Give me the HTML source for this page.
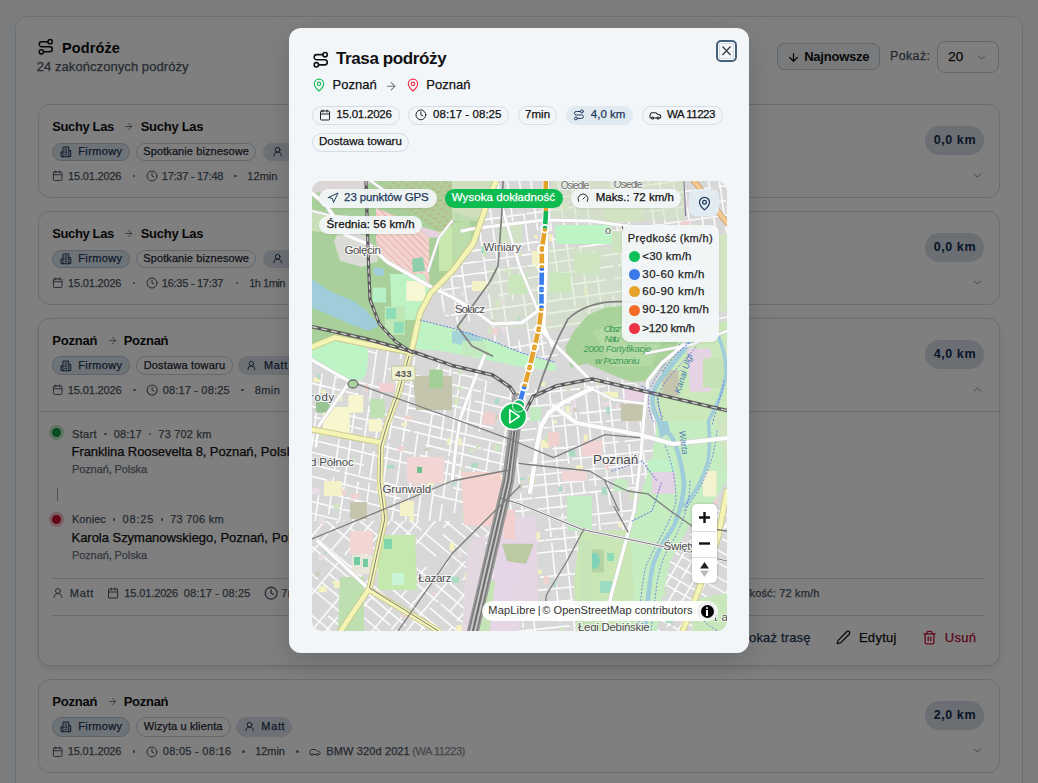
<!DOCTYPE html>
<html><head><meta charset="utf-8"><style>
*{box-sizing:border-box;margin:0;padding:0}
html,body{width:1038px;height:783px;overflow:hidden}
body{background:#f6f8fb;font-family:"Liberation Sans",sans-serif;color:#111827;position:relative}
.abs{position:absolute}
.panel{position:absolute;left:14.5px;top:16px;width:1008px;height:800px;background:#fff;border:1px solid #d9e0e8;border-radius:12px}
.card{position:absolute;left:37.5px;width:962px;background:#fff;border:1px solid #d3dae3;border-radius:12px}
.t{position:absolute;white-space:nowrap;line-height:1;-webkit-text-stroke:0.25px currentColor}
.overlay{position:absolute;left:0;top:0;width:1038px;height:783px;background:rgba(0,0,0,.5)}
svg{overflow:visible}
</style></head><body>
<div class="panel"></div><svg style="position:absolute;left:37.2px;top:38.4px" width="17.5" height="17.5" viewBox="0 0 24 24" fill="none" stroke="#111" stroke-width="2.1" stroke-linecap="round" stroke-linejoin="round" ><circle cx="6" cy="19" r="3"/><path d="M9 19h8.5a3.5 3.5 0 0 0 0-7h-11a3.5 3.5 0 0 1 0-7H15"/><circle cx="18" cy="5" r="3"/></svg><div class="t" style="left:61.93px;top:40.76px;font-size:14.5px;color:#0b0b0b;font-weight:bold;-webkit-text-stroke:0;letter-spacing:0.125px;">Podróże</div><div class="t" style="left:36.72px;top:59.54px;font-size:13px;color:#4b5563;letter-spacing:0.067px;">24 zakończonych podróży</div><div class="abs" style="left:776.5px;top:42.7px;width:103px;height:27.8px;border:1px solid #c3ccd6;border-radius:7px;background:#f1f4f7"></div><svg style="position:absolute;left:786.7px;top:50.5px" width="13" height="13" viewBox="0 0 24 24" fill="none" stroke="#111" stroke-width="2.3" stroke-linecap="round" stroke-linejoin="round" ><path d="M12 5v14"/><path d="m19 12-7 7-7-7"/></svg><div class="t" style="left:804.22px;top:49.84px;font-size:13px;color:#111;font-weight:bold;-webkit-text-stroke:0;letter-spacing:-0.236px;">Najnowsze</div><div class="t" style="left:889.95px;top:50.30px;font-size:12.5px;color:#4b5563;letter-spacing:0.367px;">Pokaż:</div><div class="abs" style="left:937.4px;top:41px;width:62px;height:31.8px;border:1px solid #c3ccd6;border-radius:8px;background:#fff"></div><div class="t" style="left:948.30px;top:49.78px;font-size:13.5px;color:#111;">20</div><svg style="position:absolute;left:974.5px;top:50.5px" width="13" height="13" viewBox="0 0 24 24" fill="none" stroke="#6b7280" stroke-width="1.4" stroke-linecap="round" stroke-linejoin="round" ><path d="m6 9 6 6 6-6"/></svg><div class="card" style="top:104px;height:94px;"></div><div class="t" style="left:52.22px;top:120.04px;font-size:13px;color:#111;font-weight:bold;-webkit-text-stroke:0;letter-spacing:-0.379px;">Suchy Las</div><svg style="position:absolute;left:123px;top:121.3px" width="11" height="11" viewBox="0 0 24 24" fill="none" stroke="#6b7280" stroke-width="2" stroke-linecap="round" stroke-linejoin="round" ><path d="M5 12h14"/><path d="m12 5 7 7-7 7"/></svg><div class="t" style="left:140.72px;top:120.04px;font-size:13px;color:#111;font-weight:bold;-webkit-text-stroke:0;letter-spacing:-0.279px;">Suchy Las</div><div class="abs" style="left:52.3px;top:142.5px;width:77.50000000000001px;height:18.5px;border-radius:9.25px;background:#dde7f0;border:1px solid #b8c4d0;"></div><svg style="position:absolute;left:60.22392px;top:145.87px" width="11.759999999999996" height="11.759999999999996" viewBox="0 0 24 24" fill="none" stroke="#1d3557" stroke-width="2.1" stroke-linecap="round" stroke-linejoin="round" ><path d="M6 22V4a2 2 0 0 1 2-2h8a2 2 0 0 1 2 2v18Z"/><path d="M6 12H4a2 2 0 0 0-2 2v6a2 2 0 0 0 2 2h2"/><path d="M18 9h2a2 2 0 0 1 2 2v9a2 2 0 0 1-2 2h-2"/><path d="M10 6h4"/><path d="M10 10h4"/><path d="M10 14h4"/><path d="M10 18h4"/></svg><div class="t" style="left:78.24px;top:146.33px;font-size:11px;color:#1d3557;letter-spacing:0.375px;">Firmowy</div><div class="abs" style="left:136px;top:142.5px;width:120px;height:18.5px;border-radius:9.25px;background:#fff;border:1px solid #c6ced8;"></div><div class="t" style="left:143.34px;top:146.33px;font-size:11px;color:#1f2937;letter-spacing:0.091px;">Spotkanie biznesowe</div><div class="abs" style="left:262.5px;top:142.5px;width:67.5px;height:18.5px;border-radius:9.25px;background:#dbe3eb;border:1px solid #dbe3eb;"></div><svg style="position:absolute;left:271.66376px;top:146.11px" width="11.279999999999973" height="11.279999999999973" viewBox="0 0 24 24" fill="none" stroke="#1d3557" stroke-width="2.1" stroke-linecap="round" stroke-linejoin="round" ><circle cx="12" cy="8" r="5"/><path d="M20 21a8 8 0 0 0-16 0"/></svg><div class="t" style="left:289.34px;top:146.33px;font-size:11px;color:#1d3557;letter-spacing:0.568px;">Matt</div><svg style="position:absolute;left:52.0538px;top:170.3px" width="11.4" height="11.4" viewBox="0 0 24 24" fill="none" stroke="#4b5563" stroke-width="2" stroke-linecap="round" stroke-linejoin="round" ><rect width="18" height="18" x="3" y="4" rx="2"/><path d="M16 2v4"/><path d="M8 2v4"/><path d="M3 10h18"/></svg><div class="t" style="left:68.04px;top:170.58px;font-size:11px;color:#4b5563;letter-spacing:-0.184px;">15.01.2026</div><div class="abs" style="left:132.8px;top:174.8px;width:2.4px;height:2.4px;border-radius:2px;background:#6b7280"></div><svg style="position:absolute;left:146.004px;top:170.0px" width="12.0" height="12.0" viewBox="0 0 24 24" fill="none" stroke="#4b5563" stroke-width="2" stroke-linecap="round" stroke-linejoin="round" ><circle cx="12" cy="12" r="10"/><path d="M12 6v6l4 2"/></svg><div class="t" style="left:161.84px;top:170.58px;font-size:11px;color:#4b5563;letter-spacing:-0.270px;">17:37 - 17:48</div><div class="abs" style="left:234.3px;top:174.8px;width:2.4px;height:2.4px;border-radius:2px;background:#6b7280"></div><div class="t" style="left:247.34px;top:170.58px;font-size:11px;color:#4b5563;letter-spacing:0.035px;">12min</div><div class="abs" style="left:925.3px;top:126.3px;width:59.2px;height:28.3px;border-radius:14.2px;background:#d6dee7"></div><div class="t" style="left:933.75px;top:134.30px;font-size:12.5px;color:#112b4d;font-weight:bold;-webkit-text-stroke:0;letter-spacing:0.567px;">0,0 km</div><svg style="position:absolute;left:970.5px;top:168.5px" width="13" height="13" viewBox="0 0 24 24" fill="none" stroke="#6b7280" stroke-width="1.6" stroke-linecap="round" stroke-linejoin="round" ><path d="m6 9 6 6 6-6"/></svg><div class="card" style="top:211px;height:94px;"></div><div class="t" style="left:52.22px;top:227.04px;font-size:13px;color:#111;font-weight:bold;-webkit-text-stroke:0;letter-spacing:-0.379px;">Suchy Las</div><svg style="position:absolute;left:123px;top:228.3px" width="11" height="11" viewBox="0 0 24 24" fill="none" stroke="#6b7280" stroke-width="2" stroke-linecap="round" stroke-linejoin="round" ><path d="M5 12h14"/><path d="m12 5 7 7-7 7"/></svg><div class="t" style="left:140.72px;top:227.04px;font-size:13px;color:#111;font-weight:bold;-webkit-text-stroke:0;letter-spacing:-0.279px;">Suchy Las</div><div class="abs" style="left:52.3px;top:249.5px;width:77.50000000000001px;height:18.5px;border-radius:9.25px;background:#dde7f0;border:1px solid #b8c4d0;"></div><svg style="position:absolute;left:60.22392px;top:252.87px" width="11.759999999999996" height="11.759999999999996" viewBox="0 0 24 24" fill="none" stroke="#1d3557" stroke-width="2.1" stroke-linecap="round" stroke-linejoin="round" ><path d="M6 22V4a2 2 0 0 1 2-2h8a2 2 0 0 1 2 2v18Z"/><path d="M6 12H4a2 2 0 0 0-2 2v6a2 2 0 0 0 2 2h2"/><path d="M18 9h2a2 2 0 0 1 2 2v9a2 2 0 0 1-2 2h-2"/><path d="M10 6h4"/><path d="M10 10h4"/><path d="M10 14h4"/><path d="M10 18h4"/></svg><div class="t" style="left:78.24px;top:253.33px;font-size:11px;color:#1d3557;letter-spacing:0.375px;">Firmowy</div><div class="abs" style="left:136px;top:249.5px;width:120px;height:18.5px;border-radius:9.25px;background:#fff;border:1px solid #c6ced8;"></div><div class="t" style="left:143.34px;top:253.33px;font-size:11px;color:#1f2937;letter-spacing:0.091px;">Spotkanie biznesowe</div><div class="abs" style="left:262.5px;top:249.5px;width:67.5px;height:18.5px;border-radius:9.25px;background:#dbe3eb;border:1px solid #dbe3eb;"></div><svg style="position:absolute;left:271.66376px;top:253.11px" width="11.279999999999973" height="11.279999999999973" viewBox="0 0 24 24" fill="none" stroke="#1d3557" stroke-width="2.1" stroke-linecap="round" stroke-linejoin="round" ><circle cx="12" cy="8" r="5"/><path d="M20 21a8 8 0 0 0-16 0"/></svg><div class="t" style="left:289.34px;top:253.33px;font-size:11px;color:#1d3557;letter-spacing:0.568px;">Matt</div><svg style="position:absolute;left:52.0538px;top:277.3px" width="11.4" height="11.4" viewBox="0 0 24 24" fill="none" stroke="#4b5563" stroke-width="2" stroke-linecap="round" stroke-linejoin="round" ><rect width="18" height="18" x="3" y="4" rx="2"/><path d="M16 2v4"/><path d="M8 2v4"/><path d="M3 10h18"/></svg><div class="t" style="left:68.04px;top:277.58px;font-size:11px;color:#4b5563;letter-spacing:-0.184px;">15.01.2026</div><div class="abs" style="left:132.8px;top:281.8px;width:2.4px;height:2.4px;border-radius:2px;background:#6b7280"></div><svg style="position:absolute;left:146.004px;top:277.0px" width="12.0" height="12.0" viewBox="0 0 24 24" fill="none" stroke="#4b5563" stroke-width="2" stroke-linecap="round" stroke-linejoin="round" ><circle cx="12" cy="12" r="10"/><path d="M12 6v6l4 2"/></svg><div class="t" style="left:161.84px;top:277.58px;font-size:11px;color:#4b5563;letter-spacing:-0.270px;">16:35 - 17:37</div><div class="abs" style="left:235.8px;top:281.8px;width:2.4px;height:2.4px;border-radius:2px;background:#6b7280"></div><div class="t" style="left:249.14px;top:277.58px;font-size:11px;color:#4b5563;letter-spacing:-0.473px;">1h 1min</div><div class="abs" style="left:925.3px;top:233.3px;width:59.2px;height:28.3px;border-radius:14.2px;background:#d6dee7"></div><div class="t" style="left:933.75px;top:241.30px;font-size:12.5px;color:#112b4d;font-weight:bold;-webkit-text-stroke:0;letter-spacing:0.567px;">0,0 km</div><svg style="position:absolute;left:970.5px;top:275.5px" width="13" height="13" viewBox="0 0 24 24" fill="none" stroke="#6b7280" stroke-width="1.6" stroke-linecap="round" stroke-linejoin="round" ><path d="m6 9 6 6 6-6"/></svg><div class="card" style="top:318px;height:348px;box-shadow:0 3px 8px rgba(0,0,0,.10);"></div><div class="t" style="left:52.22px;top:334.04px;font-size:13px;color:#111;font-weight:bold;-webkit-text-stroke:0;letter-spacing:-0.185px;">Poznań</div><svg style="position:absolute;left:107px;top:335.3px" width="11" height="11" viewBox="0 0 24 24" fill="none" stroke="#6b7280" stroke-width="2" stroke-linecap="round" stroke-linejoin="round" ><path d="M5 12h14"/><path d="m12 5 7 7-7 7"/></svg><div class="t" style="left:123.72px;top:334.04px;font-size:13px;color:#111;font-weight:bold;-webkit-text-stroke:0;letter-spacing:-0.285px;">Poznań</div><div class="abs" style="left:52.3px;top:356.3px;width:77.50000000000001px;height:18.69999999999999px;border-radius:9.349999999999994px;background:#dde7f0;border:1px solid #b8c4d0;"></div><svg style="position:absolute;left:60.22392px;top:359.77px" width="11.759999999999996" height="11.759999999999996" viewBox="0 0 24 24" fill="none" stroke="#1d3557" stroke-width="2.1" stroke-linecap="round" stroke-linejoin="round" ><path d="M6 22V4a2 2 0 0 1 2-2h8a2 2 0 0 1 2 2v18Z"/><path d="M6 12H4a2 2 0 0 0-2 2v6a2 2 0 0 0 2 2h2"/><path d="M18 9h2a2 2 0 0 1 2 2v9a2 2 0 0 1-2 2h-2"/><path d="M10 6h4"/><path d="M10 10h4"/><path d="M10 14h4"/><path d="M10 18h4"/></svg><div class="t" style="left:78.24px;top:360.23px;font-size:11px;color:#1d3557;letter-spacing:0.375px;">Firmowy</div><div class="abs" style="left:136.2px;top:356.3px;width:96.5px;height:18.69999999999999px;border-radius:9.349999999999994px;background:#fff;border:1px solid #c6ced8;"></div><div class="t" style="left:143.64px;top:360.23px;font-size:11px;color:#1f2937;letter-spacing:0.194px;">Dostawa towaru</div><div class="abs" style="left:238.4px;top:356.3px;width:71.6px;height:18.69999999999999px;border-radius:9.349999999999994px;background:#dbe3eb;border:1px solid #dbe3eb;"></div><svg style="position:absolute;left:246.1036px;top:360.25px" width="10.799999999999999" height="10.799999999999999" viewBox="0 0 24 24" fill="none" stroke="#1d3557" stroke-width="2.1" stroke-linecap="round" stroke-linejoin="round" ><circle cx="12" cy="8" r="5"/><path d="M20 21a8 8 0 0 0-16 0"/></svg><div class="t" style="left:263.94px;top:360.23px;font-size:11px;color:#1d3557;letter-spacing:0.635px;">Matt</div><svg style="position:absolute;left:52.0538px;top:384.3px" width="11.4" height="11.4" viewBox="0 0 24 24" fill="none" stroke="#4b5563" stroke-width="2" stroke-linecap="round" stroke-linejoin="round" ><rect width="18" height="18" x="3" y="4" rx="2"/><path d="M16 2v4"/><path d="M8 2v4"/><path d="M3 10h18"/></svg><div class="t" style="left:67.84px;top:384.58px;font-size:11px;color:#4b5563;letter-spacing:-0.140px;">15.01.2026</div><div class="abs" style="left:133.20000000000002px;top:388.8px;width:2.4px;height:2.4px;border-radius:2px;background:#6b7280"></div><svg style="position:absolute;left:146.08408px;top:383.88px" width="12.24000000000002" height="12.24000000000002" viewBox="0 0 24 24" fill="none" stroke="#4b5563" stroke-width="2" stroke-linecap="round" stroke-linejoin="round" ><circle cx="12" cy="12" r="10"/><path d="M12 6v6l4 2"/></svg><div class="t" style="left:162.64px;top:384.58px;font-size:11px;color:#4b5563;letter-spacing:0.180px;">08:17 - 08:25</div><div class="abs" style="left:241.20000000000002px;top:388.8px;width:2.4px;height:2.4px;border-radius:2px;background:#6b7280"></div><div class="t" style="left:254.64px;top:384.58px;font-size:11px;color:#4b5563;letter-spacing:0.452px;">8min</div><div class="abs" style="left:925.3px;top:340.3px;width:59.2px;height:28.3px;border-radius:14.2px;background:#d6dee7"></div><div class="t" style="left:933.75px;top:348.30px;font-size:12.5px;color:#112b4d;font-weight:bold;-webkit-text-stroke:0;letter-spacing:0.567px;">4,0 km</div><svg style="position:absolute;left:970.5px;top:382.5px" width="13" height="13" viewBox="0 0 24 24" fill="none" stroke="#6b7280" stroke-width="1.6" stroke-linecap="round" stroke-linejoin="round" ><path d="m18 15-6-6-6 6"/></svg><div class="abs" style="left:38.5px;top:410.5px;width:960px;height:1px;background:#d3dae3"></div><div class="abs" style="left:49px;top:424.7px;width:15px;height:15px;border-radius:8px;background:#bfe6c9"></div><div class="abs" style="left:52px;top:427.8px;width:9px;height:9px;border-radius:5px;background:#0c9a41"></div><div class="t" style="left:71.94px;top:428.58px;font-size:11px;color:#4b5563;letter-spacing:0.367px;">Start</div><div class="abs" style="left:104.2px;top:432.8px;width:2.4px;height:2.4px;border-radius:2px;background:#6b7280"></div><div class="t" style="left:113.84px;top:428.58px;font-size:11px;color:#4b5563;letter-spacing:0.068px;">08:17</div><div class="abs" style="left:148.70000000000002px;top:432.8px;width:2.4px;height:2.4px;border-radius:2px;background:#6b7280"></div><div class="t" style="left:158.34px;top:428.58px;font-size:11px;color:#4b5563;letter-spacing:0.204px;">73 702 km</div><div class="t" style="left:71.52px;top:445.04px;font-size:13px;color:#111;letter-spacing:-0.077px;">Franklina Roosevelta 8, Poznań,</div><div class="t" style="left:260.82px;top:445.04px;font-size:13px;color:#111;letter-spacing:0.136px;">Polska</div><div class="t" style="left:71.94px;top:464.28px;font-size:11px;color:#6b7280;letter-spacing:-0.095px;">Poznań, Polska</div><div class="abs" style="left:56.5px;top:488px;width:1.3px;height:13px;background:#9aa3ad"></div><div class="abs" style="left:49px;top:511.9px;width:15px;height:15px;border-radius:8px;background:#f0c0c7"></div><div class="abs" style="left:52px;top:515px;width:9px;height:9px;border-radius:5px;background:#c8102e"></div><div class="t" style="left:71.94px;top:514.18px;font-size:11px;color:#4b5563;letter-spacing:0.053px;">Koniec</div><div class="abs" style="left:112.8px;top:518.4px;width:2.4px;height:2.4px;border-radius:2px;background:#6b7280"></div><div class="t" style="left:122.54px;top:514.18px;font-size:11px;color:#4b5563;letter-spacing:0.843px;">08:25</div><div class="abs" style="left:161.0px;top:518.4px;width:2.4px;height:2.4px;border-radius:2px;background:#6b7280"></div><div class="t" style="left:170.14px;top:514.18px;font-size:11px;color:#4b5563;letter-spacing:0.267px;">73 706 km</div><div class="t" style="left:71.52px;top:531.04px;font-size:13px;color:#111;letter-spacing:-0.030px;">Karola Szymanowskiego, Poznań,</div><div class="t" style="left:272.12px;top:531.04px;font-size:13px;color:#111;letter-spacing:0.076px;">Polska</div><div class="t" style="left:71.94px;top:550.48px;font-size:11px;color:#6b7280;letter-spacing:-0.095px;">Poznań, Polska</div><div class="abs" style="left:52px;top:578px;width:933px;height:1px;background:#d3dae3"></div><svg style="position:absolute;left:52.004px;top:587.3px" width="12.0" height="12.0" viewBox="0 0 24 24" fill="none" stroke="#4b5563" stroke-width="2" stroke-linecap="round" stroke-linejoin="round" ><circle cx="12" cy="8" r="5"/><path d="M20 21a8 8 0 0 0-16 0"/></svg><div class="t" style="left:69.84px;top:587.88px;font-size:11px;color:#4b5563;letter-spacing:0.702px;">Matt</div><svg style="position:absolute;left:107.39404px;top:587.24px" width="12.119999999999992" height="12.119999999999992" viewBox="0 0 24 24" fill="none" stroke="#4b5563" stroke-width="2" stroke-linecap="round" stroke-linejoin="round" ><rect width="18" height="18" x="3" y="4" rx="2"/><path d="M16 2v4"/><path d="M8 2v4"/><path d="M3 10h18"/></svg><div class="t" style="left:124.34px;top:587.88px;font-size:11px;color:#4b5563;letter-spacing:-0.129px;">15.01.2026</div><div class="t" style="left:183.64px;top:587.88px;font-size:11px;color:#4b5563;letter-spacing:0.164px;">08:17 - 08:25</div><svg style="position:absolute;left:264.41476px;top:586.16px" width="14.279999999999973" height="14.279999999999973" viewBox="0 0 24 24" fill="none" stroke="#4b5563" stroke-width="2" stroke-linecap="round" stroke-linejoin="round" ><circle cx="12" cy="12" r="10"/><path d="M12 6v6l4 2"/></svg><div class="t" style="left:281.34px;top:587.88px;font-size:11px;color:#4b5563;letter-spacing:0.419px;">7min</div><div class="t" style="left:693.34px;top:587.88px;font-size:11px;color:#4b5563;letter-spacing:0.174px;">Maks. prędkość: 72 km/h</div><div class="abs" style="left:52px;top:615px;width:933px;height:1px;background:#d3dae3"></div><div class="t" style="left:740.22px;top:630.54px;font-size:13px;color:#1d3557;letter-spacing:0.165px;">Pokaż trasę</div><svg style="position:absolute;left:835.5px;top:629.5px" width="15" height="15" viewBox="0 0 24 24" fill="none" stroke="#111" stroke-width="2" stroke-linecap="round" stroke-linejoin="round" ><path d="M21.174 6.812a1 1 0 0 0-3.986-3.987L3.842 16.174a2 2 0 0 0-.5.83l-1.321 4.352a.5.5 0 0 0 .623.622l4.353-1.32a2 2 0 0 0 .83-.497z"/></svg><div class="t" style="left:858.92px;top:630.54px;font-size:13px;color:#111;letter-spacing:0.293px;">Edytuj</div><svg style="position:absolute;left:922px;top:629.5px" width="15" height="15" viewBox="0 0 24 24" fill="none" stroke="#c8103a" stroke-width="2" stroke-linecap="round" stroke-linejoin="round" ><path d="M3 6h18"/><path d="M19 6v14c0 1-1 2-2 2H7c-1 0-2-1-2-2V6"/><path d="M8 6V4c0-1 1-2 2-2h4c1 0 2 1 2 2v2"/><line x1="10" x2="10" y1="11" y2="17"/><line x1="14" x2="14" y1="11" y2="17"/></svg><div class="t" style="left:944.72px;top:630.54px;font-size:13px;color:#b80f2f;letter-spacing:0.283px;">Usuń</div><div class="card" style="top:679px;height:93.5px;"></div><div class="t" style="left:52.22px;top:695.04px;font-size:13px;color:#111;font-weight:bold;-webkit-text-stroke:0;letter-spacing:-0.185px;">Poznań</div><svg style="position:absolute;left:107px;top:696.3px" width="11" height="11" viewBox="0 0 24 24" fill="none" stroke="#6b7280" stroke-width="2" stroke-linecap="round" stroke-linejoin="round" ><path d="M5 12h14"/><path d="m12 5 7 7-7 7"/></svg><div class="t" style="left:123.72px;top:695.04px;font-size:13px;color:#111;font-weight:bold;-webkit-text-stroke:0;letter-spacing:-0.285px;">Poznań</div><div class="abs" style="left:52.3px;top:717px;width:77.50000000000001px;height:19.5px;border-radius:9.75px;background:#dde7f0;border:1px solid #b8c4d0;"></div><svg style="position:absolute;left:60.22392px;top:720.87px" width="11.759999999999996" height="11.759999999999996" viewBox="0 0 24 24" fill="none" stroke="#1d3557" stroke-width="2.1" stroke-linecap="round" stroke-linejoin="round" ><path d="M6 22V4a2 2 0 0 1 2-2h8a2 2 0 0 1 2 2v18Z"/><path d="M6 12H4a2 2 0 0 0-2 2v6a2 2 0 0 0 2 2h2"/><path d="M18 9h2a2 2 0 0 1 2 2v9a2 2 0 0 1-2 2h-2"/><path d="M10 6h4"/><path d="M10 10h4"/><path d="M10 14h4"/><path d="M10 18h4"/></svg><div class="t" style="left:78.24px;top:721.33px;font-size:11px;color:#1d3557;letter-spacing:0.375px;">Firmowy</div><div class="abs" style="left:136.2px;top:717px;width:94.4px;height:19.5px;border-radius:9.75px;background:#fff;border:1px solid #c6ced8;"></div><div class="t" style="left:143.64px;top:721.33px;font-size:11px;color:#1f2937;letter-spacing:0.118px;">Wizyta u klienta</div><div class="abs" style="left:236px;top:717px;width:56.19999999999999px;height:19.5px;border-radius:9.75px;background:#dbe3eb;border:1px solid #dbe3eb;"></div><svg style="position:absolute;left:244.07372px;top:721.17px" width="11.160000000000013" height="11.160000000000013" viewBox="0 0 24 24" fill="none" stroke="#1d3557" stroke-width="2.1" stroke-linecap="round" stroke-linejoin="round" ><circle cx="12" cy="8" r="5"/><path d="M20 21a8 8 0 0 0-16 0"/></svg><div class="t" style="left:261.34px;top:721.33px;font-size:11px;color:#1d3557;letter-spacing:0.635px;">Matt</div><svg style="position:absolute;left:52.0538px;top:745.8px" width="11.4" height="11.4" viewBox="0 0 24 24" fill="none" stroke="#4b5563" stroke-width="2" stroke-linecap="round" stroke-linejoin="round" ><rect width="18" height="18" x="3" y="4" rx="2"/><path d="M16 2v4"/><path d="M8 2v4"/><path d="M3 10h18"/></svg><div class="t" style="left:67.74px;top:746.08px;font-size:11px;color:#4b5563;letter-spacing:-0.151px;">15.01.2026</div><div class="abs" style="left:132.8px;top:750.3px;width:2.4px;height:2.4px;border-radius:2px;background:#6b7280"></div><svg style="position:absolute;left:146.31396px;top:745.5600000000001px" width="11.879999999999972" height="11.879999999999972" viewBox="0 0 24 24" fill="none" stroke="#4b5563" stroke-width="2" stroke-linecap="round" stroke-linejoin="round" ><circle cx="12" cy="12" r="10"/><path d="M12 6v6l4 2"/></svg><div class="t" style="left:162.74px;top:746.08px;font-size:11px;color:#4b5563;letter-spacing:0.289px;">08:05 - 08:16</div><div class="abs" style="left:242.3px;top:750.3px;width:2.4px;height:2.4px;border-radius:2px;background:#6b7280"></div><div class="t" style="left:255.24px;top:746.08px;font-size:11px;color:#4b5563;letter-spacing:-0.065px;">12min</div><div class="abs" style="left:296.3px;top:750.3px;width:2.4px;height:2.4px;border-radius:2px;background:#6b7280"></div><svg style="position:absolute;left:308.80400000000003px;top:745.5px" width="12.0" height="12.0" viewBox="0 0 24 24" fill="none" stroke="#4b5563" stroke-width="2" stroke-linecap="round" stroke-linejoin="round" ><path d="M19 17h2c.6 0 1-.4 1-1v-3c0-.9-.7-1.7-1.5-1.9C18.7 10.6 16 10 16 10s-1.3-1.4-2.2-2.3c-.5-.4-1.1-.7-1.8-.7H5c-.6 0-1.1.4-1.4.9l-1.4 2.9A3.7 3.7 0 0 0 2 12v4c0 .6.4 1 1 1h2"/><circle cx="7" cy="17" r="2"/><path d="M9 17h6"/><circle cx="17" cy="17" r="2"/></svg><div class="t" style="left:326.34px;top:746.08px;font-size:11px;color:#4b5563;letter-spacing:0.122px;">BMW 320d 2021</div><div class="t" style="left:412.34px;top:746.08px;font-size:11px;color:#8a929c;letter-spacing:-0.440px;">(WA 11223)</div><div class="abs" style="left:925.3px;top:701.3px;width:59.2px;height:28.3px;border-radius:14.2px;background:#d6dee7"></div><div class="t" style="left:933.75px;top:709.30px;font-size:12.5px;color:#112b4d;font-weight:bold;-webkit-text-stroke:0;letter-spacing:0.567px;">2,0 km</div><svg style="position:absolute;left:970.5px;top:743.5px" width="13" height="13" viewBox="0 0 24 24" fill="none" stroke="#6b7280" stroke-width="1.6" stroke-linecap="round" stroke-linejoin="round" ><path d="m6 9 6 6 6-6"/></svg>
<div class="overlay"></div>
<div class="abs" style="left:289px;top:28px;width:460.4px;height:625px;background:#f3f6f9;border-radius:12px;box-shadow:0 10px 30px rgba(0,0,0,.15)"></div><svg style="position:absolute;left:311.8px;top:51.1px" width="17.5" height="17.5" viewBox="0 0 24 24" fill="none" stroke="#111" stroke-width="2.2" stroke-linecap="round" stroke-linejoin="round" ><circle cx="6" cy="19" r="3"/><path d="M9 19h8.5a3.5 3.5 0 0 0 0-7h-11a3.5 3.5 0 0 1 0-7H15"/><circle cx="18" cy="5" r="3"/></svg><div class="t" style="left:335.98px;top:50.16px;font-size:17px;color:#111;font-weight:bold;-webkit-text-stroke:0;letter-spacing:-0.380px;">Trasa podróży</div><svg style="position:absolute;left:311.6px;top:78.2px" width="14" height="14" viewBox="0 0 24 24" fill="none" stroke="#16c05a" stroke-width="2" stroke-linecap="round" stroke-linejoin="round" ><path d="M20 10c0 4.993-5.539 10.193-7.399 11.799a1 1 0 0 1-1.202 0C9.539 20.193 4 14.993 4 10a8 8 0 0 1 16 0"/><circle cx="12" cy="10" r="3"/></svg><div class="t" style="left:332.62px;top:78.44px;font-size:13px;color:#111;letter-spacing:0.001px;">Poznań</div><svg style="position:absolute;left:384.5px;top:79.5px" width="12.5" height="12.5" viewBox="0 0 24 24" fill="none" stroke="#6b7280" stroke-width="2" stroke-linecap="round" stroke-linejoin="round" ><path d="M5 12h14"/><path d="m12 5 7 7-7 7"/></svg><svg style="position:absolute;left:405.6px;top:78.2px" width="14" height="14" viewBox="0 0 24 24" fill="none" stroke="#ef3047" stroke-width="2" stroke-linecap="round" stroke-linejoin="round" ><path d="M20 10c0 4.993-5.539 10.193-7.399 11.799a1 1 0 0 1-1.202 0C9.539 20.193 4 14.993 4 10a8 8 0 0 1 16 0"/><circle cx="12" cy="10" r="3"/></svg><div class="t" style="left:426.22px;top:78.44px;font-size:13px;color:#111;letter-spacing:0.041px;">Poznań</div><div class="abs" style="left:312px;top:105.8px;width:88.30px;height:19.10px;border-radius:9.55px;background:#f3f6f9;border:1px solid #d5dce4;"></div><svg style="position:absolute;left:319.004px;top:109.35px" width="12.0" height="12.0" viewBox="0 0 24 24" fill="none" stroke="#222" stroke-width="2" stroke-linecap="round" stroke-linejoin="round" ><rect width="18" height="18" x="3" y="4" rx="2"/><path d="M16 2v4"/><path d="M8 2v4"/><path d="M3 10h18"/></svg><div class="t" style="left:336.31px;top:109.17px;font-size:11.5px;color:#111;letter-spacing:-0.212px;">15.01.2026</div><div class="abs" style="left:408px;top:105.8px;width:101.00px;height:19.10px;border-radius:9.55px;background:#f3f6f9;border:1px solid #d5dce4;"></div><svg style="position:absolute;left:415.02392px;top:109.46999999999998px" width="11.760000000000014" height="11.760000000000014" viewBox="0 0 24 24" fill="none" stroke="#222" stroke-width="2" stroke-linecap="round" stroke-linejoin="round" ><circle cx="12" cy="12" r="10"/><path d="M12 6v6l4 2"/></svg><div class="t" style="left:433.11px;top:109.17px;font-size:11.5px;color:#111;letter-spacing:0.048px;">08:17 - 08:25</div><div class="abs" style="left:517.9px;top:105.8px;width:39.50px;height:19.10px;border-radius:9.55px;background:#f3f6f9;border:1px solid #d5dce4;"></div><div class="t" style="left:524.91px;top:109.17px;font-size:11.5px;color:#111;letter-spacing:0.075px;">7min</div><div class="abs" style="left:565.6px;top:105.8px;width:67.70px;height:19.10px;border-radius:9.55px;background:#e1e9f1;"></div><svg style="position:absolute;left:572.81396px;top:109.40999999999994px" width="11.88000000000011" height="11.88000000000011" viewBox="0 0 24 24" fill="none" stroke="#1d3a5c" stroke-width="2" stroke-linecap="round" stroke-linejoin="round" ><circle cx="6" cy="19" r="3"/><path d="M9 19h8.5a3.5 3.5 0 0 0 0-7h-11a3.5 3.5 0 0 1 0-7H15"/><circle cx="18" cy="5" r="3"/></svg><div class="t" style="left:590.81px;top:109.17px;font-size:11.5px;color:#1d3a5c;letter-spacing:0.028px;">4,0 km</div><div class="abs" style="left:642px;top:105.8px;width:81.00px;height:19.10px;border-radius:9.55px;background:#f3f6f9;border:1px solid #d5dce4;"></div><svg style="position:absolute;left:648.6442400000001px;top:108.99000000000005px" width="12.71999999999989" height="12.71999999999989" viewBox="0 0 24 24" fill="none" stroke="#222" stroke-width="2" stroke-linecap="round" stroke-linejoin="round" ><path d="M19 17h2c.6 0 1-.4 1-1v-3c0-.9-.7-1.7-1.5-1.9C18.7 10.6 16 10 16 10s-1.3-1.4-2.2-2.3c-.5-.4-1.1-.7-1.8-.7H5c-.6 0-1.1.4-1.4.9l-1.4 2.9A3.7 3.7 0 0 0 2 12v4c0 .6.4 1 1 1h2"/><circle cx="7" cy="17" r="2"/><path d="M9 17h6"/><circle cx="17" cy="17" r="2"/></svg><div class="t" style="left:667.11px;top:109.17px;font-size:11.5px;color:#111;letter-spacing:-0.505px;">WA 11223</div><div class="abs" style="left:312px;top:132.5px;width:97.40px;height:19.50px;border-radius:9.75px;background:#f3f6f9;border:1px solid #d5dce4;"></div><div class="t" style="left:319.01px;top:136.07px;font-size:11.5px;color:#111;letter-spacing:0.031px;">Dostawa towaru</div><div class="abs" style="left:716px;top:40px;width:21.2px;height:21.8px;border-radius:5px;border:2px solid #45607c;box-shadow:inset 0 0 0 1px #fff"></div><div class="abs" style="left:719.4px;top:43.3px;width:14.6px;height:15.4px;border:1px solid #d3dae2;border-radius:1px"></div><svg style="position:absolute;left:722.3px;top:46.3px" width="9" height="9" viewBox="0 0 9 9" fill="none" stroke="#3a3a3a" stroke-width="1.25"><path d="M0.5 0.5l8 8.5M8.5 0.5l-8 8.5"/></svg><svg style="position:absolute;left:312px;top:181px" width="415" height="450" viewBox="0 0 415 450"><defs><clipPath id="mc"><rect x="0" y="0" width="415" height="450" rx="10"/></clipPath></defs><g clip-path="url(#mc)"><rect x="0" y="0" width="415" height="450" fill="#d9d8d8"/><defs><clipPath id="dA"><polygon points="165,0 415,0 415,140 370,150 356,161 310,135 293,129 273,143 253,166 240,180 208,180 178,166 140,150 123,109 161,63 178,14"/></clipPath><clipPath id="dB"><polygon points="0,166 60,168 95,172 208,212 207,225 196,300 186,340 0,340"/></clipPath><clipPath id="dB2"><polygon points="0,340 186,340 161,450 0,450"/></clipPath><clipPath id="dC"><polygon points="208,212 260,200 300,196 415,228 415,270 340,280 330,330 318,380 300,450 161,450 196,300 207,225"/></clipPath><clipPath id="dD"><polygon points="0,40 70,55 65,80 0,80"/></clipPath><clipPath id="dE"><polygon points="358,379 395,330 415,320 415,450 345,450"/></clipPath></defs><path clip-path="url(#dA)" d="M487.9,-147.7L496.1,-89.4M497.1,-82.0L505.4,-22.7M506.1,-18.0L511.5,20.4M512.2,25.4L523.9,109.1M534.5,184.0L544.8,257.3M545.0,258.5L548.6,284.4M548.7,284.9L554.1,323.8M554.2,324.0L562.5,383.2M563.4,389.9L572.3,453.2M572.9,457.2L583.3,531.1M488.9,-41.5L495.6,6.7M496.0,9.0L500.2,39.0M500.6,42.1L512.9,129.8M514.0,137.3L526.3,225.0M526.6,226.7L539.5,319.1M540.6,326.8L548.3,381.1M549.0,386.1L560.6,468.7M463.7,-144.3L469.7,-101.3M469.8,-100.8L481.6,-16.8M482.2,-12.4L490.4,45.6M491.2,51.4L496.0,85.9M496.2,86.8L504.0,142.8M518.3,244.2L531.0,334.7M531.4,337.8L543.8,426.0M543.9,426.8L557.8,525.0M450.8,-142.5L457.7,-93.3M457.8,-92.7L462.2,-61.3M462.5,-59.4L472.3,10.0M472.8,13.6L486.3,109.6M486.9,114.2L499.4,203.3M512.8,298.7L518.3,337.6M525.9,391.4L535.6,460.9M539.9,491.3L550.7,568.4M438.6,-140.8L445.1,-94.2M445.9,-88.5L450.1,-58.7M450.8,-54.2L463.1,33.8M463.5,36.0L476.5,128.9M476.5,129.1L482.8,173.8M482.9,174.3L488.2,212.1M488.8,216.7L493.7,251.2M494.7,258.3L508.4,355.8M509.2,361.3L518.7,429.5M523.2,461.4L536.8,557.7M426.8,-139.1L437.9,-60.1M439.0,-52.2L443.3,-21.9M444.1,-16.0L457.0,75.6M481.5,250.2L489.3,305.9M490.3,312.8L499.7,380.1M500.2,383.1L509.7,451.1M414.1,-137.3L421.6,-83.7M430.4,-21.0L441.7,59.5M442.4,64.2L450.9,124.7M451.7,130.2L460.4,191.9M461.4,199.2L467.5,243.0M467.9,245.4L478.4,320.5M478.6,321.8L491.6,413.9M492.0,417.4L504.8,508.3M505.6,513.6L511.1,553.1M400.7,-135.5L413.4,-45.3M414.0,-40.7L420.8,7.5M434.4,104.0L447.8,199.4M448.0,200.7L456.2,258.9M456.4,260.6L464.2,316.1M472.6,376.0L480.8,434.4M480.8,434.6L493.4,524.2M388.6,-133.8L395.3,-86.1M395.3,-85.9L400.2,-51.1M400.2,-50.9L412.4,35.5M412.5,36.6L416.5,64.9M417.0,68.4L427.1,140.0M428.0,146.4L441.4,242.3M441.7,243.9L450.1,303.9M450.1,304.0L458.5,363.8M458.7,365.3L465.0,410.2M465.8,415.8L474.7,479.2M475.6,485.2L483.2,539.1M378.2,-132.3L391.4,-38.3M391.5,-37.3L399.7,21.2M400.8,28.4L408.2,81.1M421.5,175.7L431.7,248.8M432.5,254.6L444.6,340.1M452.2,394.2L465.8,491.5M366.8,-130.7L371.2,-99.8M371.8,-95.4L383.3,-13.6M383.3,-13.4L395.2,71.4M396.1,77.8L401.4,115.4M402.3,121.6L407.2,156.8M419.6,244.9L433.0,339.9M434.0,347.4L438.4,378.5M439.0,382.7L445.5,429.0M455.8,502.1L462.5,550.0M360.3,-80.9L369.2,-17.2M369.4,-15.7L378.5,48.9M391.8,143.6L400.4,204.8M400.5,205.3L409.6,270.1M410.7,277.7L423.8,371.0M424.3,374.8L429.1,408.9M430.0,415.4L442.9,507.0M443.2,509.6L448.7,548.5M343.0,-127.4L354.6,-44.7M354.8,-43.2L360.6,-1.5M361.0,1.0L368.2,52.2M368.3,53.0L379.4,132.0M380.0,136.1L386.1,179.4M386.7,183.6L394.7,240.8M395.2,244.1L404.2,308.2M404.4,309.8L414.5,381.4M415.1,385.6L427.4,473.6M428.4,480.4L434.3,522.4M329.6,-125.5L336.4,-77.3M344.2,-22.0L349.1,12.7M349.9,18.5L356.1,62.5M357.0,69.1L364.9,125.2M365.0,126.2L372.7,180.9M372.7,181.0L378.3,220.7M379.3,227.9L392.9,324.6M393.5,328.6L404.8,409.6M405.6,415.1L411.1,453.9M411.2,454.7L415.1,482.3M415.6,486.3L425.0,553.3M332.1,-29.5L336.6,2.4M337.6,9.9L345.9,69.0M346.3,71.6L354.6,131.0M355.1,134.4L364.9,203.8M365.7,209.4L378.0,296.8M378.5,300.4L389.7,380.1M389.9,381.6L395.1,418.7M408.7,515.4L421.1,604.1M348.9,178.8L360.4,260.5M360.8,263.7L371.8,342.2M372.2,344.9L380.6,404.5M381.0,407.3L391.1,479.5M391.4,481.3L404.7,576.2M294.1,-120.5L303.5,-53.4M304.0,-50.3L317.9,48.7M330.1,135.7L340.0,206.2M340.3,208.2L348.0,262.8M348.2,264.4L355.6,317.0M355.9,319.0L368.8,411.0M369.4,415.1L383.0,511.6M281.9,-118.8L293.3,-37.6M294.3,-30.3L299.5,6.4M299.7,7.7L308.3,69.3M308.4,69.7L321.7,164.7M322.3,168.9L332.0,238.0M332.4,240.3L342.7,313.7M343.0,316.0L353.9,393.9M354.0,394.0L360.0,437.0M360.2,438.2L371.5,519.0M372.5,526.2L383.8,606.5M300.9,114.3L310.7,183.9M311.4,188.8L319.6,247.4M319.7,247.8L328.7,311.8M329.2,315.3L339.6,389.7M339.9,391.7L349.5,459.7M255.7,-115.1L261.7,-72.6M262.7,-65.6L274.3,17.5M274.7,20.3L281.0,65.2M281.7,69.7L291.3,138.4M292.2,144.4L297.6,183.2M311.8,284.1L315.9,313.3M316.4,316.7L326.4,387.8M327.0,392.0L331.2,422.2M332.0,427.5L341.2,493.2M341.6,496.2L350.1,556.5M243.0,-113.3L255.2,-26.3M255.3,-25.3L267.2,59.5M268.1,65.6L273.8,106.2M274.1,108.3L286.0,193.2M286.7,198.4L300.6,296.6M312.9,384.5L320.2,436.7M321.2,443.6L325.5,474.2M326.1,478.7L334.7,539.4M230.1,-111.5L234.4,-81.1M235.1,-75.8L239.4,-45.0M240.2,-39.3L251.0,37.0M251.1,38.2L258.3,89.5M258.7,92.4L263.4,125.9M286.6,290.3L293.3,338.6M294.4,346.0L307.2,437.3M307.6,440.1L314.9,492.0M315.3,495.2L322.9,548.7M226.9,-40.3L232.2,-2.4M233.2,4.5L239.6,50.2M240.2,54.3L249.3,119.5M260.8,200.7L270.0,266.1M270.0,266.8L274.4,297.6M275.4,304.7L279.7,335.8M279.9,336.9L291.2,417.1M291.4,419.0L297.2,460.1M297.8,464.3L309.3,545.8M203.6,-107.8L214.1,-33.1M214.7,-28.8L225.7,49.5M262.0,307.9L270.9,371.5M271.8,377.9L279.7,433.9M291.5,517.9L296.7,555.1M192.4,-106.2L206.0,-9.4M206.4,-7.0L211.1,26.3M211.9,32.5L217.3,70.5M227.4,142.6L232.0,175.4M232.3,177.1L238.2,219.4M238.9,224.1L244.7,265.5M245.0,267.7L250.3,305.3M267.6,428.4L274.6,478.5M275.7,486.1L284.2,546.7M180.5,-104.5L189.3,-41.4M190.4,-33.6L200.8,40.0M200.8,40.1L209.2,99.9M210.1,106.2L221.0,184.0M221.2,185.2L226.3,221.6M226.6,223.7L239.1,313.0M239.9,318.1L253.7,416.6M254.3,420.8L259.3,456.8M272.3,549.0L276.7,579.9M170.0,-103.0L178.5,-42.6M189.5,35.7L201.2,119.0M206.9,159.5L216.1,224.6M216.2,225.8L228.4,312.4M228.8,314.8L233.0,345.2M233.5,349.0L244.5,426.8M245.3,432.3L249.8,464.9M159.9,-101.6L167.3,-48.9M167.6,-47.0L176.9,19.7M176.9,19.8L190.8,118.2M191.0,119.8L200.9,190.3M201.3,193.3L210.4,258.1M210.8,260.8L218.4,314.7M218.7,316.7L224.2,356.3M224.6,358.9L237.9,453.9M245.8,509.7L250.7,545.0M251.5,550.3L262.4,627.7M146.8,-99.8L156.5,-31.0M156.7,-29.2L161.8,7.2M167.0,44.0L175.8,106.7M176.7,112.8L188.7,198.5M189.1,201.2L196.9,256.5M209.0,342.7L219.3,416.5M219.4,416.6L226.3,466.0M227.0,471.1L231.6,503.8M148.2,-12.3L155.4,38.7M178.2,201.1L191.5,296.0M191.8,297.6L196.1,328.5M196.8,333.1L207.5,409.6M208.5,417.0L215.8,468.6M215.9,469.6L229.6,566.6M124.1,-96.6L133.4,-30.2M147.6,70.7L157.4,140.1M174.7,263.6L183.9,329.0M190.3,374.8L200.7,448.5M201.4,453.8L212.6,533.4M213.3,538.0L225.1,622.5M112.3,-94.9L117.3,-59.6M117.9,-55.0L123.2,-17.4M123.5,-15.3L132.9,51.6M133.6,56.7L137.5,84.3M137.7,85.4L151.2,181.4M151.7,185.2L159.5,240.5M160.2,245.9L171.6,327.0M187.0,436.2L194.7,491.4M195.3,495.9L208.3,587.9M100.7,-93.3L113.6,-1.4M125.5,83.5L135.2,152.6M135.6,155.0L145.3,223.9M145.4,224.9L153.5,282.8M154.0,286.0L158.0,314.6M158.6,318.7L164.6,361.3M165.0,364.4L170.9,406.7M172.0,413.9L185.5,510.4M97.4,-23.9L109.2,59.7M109.8,64.0L123.2,159.4M123.4,161.3L130.0,208.3M143.4,303.2L150.6,354.4M164.6,453.8L173.0,513.7M74.8,-89.7L82.0,-38.6M95.1,54.4L105.2,126.2M106.1,133.1L110.1,161.6M118.7,222.3L129.6,300.0M130.4,305.5L143.6,399.9M143.7,400.5L149.5,441.9M150.3,447.5L155.8,486.8M156.1,488.7L166.5,562.8M62.4,-87.9L75.1,2.5M82.7,56.7L89.1,102.1M89.2,102.8L102.9,200.5M103.5,204.7L112.5,268.9M113.2,273.6L119.6,319.5M120.5,325.9L124.9,357.1M125.8,363.1L131.8,406.1M138.9,456.9L142.8,484.2M151.7,547.4L157.0,585.5M51.0,-86.3L61.3,-12.7M80.5,123.9L92.2,206.6M92.8,211.4L98.8,253.7M99.6,259.8L111.3,343.0M111.6,344.8L120.2,405.9M120.8,410.5L129.5,472.3M130.2,477.1L141.1,554.9M142.1,561.8L147.4,599.9M39.1,-84.6L47.1,-27.6M47.4,-25.5L59.2,58.5M60.2,65.7L69.7,132.7M70.5,139.0L76.5,181.4M76.9,183.9L80.8,211.8M81.5,216.7L90.4,280.5M95.7,317.9L101.8,361.5M102.6,367.0L114.7,453.5M114.8,454.0L122.6,509.2M122.8,510.9L136.4,607.8M26.3,-82.8L40.1,15.2M40.6,18.8L51.8,98.8M52.1,100.8L64.9,191.6M65.3,194.7L71.9,241.6M76.7,275.6L87.8,354.9M88.1,356.9L97.3,422.6M97.8,426.3L111.1,520.3M111.4,522.9L125.2,620.6M14.8,-81.2L25.0,-8.2M36.8,75.5L49.5,166.1M50.0,169.2L62.2,256.6M63.1,262.8L68.8,303.6M69.0,305.0L78.3,370.6M78.5,372.2L84.2,412.9M93.4,478.7L105.9,567.5M106.4,570.5L110.6,600.7M3.7,-79.7L7.4,-53.5M16.0,8.2L22.3,52.9M22.5,54.1L35.7,148.4M47.6,233.1L54.5,281.8M54.6,282.4L67.3,372.7M68.1,378.8L77.0,442.2M77.5,445.3L83.4,487.7M83.6,488.9L93.3,557.9M93.6,560.4L101.5,616.6M-8.9,-77.9L-2.7,-33.8M-2.0,-28.5L3.0,7.2M3.3,9.4L14.2,87.1M14.7,90.1L27.2,179.2M27.5,181.5L34.6,231.9M34.6,232.2L38.4,258.8M62.0,426.7L72.7,502.7M73.7,510.3L86.3,599.5M-19.4,-76.4L-11.4,-19.9M-11.3,-19.4L-3.9,33.8M-3.3,37.7L3.1,83.3M3.5,86.5L12.0,146.5M12.7,151.8L18.7,194.4M19.1,197.1L27.0,253.2M27.6,257.8L38.4,334.6M39.2,340.2L42.9,366.7M43.3,369.5L47.5,399.0M47.5,399.4L56.2,461.0M56.7,464.7L63.6,513.6M71.3,568.8L77.5,613.0M-10.5,72.2L-0.4,143.6M0.0,146.8L7.8,202.4M8.8,209.0L21.4,299.1M22.4,306.3L26.3,333.9M26.9,337.9L33.6,385.6M34.7,393.3L39.7,429.2M40.0,431.0L50.5,506.3M50.5,506.3L59.7,571.5M60.0,573.4L68.6,634.8M-33.0,1.0L-26.1,50.6M-25.1,57.6L-18.4,105.6M-6.0,193.4L-0.9,230.0M-0.3,233.9L9.0,300.5M9.4,302.8L20.7,383.2M20.9,385.0L27.0,428.3M27.2,429.7L36.0,492.6M36.1,493.1L40.3,523.0M41.1,528.6L45.7,561.7M46.6,567.8L55.1,628.3M-56.7,-71.2L-52.6,-42.5M-52.1,-38.4L-40.3,45.5M-39.5,51.1L-33.4,94.6M-33.0,97.2L-26.0,146.7M-25.1,153.4L-13.0,239.7M-12.5,243.0L-1.6,320.3M-0.7,326.9L11.1,411.1M11.5,414.1L22.0,488.6M22.2,490.1L25.8,515.8M26.9,523.3L40.5,620.1M-68.3,-69.6L-58.2,2.1M-57.1,9.5L-43.3,107.7M-42.6,113.3L-37.8,146.9M-26.3,229.2L-19.3,278.4M-18.7,282.7L-10.2,343.4M2.3,432.3L9.8,486.1M10.7,492.2L24.4,589.8M-80.3,-67.9L-68.5,16.3M-63.4,52.4L-54.8,113.4M-54.5,116.0L-50.8,142.2M-50.6,143.3L-40.6,214.5M-40.4,216.3L-31.9,276.9M-31.6,278.9L-27.5,307.5M-26.6,314.6L-19.8,362.3M-10.9,426.0L1.6,515.2M2.1,518.5L14.0,603.2M-92.4,-66.2L-82.0,7.4M-58.4,175.4L-53.1,213.2M-52.9,214.5L-48.2,248.1M-47.8,250.9L-36.5,331.7M-35.9,335.7L-32.3,361.3M-31.2,368.9L-27.6,394.4M-26.7,400.9L-15.0,484.5M-1.8,578.1L11.9,676.1M-103.9,-64.5L-93.1,12.6M-92.0,19.8L-88.3,46.3M-88.1,48.1L-80.5,101.7M-79.8,106.9L-67.9,191.9M-67.2,196.9L-60.0,248.0M-59.0,255.2L-52.1,303.8M-51.8,306.4L-40.5,386.3M-39.7,392.2L-30.5,457.5M-30.3,458.9L-25.8,491.5M-25.4,494.3L-17.4,551.0M-16.8,555.0L-9.1,609.7M-111.4,-20.2L-100.1,60.6M-90.8,126.9L-83.0,182.0M-82.8,183.4L-76.5,228.4M-75.4,235.9L-68.6,284.6M-68.2,287.4L-54.4,385.7M-53.7,390.7L-46.3,443.6M-35.2,522.6L-25.1,594.0M-127.9,-61.2L-115.7,25.8M-115.2,29.4L-104.8,103.6M-104.3,106.6L-98.4,148.4M-97.8,153.0L-89.0,216.0M-88.3,221.0L-80.1,278.9M-79.4,283.6L-66.2,377.6M-65.7,381.3L-51.9,479.8M-39.9,564.9L-27.4,654.1M-110.1,151.8L-97.5,241.1M-97.2,243.1L-85.3,327.8M-84.7,332.1L-72.2,421.1M-71.9,423.3L-61.7,495.9M-61.1,500.3L-49.4,583.5M-151.8,-57.8L-138.9,34.2M-138.7,35.4L-131.4,87.3M-123.4,144.7L-118.7,178.2M-118.2,181.2L-105.9,269.1M-89.6,385.2L-84.0,424.6M-83.5,428.0L-79.9,453.9M-79.5,456.4L-69.5,527.9M-68.8,532.7L-58.1,609.1M-164.4,-56.0L-156.0,3.4M-155.9,4.3L-142.6,98.9M-135.9,146.6L-124.8,226.0M-124.4,228.5L-116.7,283.5M-107.6,348.1L-99.3,406.8M-98.3,414.2L-91.2,464.7M-90.9,466.6L-81.4,534.3M-165.7,-55.9L-96.3,-65.6M-95.8,-65.7L-39.9,-73.5M-36.4,-74.0L59.2,-87.5M64.7,-88.2L139.4,-98.7M179.2,-104.3L235.2,-112.2M241.7,-113.1L329.6,-125.5M366.8,-130.7L418.6,-138.0M424.3,-138.8L498.7,-149.2M-163.7,-41.3L-137.2,-45.0M-133.5,-45.5L-81.8,-52.8M-79.3,-53.1L-4.8,-63.6M103.3,-78.8L189.6,-90.9M195.2,-91.7L294.0,-105.6M297.7,-106.1L352.3,-113.8M354.0,-114.0L452.3,-127.8M455.2,-128.2L490.6,-133.2M-162.1,-30.0L-124.9,-35.2M-120.0,-35.9L-40.1,-47.1M-33.7,-48.0L45.3,-59.1M46.3,-59.3L105.9,-67.6M207.8,-82.0L258.6,-89.1M262.8,-89.7L295.8,-94.3M298.2,-94.7L360.7,-103.5M365.2,-104.1L399.6,-108.9M403.6,-109.5L450.2,-116.0M452.2,-116.3L507.7,-124.1M-160.3,-17.3L-94.1,-26.6M-53.6,-32.3L43.2,-45.9M124.3,-57.3L179.7,-65.1M181.0,-65.3L266.5,-77.3M272.2,-78.1L308.5,-83.2M308.8,-83.2L341.7,-87.9M422.2,-99.2L477.9,-107.0M-77.7,-15.8L-10.7,-25.2M-3.6,-26.2L50.5,-33.8M56.3,-34.7L100.3,-40.8M103.7,-41.3L163.9,-49.8M167.3,-50.3L225.5,-58.4M232.1,-59.4L261.5,-63.5M265.8,-64.1L320.3,-71.8M321.0,-71.9L373.4,-79.2M377.3,-79.8L419.1,-85.6M423.0,-86.2L448.4,-89.8M456.1,-90.8L481.3,-94.4M488.9,-95.5L540.9,-102.8M-156.8,7.6L-86.8,-2.2M-84.3,-2.6L-22.6,-11.2M-16.6,-12.1L12.1,-16.1M14.1,-16.4L58.9,-22.7M62.3,-23.2L150.9,-35.6M153.2,-35.9L228.4,-46.5M236.2,-47.6L322.7,-59.8M325.3,-60.1L410.9,-72.1M415.9,-72.9L444.9,-76.9M445.3,-77.0L516.5,-87.0M-122.5,16.5L-54.7,7.0M-48.9,6.1L7.0,-1.7M14.8,-2.8L107.6,-15.8M113.8,-16.7L171.3,-24.8M174.3,-25.2L232.3,-33.4M233.2,-33.5L281.7,-40.3M320.9,-45.8L386.4,-55.0M439.5,-62.5L532.8,-75.6M-153.1,34.1L-66.0,21.8M-59.1,20.8L0.8,12.4M4.2,12.0L57.0,4.5M64.3,3.5L125.8,-5.1M128.8,-5.6L211.4,-17.2M217.3,-18.0L254.4,-23.2M256.0,-23.4L306.5,-30.5M309.3,-30.9L377.9,-40.6M451.3,-50.9L519.4,-60.4M-151.4,46.3L-74.8,35.5M-72.7,35.2L6.3,24.1M40.8,19.3L118.8,8.3M197.2,-2.7L255.8,-11.0M257.6,-11.2L338.3,-22.6M340.8,-22.9L428.5,-35.2M434.0,-36.0L500.9,-45.4M-149.7,57.8L-54.4,44.4M-48.0,43.5L-16.0,39.0M-14.2,38.8L25.3,33.2M30.1,32.5L63.9,27.8M275.1,-1.9L319.5,-8.2M319.7,-8.2L384.3,-17.3M386.7,-17.6L430.2,-23.7M434.0,-24.2L479.0,-30.6M-147.7,72.1L-59.5,59.7M-55.2,59.1L24.1,47.9M29.3,47.2L122.3,34.1M156.1,29.4L239.3,17.7M242.9,17.2L295.1,9.8M302.6,8.8L364.9,0.0M410.6,-6.4L505.2,-19.7M505.7,-19.8L597.5,-32.7M-146.1,83.5L-47.9,69.7M-41.0,68.7L-11.7,64.6M-11.2,64.5L15.8,60.7M105.4,48.1L168.9,39.2M173.1,38.6L211.5,33.2M214.3,32.8L276.2,24.1M281.7,23.3L337.5,15.5M338.1,15.4L399.0,6.8M406.7,5.8L473.2,-3.6M475.6,-3.9L525.3,-10.9M-42.0,83.8L52.2,70.6M56.1,70.0L124.7,60.4M304.8,35.1L331.3,31.4M337.9,30.4L413.8,19.8M499.4,7.7L529.2,3.6M-142.1,112.3L-87.0,104.6M-84.3,104.2L-58.4,100.6M-56.4,100.3L11.9,90.7M14.6,90.3L89.4,79.8M91.3,79.5L181.5,66.9M182.7,66.7L226.3,60.6M232.5,59.7L282.0,52.7M287.2,52.0L331.3,45.8M333.3,45.5L423.2,32.9M425.0,32.6L472.2,26.0M477.9,25.2L552.7,14.7M-140.5,123.6L-59.0,112.1M60.2,95.4L113.7,87.9M120.0,87.0L202.9,75.3M209.1,74.4L262.1,67.0M266.8,66.3L346.6,55.1M353.1,54.2L378.9,50.6M460.2,39.2L554.2,26.0M-59.5,123.9L-24.7,119.0M64.6,106.5L117.0,99.1M119.2,98.8L213.7,85.5M215.1,85.3L265.7,78.2M268.1,77.9L306.5,72.5M310.6,71.9L375.5,62.8M446.1,52.9L487.4,47.1M-137.3,146.6L-88.0,139.7M121.6,110.3L148.1,106.5M151.3,106.1L179.9,102.1M181.3,101.9L260.7,90.7M260.9,90.7L302.0,84.9M305.9,84.4L379.2,74.1M380.6,73.9L406.5,70.2M406.8,70.2L450.9,64.0M453.9,63.6L513.7,55.1M-135.5,159.2L-70.6,150.1M-68.0,149.7L24.6,136.7M186.3,114.0L223.7,108.7M225.6,108.4L293.7,98.9M301.2,97.8L347.1,91.4M352.5,90.6L403.0,83.5M407.0,82.9L500.3,69.8M503.3,69.4L528.1,65.9M-133.6,172.3L-62.0,162.3M-61.2,162.2L0.5,153.5M5.5,152.8L102.4,139.2M105.9,138.7L136.9,134.3M138.8,134.1L225.1,121.9M227.1,121.6L318.9,108.7M392.2,98.5L452.7,89.9M459.4,89.0L521.5,80.3M-37.5,170.8L55.3,157.8M228.9,133.4L291.7,124.6M375.5,112.8L448.1,102.6M493.1,96.3L541.0,89.5M-130.0,198.0L-32.1,184.2M-31.1,184.1L47.6,173.0M54.5,172.1L136.3,160.6M215.3,149.5L276.6,140.8M279.4,140.4L305.9,136.7M312.2,135.8L353.9,130.0M360.1,129.1L436.4,118.4M438.9,118.0L483.9,111.7M-128.0,212.5L-35.5,199.5M48.9,187.7L98.4,180.7M102.5,180.1L163.5,171.5M170.4,170.6L234.9,161.5M240.8,160.7L284.1,154.6M288.7,154.0L331.4,148.0M331.9,147.9L360.6,143.9M364.7,143.3L460.0,129.9M463.2,129.4L518.2,121.7M522.0,121.2L618.0,107.7M-126.1,226.1L-44.7,214.7M125.9,190.7L164.8,185.2M165.2,185.2L201.1,180.1M203.3,179.8L281.5,168.8M284.0,168.5L365.7,157.0M371.3,156.2L430.0,148.0M497.9,138.4L526.8,134.3M-124.2,239.7L-66.9,231.7M-63.5,231.2L3.8,221.7M7.0,221.3L80.0,211.0M84.9,210.4L113.1,206.4M114.1,206.2L142.9,202.2M143.0,202.2L173.2,197.9M216.3,191.9L277.2,183.3M279.7,183.0L377.5,169.2M425.1,162.5L480.3,154.8M487.4,153.8L531.2,147.6M-122.4,252.4L-70.5,245.1M-66.9,244.6L-18.7,237.8M-15.4,237.4L31.9,230.7M159.4,212.8L242.5,201.1M247.9,200.4L327.6,189.2M333.4,188.3L428.7,175.0M434.0,174.2L491.1,166.2M492.8,165.9L574.8,154.4M-120.7,264.7L-43.1,253.8M-39.8,253.3L41.9,241.8M46.8,241.1L87.9,235.3M210.3,218.1L264.2,210.6M269.8,209.8L351.1,198.4M355.7,197.7L399.1,191.6M469.9,181.7L552.6,170.0M-118.6,279.3L-73.5,272.9M-69.3,272.3L-7.8,263.7M-2.8,263.0L88.3,250.2M90.6,249.9L175.2,238.0M176.4,237.8L246.1,228.0M250.3,227.4L348.7,213.6M356.3,212.5L407.2,205.4M407.8,205.3L454.9,198.7M460.3,197.9L546.6,185.8M-116.9,291.6L-52.2,282.5M-49.3,282.1L24.3,271.8M118.3,258.5L156.3,253.2M157.0,253.1L240.7,241.3M242.8,241.1L303.9,232.5M391.4,220.2L468.4,209.4M471.0,209.0L561.0,196.3M18.7,284.9L60.0,279.1M61.2,279.0L157.6,265.4M225.1,255.9L300.1,245.4M302.9,245.0L380.1,234.1M387.1,233.2L476.7,220.6M479.6,220.2L521.3,214.3M521.7,214.3L598.1,203.5M-113.3,316.8L-45.3,307.2M10.8,299.4L99.6,286.9M100.4,286.8L126.7,283.1M128.1,282.9L173.1,276.5M178.6,275.8L227.3,268.9M229.6,268.6L296.1,259.3M298.9,258.9L342.2,252.8M344.2,252.5L370.2,248.8M374.9,248.2L419.6,241.9M426.3,241.0L485.9,232.6M488.4,232.2L579.0,219.5M-111.4,330.3L-35.3,319.6M-32.0,319.1L21.7,311.6M25.4,311.1L89.5,302.1M95.7,301.2L186.8,288.4M187.0,288.4L234.1,281.7M240.4,280.8L311.2,270.9M407.4,257.4L483.5,246.7M487.1,246.2L541.4,238.5M31.5,325.3L94.5,316.4M165.0,306.5L263.6,292.6M264.7,292.5L318.4,284.9M389.3,275.0L470.7,263.5M475.3,262.9L512.9,257.6M520.0,256.6L594.9,246.1M-107.5,358.1L-57.8,351.1M-52.8,350.4L-26.7,346.7M-21.5,346.0L19.2,340.3M79.2,331.9L111.5,327.3M113.6,327.0L198.8,315.0M204.8,314.2L233.8,310.1M240.1,309.2L275.3,304.3M275.6,304.3L312.5,299.1M320.1,298.0L368.7,291.2M375.2,290.3L413.7,284.8M418.6,284.2L512.8,270.9M-105.6,371.8L-67.1,366.4M-59.4,365.3L-16.8,359.3M-9.6,358.3L65.3,347.8M66.7,347.6L109.1,341.6M197.9,329.1L269.3,319.1M275.0,318.3L336.4,309.7M340.3,309.1L393.6,301.7M423.7,297.4L473.0,290.5M477.7,289.8L570.4,276.8M-103.8,384.7L-22.2,373.2M-20.3,372.9L18.6,367.5M19.2,367.4L108.2,354.9M174.1,345.6L254.2,334.4M289.7,329.4L326.5,324.2M326.7,324.2L416.6,311.5M450.3,306.8L543.1,293.8M544.0,293.6L590.1,287.2M-102.2,396.4L-29.8,386.2M-28.5,386.0L36.0,377.0M37.2,376.8L104.2,367.4M107.2,367.0L167.2,358.5M172.1,357.9L211.2,352.4M211.3,352.3L302.0,339.6M371.1,329.9L424.4,322.4M504.9,311.1L550.8,304.6M77.0,385.5L166.1,372.9M443.5,334.0L498.3,326.3M499.3,326.1L582.0,314.5M-98.5,422.4L-49.8,415.5M17.6,406.1L61.8,399.9M107.7,393.4L173.8,384.1M173.8,384.1L198.7,380.6M251.5,373.2L281.1,369.0M283.0,368.8L343.5,360.3M350.3,359.3L444.5,346.1M447.0,345.7L501.3,338.1M507.2,337.3L566.3,329.0M-96.5,436.4L0.0,422.8M4.9,422.1L41.7,416.9M45.0,416.5L83.3,411.1M163.2,399.9L195.3,395.3M198.9,394.8L284.9,382.7M289.2,382.1L377.6,369.7M378.5,369.6L450.9,359.4M452.7,359.2L479.7,355.4M480.2,355.3L544.4,346.3M549.2,345.6L635.2,333.5M62.0,427.9L159.1,414.2M165.3,413.4L237.0,403.3M237.1,403.3L297.2,394.8M302.0,394.1L364.6,385.3M365.1,385.3L399.6,380.4M405.0,379.7L503.3,365.9M505.6,365.5L564.2,357.3M-92.9,462.4L0.2,449.3M3.4,448.8L63.8,440.3M71.7,439.2L99.9,435.3M100.5,435.2L175.6,424.6M176.8,424.5L233.0,416.6M239.1,415.7L296.8,407.6M299.8,407.2L390.5,394.4M390.6,394.4L481.1,381.7M523.0,375.8L552.5,371.7M554.2,371.4L612.1,363.3M-90.8,476.9L-41.2,469.9M-35.0,469.1L-2.1,464.4M69.0,454.5L109.0,448.8M113.8,448.1L173.5,439.8M180.8,438.7L221.0,433.1M319.9,419.2L368.4,412.4M375.6,411.4L459.4,399.6M463.3,399.0L498.5,394.1M506.0,393.0L595.0,380.5M-89.1,489.1L-51.9,483.8M-45.8,483.0L3.9,476.0M9.4,475.2L88.2,464.2M89.2,464.0L121.0,459.5M127.6,458.6L189.2,450.0M192.1,449.6L244.2,442.2M252.0,441.1L321.7,431.3M327.3,430.6L396.4,420.8M480.1,409.1L535.1,401.3M538.1,400.9L593.3,393.2M47.9,482.4L120.4,472.2M122.9,471.8L155.1,467.3M162.4,466.3L209.6,459.6M210.6,459.5L245.9,454.5M252.9,453.6L283.9,449.2M334.3,442.1L394.2,433.7M396.5,433.4L452.8,425.5M458.6,424.7L485.6,420.9M491.9,420.0L540.9,413.1M541.8,412.9L572.3,408.7M-85.9,512.4L-27.4,504.2M-24.9,503.8L2.4,500.0M5.2,499.6L102.2,486.0M109.5,484.9L198.7,472.4M199.7,472.2L284.5,460.3M288.9,459.7L320.9,455.2M462.5,435.3L535.2,425.1M541.4,424.2L615.8,413.8M-84.1,524.9L-21.1,516.1M-15.6,515.3L51.5,505.9M58.0,505.0L89.6,500.5M129.1,495.0L186.5,486.9M191.0,486.3L236.5,479.9M326.7,467.2L392.1,458.0M399.1,457.0L429.0,452.8M435.1,452.0L503.8,442.3M507.0,441.8L570.4,432.9M-82.4,536.9L-7.5,526.3M-6.4,526.2L33.0,520.6M69.2,515.5L122.2,508.1M128.7,507.2L226.1,493.5M319.2,480.4L352.9,475.7M450.1,462.0L484.3,457.2M486.2,456.9L559.2,446.7M565.3,445.8L622.5,437.8M-80.7,549.2L-22.1,541.0M-16.5,540.2L32.5,533.3M33.7,533.2L61.8,529.2M64.6,528.8L91.8,525.0M190.1,511.2L238.4,504.4M240.9,504.0L275.8,499.1M282.5,498.2L335.6,490.7M336.4,490.6L362.3,487.0M364.1,486.7L442.7,475.7M443.3,475.6L482.1,470.1M488.2,469.3L567.7,458.1M571.3,457.6L622.4,450.4M108.1,534.9L206.5,521.1M212.8,520.2L246.6,515.4M250.1,514.9L337.2,502.7M434.3,489.0L462.8,485.0M525.7,476.2L611.3,464.2M-77.1,575.0L-27.0,567.9M-26.5,567.8L2.0,563.8M6.3,563.2L60.8,555.6M63.1,555.3L89.1,551.6M91.8,551.2L153.0,542.6M155.2,542.3L183.8,538.3M186.1,538.0L219.4,533.3M252.3,528.7L310.0,520.6M310.2,520.5L342.5,516.0M346.9,515.4L408.3,506.7M414.2,505.9L476.4,497.2M483.0,496.2L574.1,483.4M-75.3,587.7L-10.9,578.6M79.3,566.0L159.9,554.6M164.6,554.0L256.8,541.0M314.5,532.9L381.1,523.5M387.1,522.7L448.2,514.1M450.6,513.8L541.0,501.1" stroke="#fbfbfb" stroke-width="1.6" fill="none"/><path clip-path="url(#dB)" d="M-33.4,-175.0L-3.2,-167.5M35.2,-157.9L61.9,-151.3M103.7,-140.9L136.9,-132.6M139.1,-132.0L212.2,-113.8M214.8,-113.1L268.9,-99.7M439.3,-57.2L481.3,-46.7M486.3,-45.5L554.7,-28.4M562.4,-26.5L609.4,-14.8M42.0,-145.9L83.5,-135.6M89.6,-134.0L179.2,-111.7M280.1,-86.5L338.8,-71.9M344.7,-70.4L406.1,-55.1M410.1,-54.1L482.6,-36.0M-38.7,-153.6L26.8,-137.3M117.9,-114.5L146.6,-107.4M243.1,-83.3L316.6,-65.0M321.9,-63.7L373.0,-50.9M373.5,-50.8L463.2,-28.4M469.5,-26.9L527.4,-12.4M530.9,-11.6L604.7,6.8M-41.0,-144.5L12.2,-131.2M14.0,-130.8L54.4,-120.7M59.8,-119.4L150.5,-96.8M150.6,-96.7L238.0,-74.9M243.7,-73.5L312.6,-56.3M315.2,-55.7L344.7,-48.3M586.9,12.0L612.2,18.4M-43.9,-132.7L24.9,-115.5M24.9,-115.5L109.6,-94.4M190.7,-74.2L287.1,-50.1M294.0,-48.4L347.2,-35.2M402.6,-21.3L446.8,-10.3M447.6,-10.1L494.1,1.5M495.0,1.7L562.8,18.6M-46.6,-121.9L-5.9,-111.7M-3.5,-111.2L85.9,-88.9M89.7,-87.9L152.1,-72.4M156.2,-71.3L185.2,-64.1M187.4,-63.5L271.0,-42.7M349.8,-23.1L378.1,-16.0M475.3,8.2L511.0,17.1M515.8,18.3L584.1,35.4M591.6,37.2L653.0,52.5M-49.2,-111.6L-19.8,-104.3M-17.8,-103.8L22.3,-93.8M27.0,-92.6L74.6,-80.7M228.5,-42.4L295.1,-25.8M295.8,-25.6L389.1,-2.3M394.7,-0.9L457.3,14.7M498.5,25.0L558.9,40.0M559.1,40.1L634.3,58.8M-52.2,-99.6L21.4,-81.2M27.0,-79.8L102.3,-61.0M108.3,-59.5L174.7,-43.0M178.8,-42.0L223.1,-30.9M230.0,-29.2L279.7,-16.8M282.5,-16.1L320.6,-6.6M411.6,16.1L440.4,23.3M440.8,23.4L509.6,40.5M517.1,42.4L562.9,53.8M564.6,54.2L599.5,62.9M-1.3,-75.8L83.1,-54.8M83.9,-54.6L110.4,-48.0M117.1,-46.3L145.1,-39.3M226.8,-18.9L268.8,-8.5M371.4,17.1L399.4,24.1M406.5,25.9L435.6,33.1M435.9,33.2L524.3,55.2M524.9,55.4L575.1,67.9M578.5,68.7L647.5,86.0M-57.5,-78.4L-29.1,-71.3M22.4,-58.4L75.3,-45.3M75.3,-45.3L139.9,-29.2M145.4,-27.8L238.7,-4.5M240.4,-4.1L279.1,5.6M281.3,6.1L345.8,22.2M351.2,23.5L405.8,37.2M-59.7,-69.3L-26.3,-60.9M-20.0,-59.4L48.3,-42.3M49.2,-42.1L120.2,-24.4M121.3,-24.1L188.7,-7.3M195.0,-5.8L279.4,15.3M281.7,15.9L316.5,24.5M316.7,24.6L404.1,46.4M562.9,86.0L612.3,98.3M-62.4,-58.7L33.7,-34.7M220.8,11.9L289.9,29.2M295.2,30.5L388.8,53.8M389.9,54.1L455.6,70.5M459.1,71.3L489.2,78.8M577.2,100.8L633.6,114.8M-65.1,-47.8L-11.1,-34.3M-7.6,-33.4L21.2,-26.3M21.9,-26.1L77.0,-12.3M156.4,7.4L192.3,16.4M198.8,18.0L265.6,34.7M270.5,35.9L298.3,42.8M391.9,66.2L435.1,76.9M495.0,91.9L534.2,101.6M-67.4,-38.7L-1.2,-22.2M3.6,-21.0L94.2,1.6M96.4,2.2L164.8,19.2M219.0,32.7L308.2,55.0M315.6,56.8L382.2,73.4M387.2,74.7L434.1,86.4M434.4,86.4L503.1,103.6M503.8,103.8L584.6,123.9M77.0,7.9L169.3,30.9M173.8,32.0L221.6,44.0M226.1,45.1L268.3,55.6M275.0,57.3L351.7,76.4M351.9,76.4L402.9,89.1M409.4,90.8L473.5,106.8M478.2,107.9L542.7,124.0M547.0,125.1L611.5,141.2M18.6,4.5L84.7,20.9M88.2,21.8L125.4,31.1M126.1,31.3L166.9,41.5M168.5,41.8L206.8,51.4M210.9,52.4L247.7,61.6M252.3,62.7L322.1,80.1M326.8,81.3L372.6,92.7M377.9,94.1L417.9,104.0M422.4,105.1L517.6,128.9M521.8,129.9L602.0,149.9M-75.1,-7.8L2.6,11.6M101.6,36.3L198.3,60.4M201.3,61.1L231.9,68.8M236.5,69.9L313.0,89.0M319.1,90.5L375.1,104.5M379.8,105.6L450.2,123.2M455.4,124.5L520.4,140.7M525.6,142.0L601.1,160.8M-77.7,2.8L-41.3,11.9M-0.9,22.0L75.2,41.0M79.2,42.0L176.0,66.1M214.4,75.7L271.3,89.9M274.9,90.7L311.0,99.8M314.5,100.6L402.0,122.4M406.2,123.5L464.8,138.1M470.9,139.6L538.8,156.5M546.2,158.4L614.1,175.3M-80.7,14.7L-53.0,21.6M-49.2,22.5L-4.0,33.8M-2.2,34.2L53.9,48.2M58.5,49.4L102.5,60.3M190.1,82.2L285.5,106.0M288.1,106.6L330.9,117.3M334.3,118.1L408.3,136.6M461.9,149.9L515.3,163.3M519.4,164.3L583.5,180.3M-22.2,41.4L4.2,48.0M8.1,49.0L93.7,70.3M95.0,70.6L120.2,76.9M187.6,93.7L274.1,115.3M281.2,117.1L354.4,135.3M357.3,136.0L416.5,150.8M423.6,152.6L483.0,167.4M486.9,168.3L569.7,189.0M-85.9,35.5L-44.0,45.9M-40.1,46.9L34.2,65.4M39.5,66.8L106.4,83.4M166.2,98.3L227.6,113.6M228.2,113.8L299.5,131.6M299.7,131.6L330.1,139.2M331.6,139.6L375.0,150.4M378.5,151.3L413.5,160.0M421.2,161.9L490.7,179.3M-88.3,45.4L-7.3,65.6M-6.3,65.8L54.9,81.1M194.7,115.9L274.9,135.9M278.0,136.7L311.3,145.0M318.4,146.8L392.7,165.3M396.8,166.3L447.0,178.8M453.0,180.3L477.7,186.5M481.7,187.5L516.7,196.2M518.6,196.7L572.2,210.1M-90.9,55.8L-16.9,74.3M-10.8,75.8L53.5,91.8M57.4,92.8L100.0,103.4M107.4,105.3L166.6,120.0M167.8,120.3L237.9,137.8M239.6,138.2L273.1,146.6M280.2,148.3L374.6,171.9M374.7,171.9L452.4,191.3M452.7,191.4L532.8,211.3M534.6,211.8L615.5,231.9M-93.6,66.5L-11.1,87.1M-7.0,88.1L30.7,97.5M32.2,97.9L94.6,113.4M98.2,114.3L168.7,131.9M326.8,171.3L407.2,191.4M411.5,192.4L453.8,203.0M458.9,204.3L501.2,214.8M505.5,215.9L573.9,232.9M-18.7,95.9L28.4,107.6M31.8,108.4L102.0,126.0M108.0,127.4L191.1,148.2M198.7,150.1L255.6,164.2M311.0,178.1L375.8,194.2M378.6,194.9L403.6,201.2M407.3,202.1L500.8,225.4M507.8,227.1L602.8,250.8M-98.4,85.7L-10.0,107.7M-7.7,108.3L84.9,131.4M91.3,133.0L176.2,154.1M180.1,155.1L211.2,162.9M215.1,163.8L298.8,184.7M304.0,186.0L338.5,194.6M338.9,194.7L405.5,211.3M538.4,244.5L584.0,255.8M-101.4,97.8L-27.7,116.2M-20.4,118.0L37.9,132.6M118.1,152.5L160.9,163.2M164.5,164.1L214.4,176.6M215.6,176.9L258.2,187.5M258.4,187.5L320.9,203.1M324.0,203.9L414.0,226.3M466.9,239.5L552.6,260.9M-104.2,109.1L-67.0,118.4M-65.8,118.7L-13.4,131.7M-10.9,132.4L39.7,145.0M42.8,145.7L73.9,153.5M76.6,154.2L152.7,173.1M160.3,175.0L248.6,197.0M349.0,222.1L416.4,238.9M419.3,239.6L467.4,251.6M467.5,251.6L546.6,271.3M-106.9,119.7L-21.3,141.0M-20.2,141.3L52.6,159.5M115.2,175.1L159.2,186.1M166.7,187.9L216.3,200.3M294.1,219.7L342.3,231.7M346.1,232.7L420.7,251.2M421.4,251.4L449.3,258.4M451.7,259.0L489.2,268.3M490.1,268.5L516.2,275.1M522.1,276.5L558.0,285.5M-109.2,129.0L-74.7,137.6M-72.4,138.2L9.0,158.5M13.0,159.5L64.5,172.3M124.3,187.3L180.0,201.1M218.2,210.7L315.2,234.8M320.9,236.3L388.9,253.2M390.2,253.6L461.2,271.2M466.5,272.6L493.8,279.4M494.7,279.6L574.4,299.5M-112.1,140.6L-49.9,156.1M-46.9,156.9L-22.5,162.9M76.3,187.6L169.0,210.7M174.3,212.0L206.2,220.0M210.9,221.1L265.0,234.6M267.6,235.3L339.5,253.2M343.3,254.2L398.7,268.0M399.2,268.1L441.1,278.5M506.0,294.7L583.7,314.1M-114.6,150.9L-61.6,164.2M-61.4,164.2L-3.0,178.8M82.8,200.2L157.4,218.8M162.5,220.0L254.4,242.9M258.2,243.9L319.7,259.2M321.1,259.6L359.7,269.2M363.7,270.2L390.8,276.9M397.2,278.5L468.8,296.4M476.2,298.2L513.7,307.6M517.3,308.5L553.6,317.5M-117.0,160.5L-89.8,167.3M23.8,195.6L81.9,210.1M87.7,211.6L134.3,223.2M140.0,224.6L218.7,244.2M219.6,244.5L298.0,264.0M304.2,265.6L373.7,282.9M374.3,283.0L425.1,295.7M426.0,295.9L453.1,302.7M459.7,304.3L529.8,321.8M-120.0,172.3L-34.4,193.6M-32.8,194.0L46.1,213.7M95.3,226.0L131.2,234.9M137.2,236.4L180.9,247.3M286.8,273.7L317.3,281.3M322.3,282.6L407.1,303.7M411.0,304.7L506.3,328.4M509.8,329.3L580.4,346.9M-72.1,197.0L-22.7,209.4M55.7,228.9L132.6,248.1M133.9,248.4L206.7,266.6M208.4,267.0L252.6,278.0M258.3,279.4L322.8,295.5M323.2,295.6L404.8,316.0M411.3,317.6L492.7,337.9M494.9,338.4L552.8,352.9M-125.4,194.1L-100.1,200.4M-99.7,200.5L-73.4,207.1M-68.7,208.2L-4.9,224.1M-0.6,225.2L61.7,240.8M63.4,241.2L99.0,250.1M101.9,250.8L168.8,267.4M170.9,268.0L239.3,285.0M245.1,286.5L284.2,296.2M290.0,297.7L372.4,318.2M379.5,320.0L475.5,343.9M478.3,344.6L521.9,355.5M-127.8,203.7L-96.7,211.5M1.8,236.0L50.8,248.3M113.7,263.9L194.3,284.0M201.8,285.9L231.9,293.4M265.6,301.8L339.2,320.2M339.8,320.3L370.4,327.9M377.7,329.8L468.6,352.4M469.3,352.6L550.1,372.8M-130.6,214.8L-65.1,231.2M-64.0,231.4L-33.8,239.0M-31.6,239.5L62.1,262.9M68.0,264.4L101.0,272.6M108.2,274.4L148.4,284.4M153.0,285.5L206.3,298.8M207.4,299.1L282.2,317.8M286.9,318.9L370.8,339.8M428.8,354.3L467.4,363.9M467.5,364.0L529.2,379.3M-133.2,225.5L-69.8,241.3M-65.3,242.5L-18.4,254.2M-18.0,254.3L67.5,275.6M68.9,275.9L114.3,287.3M115.0,287.4L205.7,310.0M208.9,310.8L238.4,318.2M245.9,320.1L283.7,329.5M288.0,330.6L358.8,348.2M360.5,348.6L428.7,365.7M-136.2,237.4L-96.5,247.3M-91.8,248.4L-22.7,265.6M-18.4,266.7L22.8,277.0M23.5,277.2L51.9,284.3M141.8,306.7L236.3,330.2M236.4,330.2L288.5,343.2M290.9,343.8L320.1,351.1M320.2,351.1L377.1,365.3M474.3,389.6L556.9,410.2M-139.1,248.9L-89.2,261.3M-86.5,262.0L-49.6,271.2M-48.7,271.4L27.8,290.5M31.7,291.5L114.8,312.2M121.8,314.0L198.9,333.2M283.8,354.3L356.1,372.4M360.3,373.4L453.0,396.5M454.5,396.9L515.2,412.0M-141.8,260.0L-117.4,266.1M-112.6,267.3L-59.5,280.5M-55.9,281.5L-23.5,289.5M-16.0,291.4L15.0,299.1M19.7,300.3L88.6,317.5M192.1,343.3L275.6,364.1M281.8,365.7L378.7,389.8M428.7,402.3L469.4,412.4M476.3,414.1L553.1,433.3M-111.7,280.3L-42.7,297.5M12.3,311.2L107.6,335.0M196.1,357.1L240.8,368.2M242.1,368.5L285.2,379.3M287.7,379.9L322.8,388.7M328.1,390.0L411.7,410.8M415.7,411.8L511.3,435.6M-115.8,291.7L-37.9,311.1M-34.1,312.1L58.6,335.2M131.2,353.3L169.2,362.7M175.3,364.3L240.6,380.6M241.0,380.7L279.8,390.3M285.4,391.7L316.3,399.4M318.8,400.0L373.2,413.6M374.5,413.9L404.2,421.3M482.9,441.0L552.0,458.2M-74.1,313.7L-39.9,322.3M-39.2,322.4L25.8,338.7M31.2,340.0L81.4,352.5M88.3,354.2L121.7,362.6M125.7,363.6L154.2,370.7M159.7,372.1L192.5,380.2M193.5,380.5L256.4,396.2M258.6,396.7L315.6,410.9M320.7,412.2L412.4,435.0M415.1,435.7L454.6,445.6M457.4,446.3L497.1,456.2M-93.6,321.4L-27.0,338.0M-23.9,338.8L53.1,358.0M56.6,358.8L99.3,369.5M101.9,370.1L140.6,379.8M140.9,379.8L182.5,390.2M183.9,390.6L268.9,411.7M275.8,413.5L309.7,421.9M379.9,439.4L466.7,461.1M466.9,461.1L515.7,473.3M-120.8,325.4L-73.3,337.3M-66.7,338.9L-34.3,347.0M15.1,359.3L93.0,378.7M100.6,380.6L195.1,404.2M196.8,404.6L224.6,411.5M368.4,447.4L395.5,454.1M402.9,456.0L485.1,476.5M-158.2,325.8L-65.8,348.8M-59.8,350.3L3.7,366.2M101.9,390.7L188.2,412.2M191.0,412.9L238.6,424.7M272.4,433.2L331.6,447.9M333.6,448.4L414.1,468.5M414.8,468.7L470.2,482.5M471.2,482.7L522.8,495.6M-160.8,336.2L-64.4,360.2M60.5,391.4L110.7,403.9M116.3,405.3L181.8,421.6M184.2,422.2L267.8,443.1M275.2,444.9L304.4,452.2M309.9,453.5L350.0,463.5M356.9,465.3L438.0,485.5M-163.7,347.6L-87.9,366.4M-8.8,386.2L45.1,399.6M227.2,445.0L305.1,464.4M308.3,465.2L368.2,480.2M375.1,481.9L426.5,494.7M427.2,494.9L490.5,510.7M-166.4,358.7L-110.9,372.5M-110.5,372.6L-36.2,391.1M-32.3,392.1L28.8,407.3M35.8,409.1L64.1,416.1M70.3,417.7L117.5,429.4M120.8,430.3L166.6,441.7M167.4,441.9L232.0,458.0M234.7,458.7L312.1,478.0M316.9,479.2L348.6,487.1M352.9,488.2L421.7,505.3M-168.9,368.4L-99.4,385.7M-98.6,385.9L-69.0,393.3M-62.1,395.0L18.3,415.1M25.1,416.8L111.1,438.2M214.1,463.9L284.2,481.4M284.9,481.5L333.2,493.6M338.1,494.8L410.0,512.7M417.1,514.5L441.4,520.6M-171.8,380.0L-134.2,389.4M-128.0,391.0L-82.4,402.3M-77.7,403.5L-5.8,421.4M-3.0,422.1L92.9,446.0M95.1,446.6L192.1,470.7M197.5,472.1L256.9,486.9M260.0,487.7L304.2,498.7M306.0,499.2L380.8,517.8M448.9,534.8L521.8,553.0M-174.4,390.7L-148.9,397.1M-148.6,397.2L-116.0,405.3M-113.3,406.0L-54.5,420.7M-13.1,431.0L77.6,453.6M79.2,454.0L167.4,476.0M247.3,495.9L333.0,517.3M438.6,543.6L518.3,563.5M-106.6,418.7L-80.5,425.2M-73.8,426.9L2.1,445.8M9.3,447.6L88.6,467.4M94.1,468.8L181.6,490.6M244.7,506.3L292.2,518.2M293.9,518.6L366.0,536.6M371.1,537.8L461.6,560.4M-179.6,411.5L-97.7,432.0M-90.0,433.9L-2.2,455.8M3.5,457.2L87.3,478.1M180.2,501.2L206.6,507.8M256.9,520.4L293.1,529.4M298.2,530.7L367.8,548.0M422.1,561.6L455.2,569.8M459.5,570.9L550.3,593.5M-182.1,421.3L-96.2,442.8M17.2,471.0L84.5,487.8M85.0,487.9L170.3,509.2M176.5,510.7L203.4,517.4M205.2,517.9L288.8,538.7M289.0,538.8L340.7,551.7M347.3,553.3L434.1,575.0M439.8,576.4L490.1,588.9M-184.4,430.6L-125.9,445.2M-122.4,446.1L-57.7,462.2M12.8,479.8L51.1,489.4M53.2,489.9L146.7,513.2M153.5,514.9L248.0,538.4M250.8,539.2L329.3,558.7M336.7,560.6L397.5,575.7M402.8,577.0L472.9,594.5M-187.0,441.1L-113.2,459.5M-111.6,459.9L-60.4,472.6M-53.0,474.5L7.0,489.4M99.6,512.5L133.0,520.9M133.7,521.0L187.1,534.3M190.8,535.3L286.2,559.1M287.5,559.4L324.8,568.7M328.8,569.7L382.9,583.2M386.0,584.0L459.6,602.3M-189.6,451.7L-147.2,462.3M-58.2,484.5L11.0,501.8M11.9,502.0L89.3,521.3M92.3,522.0L159.0,538.7M229.9,556.3L287.9,570.8M292.4,571.9L363.8,589.7M371.1,591.6L427.5,605.6M433.3,607.1L497.9,623.2M-192.1,461.5L-162.4,468.9M-64.1,493.4L-2.7,508.8M59.4,524.2L155.1,548.1M159.3,549.2L226.6,565.9M233.6,567.7L318.5,588.8M325.5,590.6L399.0,608.9M404.8,610.4L459.7,624.1M566.1,41.1L558.6,94.6M557.8,99.9L553.4,131.7M553.0,133.9L542.8,206.8M542.5,209.2L536.4,252.7M535.7,257.1L523.2,346.0M522.5,351.1L511.1,432.4M510.6,435.8L500.3,509.0M566.4,-57.7L560.5,-16.4M559.8,-11.5L552.7,39.0M552.1,43.9L543.0,108.5M542.4,112.5L532.5,183.1M520.3,269.7L510.2,342.0M510.1,342.6L501.9,401.0M501.6,402.8L488.1,498.9M479.0,563.5L472.9,607.0M549.7,-21.3L540.2,46.4M539.1,53.8L534.5,86.5M534.5,87.0L525.4,151.2M509.9,261.5L506.1,289.1M505.6,292.0L496.7,356.0M496.3,358.4L487.9,418.4M487.7,419.8L478.8,483.0M478.2,487.6L467.0,567.3M466.7,569.0L453.4,663.8M543.4,-61.0L535.7,-5.6M534.7,1.3L528.1,48.5M527.4,53.3L522.5,87.8M522.4,88.8L513.2,153.9M512.3,160.6L499.0,255.2M498.5,258.8L488.1,333.0M478.3,402.5L470.8,456.2M460.3,530.3L452.5,585.8M530.2,-62.8L524.2,-20.6M524.2,-20.3L515.5,41.6M514.9,45.6L507.4,98.8M507.0,102.2L495.6,183.3M495.3,185.5L489.7,225.0M489.3,227.6L481.4,283.9M480.6,290.0L466.8,387.7M466.5,390.0L457.6,453.3M456.9,458.3L453.0,485.9M444.6,546.2L440.9,572.2M440.6,574.1L429.5,653.7M516.9,-64.7L511.7,-27.8M511.1,-23.3L502.1,41.0M501.7,43.5L488.8,135.2M488.0,140.7L478.6,208.1M477.9,212.5L464.6,307.3M464.3,309.9L457.6,357.6M456.7,363.7L446.5,436.6M445.7,442.2L433.0,532.2M505.0,-66.4L497.3,-11.4M496.3,-4.2L486.5,65.0M486.0,68.7L473.3,159.0M472.8,163.1L466.1,210.2M465.0,218.0L454.9,290.3M454.3,294.4L446.4,350.9M446.1,353.1L433.1,445.1M425.4,500.0L416.2,565.3M415.2,572.7L405.8,639.3M493.3,-68.0L487.0,-23.2M486.7,-21.1L482.4,9.4M482.4,9.6L472.0,83.7M470.9,90.8L464.2,139.1M463.5,143.5L457.0,189.9M456.7,192.3L443.6,285.5M443.5,285.9L430.8,376.2M430.5,378.3L420.4,450.8M419.8,454.8L413.4,500.0M412.7,505.2L400.4,592.8M481.2,-69.7L468.5,20.0M467.6,26.8L454.5,120.2M454.0,123.5L440.4,220.2M439.8,224.4L428.2,306.9M427.6,311.0L417.3,384.6M416.9,387.6L413.3,413.0M400.4,505.0L395.8,537.7M470.5,-71.2L464.9,-30.9M464.1,-25.7L460.3,1.3M460.1,2.8L447.7,91.3M447.7,91.4L440.1,145.5M439.1,152.7L426.3,243.3M426.3,243.4L413.0,337.8M412.3,342.9L400.9,424.4M400.7,425.3L394.7,468.3M386.7,525.2L381.6,561.3M381.2,564.1L369.5,647.5M457.5,-73.0L452.1,-35.1M446.5,5.1L436.6,75.3M435.6,82.8L421.9,180.4M421.7,181.4L411.3,255.4M410.8,259.1L405.0,300.1M404.1,306.8L394.3,376.4M393.5,382.3L385.8,436.8M385.5,439.2L375.2,512.6M374.3,518.9L367.8,565.3M367.7,565.9L363.8,593.6M438.4,-21.4L424.6,76.5M423.7,83.1L416.5,134.5M415.8,139.3L408.6,190.5M408.5,191.5L397.9,266.7M396.8,274.6L390.7,318.1M390.3,320.8L381.4,383.9M381.0,387.2L367.9,479.8M367.5,483.2L354.5,575.4M433.9,-76.4L426.7,-25.6M418.5,33.3L406.1,121.2M405.3,126.8L396.9,186.7M385.9,264.8L374.7,344.6M374.1,348.6L362.6,430.5M362.5,431.5L353.6,495.1M345.1,555.5L332.6,644.4M421.3,-78.1L411.8,-10.8M402.7,54.3L391.7,132.4M390.9,137.9L377.9,230.5M377.7,231.6L365.4,319.1M356.5,382.8L350.7,424.3M350.1,428.0L340.9,493.8M340.2,498.4L336.1,527.7M335.2,534.3L328.7,580.5M407.8,-80.0L395.3,9.3M367.5,206.8L356.3,286.5M356.3,286.8L345.9,360.4M344.9,367.5L339.6,405.6M339.1,409.1L335.1,437.4M334.8,439.8L323.2,522.1M322.2,529.5L316.9,566.6M316.5,569.6L309.7,618.1M397.7,-81.4L388.6,-16.8M388.3,-14.3L381.7,32.1M380.7,39.6L369.5,119.0M368.4,126.9L362.3,170.4M361.6,175.5L350.1,257.4M349.5,261.4L338.5,339.9M325.6,431.4L312.6,524.4M385.8,-83.1L376.4,-16.7M375.5,-10.1L363.2,77.7M362.4,83.2L353.4,147.1M339.5,246.0L330.1,313.2M329.7,315.7L322.8,364.9M322.4,367.9L315.1,419.9M309.5,459.4L303.6,501.4M303.2,504.3L294.7,565.1M361.4,-7.1L352.3,57.5M351.5,63.0L344.2,115.0M343.7,118.6L331.7,204.0M331.7,204.4L319.6,290.5M319.0,294.6L313.7,332.5M313.4,334.4L303.5,404.8M302.5,411.8L293.8,474.1M293.7,474.4L289.3,505.5M289.1,506.9L282.6,553.7M281.6,560.4L274.4,611.9M361.6,-86.5L352.9,-24.5M352.3,-20.7L339.2,73.0M338.8,75.4L328.7,147.2M328.2,151.1L318.1,223.2M302.5,333.9L291.9,409.4M285.7,453.8L282.0,480.1M275.3,527.7L263.2,613.8M350.1,-88.1L340.8,-21.6M340.0,-15.9L334.3,24.2M334.2,25.5L328.1,68.5M328.0,69.7L320.2,125.2M319.5,129.8L314.2,167.6M313.1,175.3L305.0,233.2M304.9,233.4L298.7,277.7M298.0,282.6L292.9,318.8M292.8,320.0L281.6,399.7M281.2,402.0L274.5,450.1M273.9,454.5L264.4,521.5M264.3,522.8L254.3,594.1M339.4,-89.6L334.9,-57.6M333.9,-50.8L324.9,13.8M324.5,16.6L314.4,88.3M313.5,94.9L309.9,120.0M303.2,167.6L298.4,202.1M287.1,282.8L283.3,309.3M282.4,315.9L270.1,403.5M269.1,410.9L257.1,496.0M256.1,503.0L252.5,528.8M252.3,530.5L246.6,570.8M325.9,-91.5L320.2,-51.2M319.8,-48.4L306.7,44.5M306.2,48.4L294.8,129.7M294.3,133.3L289.0,170.9M279.4,238.7L268.2,318.6M267.8,321.4L257.8,393.0M256.7,400.9L242.8,499.2M242.0,504.9L235.7,549.8M234.8,556.6L226.5,615.5M314.9,-93.1L310.9,-64.9M299.9,13.4L294.7,50.6M294.5,51.9L288.3,95.9M287.5,101.3L283.0,133.9M282.4,137.7L273.5,201.1M262.4,280.6L252.3,352.0M251.7,356.1L245.4,401.0M245.3,401.6L234.7,477.7M227.8,526.1L217.1,602.7M302.2,-94.9L293.4,-32.3M292.9,-28.8L289.2,-2.2M288.3,3.9L283.7,37.0M283.3,39.7L269.7,136.3M269.3,139.6L260.2,203.9M259.6,208.4L255.4,238.3M255.0,240.9L241.1,339.7M240.8,342.0L233.9,391.3M233.7,392.5L226.9,440.8M226.5,443.6L220.7,485.4M219.8,491.6L213.2,538.5M212.3,545.2L198.7,642.0M289.1,-96.7L277.7,-15.3M277.4,-13.0L265.2,73.8M265.0,75.2L251.2,173.1M239.5,256.4L235.8,282.7M225.0,359.4L214.6,433.8M214.5,434.0L201.6,525.9M201.2,528.8L189.5,612.4M278.8,-98.1L268.8,-27.2M267.9,-20.6L256.4,61.6M241.2,169.7L233.9,221.2M232.8,229.1L228.7,258.6M228.0,263.3L214.2,361.8M214.0,363.4L210.3,389.6M209.9,392.5L202.7,443.1M187.6,550.6L176.9,627.2M266.9,-99.8L260.2,-51.6M259.9,-49.9L248.1,34.5M247.4,39.4L243.1,69.9M242.2,76.2L228.7,172.2M216.4,259.6L210.8,299.6M210.0,305.1L202.8,356.4M202.6,357.7L192.5,429.9M182.2,503.5L170.5,586.4M249.0,-63.6L243.2,-22.6M242.5,-17.4L228.8,79.9M228.4,82.9L215.8,172.8M214.8,180.1L207.5,231.8M206.6,238.4L195.2,319.3M194.5,324.5L180.7,422.7M180.0,427.1L169.7,500.6M169.3,503.7L161.8,556.7M243.1,-103.2L231.4,-20.0M224.5,29.2L217.3,80.4M210.5,128.7L206.8,155.2M206.1,159.6L197.9,218.1M197.0,224.8L184.8,311.8M183.7,319.4L175.4,378.3M175.2,379.5L169.3,422.0M169.0,424.2L159.8,489.4M159.5,491.5L154.9,524.5M153.9,531.7L145.8,589.0M229.5,-105.1L225.9,-79.4M225.8,-79.0L219.3,-32.9M218.8,-29.3L208.0,47.8M207.2,53.4L203.0,83.1M202.7,85.3L194.2,145.8M194.1,146.6L189.3,180.9M178.3,258.9L172.8,298.3M165.5,350.1L158.8,397.6M158.6,399.5L145.4,492.8M144.6,498.6L136.0,559.7M217.6,-106.8L210.9,-59.1M210.8,-58.9L203.3,-5.4M192.8,69.5L180.0,160.6M179.6,162.9L167.3,250.6M161.9,288.9L148.8,382.4M147.9,389.1L137.1,465.6M136.6,469.1L124.7,553.7M204.2,-108.6L196.8,-56.6M183.0,41.7L175.7,93.7M175.0,99.0L164.5,173.2M164.0,177.3L153.5,251.9M152.9,255.7L142.2,332.0M124.2,460.0L118.8,498.7M118.2,503.0L105.4,594.1M191.1,-110.5L187.1,-82.4M186.0,-74.5L177.3,-12.6M176.4,-5.8L169.7,41.5M168.8,48.4L155.6,142.3M150.5,178.0L136.9,275.4M136.5,278.2L131.1,316.3M130.1,323.2L121.1,387.6M120.8,389.3L115.8,425.0M106.8,489.4L100.9,531.1M99.9,538.5L93.9,580.8M180.8,-111.9L176.3,-80.3M169.6,-32.4L160.2,34.2M146.2,134.2L135.0,213.9M134.8,214.9L128.7,258.6M121.7,308.2L113.0,370.2M112.2,376.1L102.5,444.7M102.0,448.4L96.4,488.2M95.3,495.9L89.8,535.3M89.2,539.9L78.8,613.6M168.9,-113.6L155.7,-19.8M145.0,56.5L134.7,129.5M134.5,131.3L124.2,204.3M123.6,208.4L109.9,306.1M109.2,311.4L99.8,378.1M98.7,385.9L91.2,438.9M90.8,442.3L83.0,497.8M77.7,535.5L71.2,581.5M157.4,-115.2L145.5,-30.3M144.5,-23.0L133.0,58.6M121.1,143.4L117.1,171.4M105.9,251.0L95.5,325.1M94.7,330.9L85.5,396.2M85.4,397.5L77.0,457.2M67.4,524.9L56.3,604.2M143.9,-117.1L133.7,-45.0M133.2,-41.3L125.1,16.2M124.8,18.9L112.9,102.9M112.5,106.4L103.6,169.4M102.7,176.0L90.7,261.3M90.4,263.2L86.9,288.0M86.8,288.7L78.1,351.1M77.5,354.9L66.2,435.8M65.2,442.7L58.0,494.1M57.7,496.2L52.8,530.7M52.7,531.7L47.7,567.4M130.3,-119.0L124.5,-78.1M123.4,-70.5L113.9,-2.6M112.8,5.3L102.4,79.1M101.3,86.9L88.5,177.9M87.5,185.6L77.2,258.5M76.7,262.2L70.1,309.4M64.9,346.3L59.6,384.0M59.4,385.0L49.6,454.7M49.5,455.7L36.1,551.4M105.9,-42.1L100.6,-4.7M76.9,164.5L68.8,222.0M67.7,229.8L62.9,263.7M62.0,270.4L58.2,297.2M57.6,301.3L51.7,343.7M51.6,343.9L41.2,418.3M40.9,420.6L36.3,452.9M36.1,454.6L26.8,520.6M105.8,-122.5L93.3,-33.2M92.7,-29.3L84.2,31.5M84.0,32.8L75.3,94.6M75.3,94.7L68.8,140.7M68.5,142.7L57.6,220.3M57.0,225.1L47.3,293.7M46.3,301.0L36.9,367.5M31.5,406.5L27.6,434.2M27.0,438.2L13.6,533.3M92.5,-124.3L79.3,-30.6M78.8,-27.1L70.9,29.7M69.9,36.8L61.6,95.5M61.0,100.0L51.7,165.7M45.3,211.9L39.5,252.9M38.6,259.4L28.1,334.0M28.0,334.8L17.5,409.6M16.8,414.6L5.8,492.5M66.4,-21.7L54.1,65.7M53.1,72.6L41.1,158.5M27.1,258.0L22.6,289.7M21.7,296.0L16.5,333.7M15.6,339.9L3.4,426.3M-8.5,511.0L-15.6,561.5M68.8,-127.7L57.8,-49.4M56.9,-43.5L47.2,26.1M46.6,30.3L38.8,85.6M26.7,171.5L16.5,244.3M6.7,314.1L2.3,345.6M2.2,346.0L-8.3,420.9M-9.0,425.8L-15.9,474.7M-16.0,475.5L-21.6,515.6M-21.9,517.4L-26.6,550.6M55.3,-129.6L42.6,-39.3M42.6,-39.3L37.5,-2.9M36.9,1.3L24.7,88.2M24.0,93.2L19.8,123.3M19.7,124.0L11.1,184.9M10.0,192.7L-1.8,276.6M-2.1,279.0L-12.2,351.2M-12.8,355.1L-22.5,424.1M-22.9,427.1L-34.3,508.5M43.4,-131.2L34.8,-69.6M33.8,-62.4L28.2,-23.0M27.3,-16.1L13.6,81.2M12.9,85.9L5.4,139.3M-6.4,223.4L-15.0,284.8M-26.1,363.5L-29.9,390.4M-30.0,391.3L-38.7,453.0M-38.8,453.6L-48.3,521.3M31.4,-132.9L23.8,-78.7M23.5,-76.7L10.2,18.0M-3.1,112.8L-10.8,167.3M-23.1,254.9L-36.1,347.4M-36.3,348.5L-44.4,406.5M-58.3,505.6L-72.2,604.0M20.1,-134.5L16.3,-108.0M15.2,-100.1L1.6,-3.3M0.5,4.6L-10.7,84.2M-11.3,89.0L-17.0,129.0M-17.8,134.6L-23.4,174.8M-23.4,174.9L-30.2,223.5M-30.4,224.4L-34.9,256.3M-35.0,257.0L-48.2,351.3M-53.0,385.2L-57.2,415.6M-58.3,422.8L-71.3,515.8M9.7,-136.0L-3.2,-44.1M-3.5,-42.2L-15.7,44.9M-16.3,48.8L-22.7,94.8M-23.0,96.8L-32.2,161.9M-32.2,162.0L-36.8,195.2M-37.3,198.8L-46.2,261.6M-46.4,263.6L-51.9,302.3M-52.7,308.3L-63.9,387.4M-71.4,441.0L-83.2,525.4M-2.9,-137.7L-12.0,-73.5M-12.3,-71.3L-23.9,11.7M-24.5,15.8L-29.5,51.2M-30.5,58.3L-34.3,85.3M-34.9,89.6L-45.2,163.2M-46.0,168.6L-57.0,246.8M-57.1,248.0L-66.3,313.2M-75.6,379.4L-87.0,460.6M-14.1,-139.3L-27.0,-47.3M-28.1,-40.0L-40.4,47.8M-40.9,51.5L-49.9,115.7M-56.1,159.3L-64.1,216.8M-64.5,219.2L-74.3,289.1M-80.8,335.4L-92.5,418.6M-92.7,420.1L-102.1,487.0M-102.9,492.9L-114.6,576.2M-24.5,-140.8L-35.0,-66.5M-45.1,5.7L-58.1,97.9M-58.1,98.0L-62.4,129.0M-62.6,130.5L-75.1,219.1M-75.2,219.8L-87.2,305.2M-87.3,306.2L-90.9,331.2M-91.4,334.9L-100.0,396.5M-115.8,508.6L-127.0,588.4M-50.5,-42.6L-60.6,29.2M-67.8,80.8L-76.1,140.0M-81.7,179.7L-87.7,222.0M-88.1,224.8L-101.5,320.5M-101.9,323.1L-113.1,403.1M-127.6,506.0L-139.2,588.8M-48.6,-144.2L-53.2,-111.5M-53.8,-106.9L-62.4,-46.0M-62.6,-44.6L-70.0,8.1M-85.1,115.6L-93.0,171.7M-93.5,175.3L-97.8,205.9M-117.2,343.7L-120.8,369.2M-121.8,376.8L-128.5,424.6M-128.7,425.8L-141.4,516.0M-60.8,-145.9L-73.7,-54.5M-74.3,-50.1L-82.4,7.8M-83.5,15.5L-93.7,88.3M-93.8,89.0L-104.0,161.2M-104.5,165.0L-110.2,205.4M-110.5,207.2L-116.3,248.6M-116.4,249.5L-122.5,293.0M-122.6,293.8L-134.9,381.4M-135.2,383.1L-146.7,465.2M-147.1,468.1L-150.6,493.0M-151.7,500.4L-160.3,561.9M-84.2,-55.6L-92.3,2.3M-99.9,56.3L-106.1,100.9M-106.8,105.3L-115.9,170.2M-116.7,176.4L-122.9,219.8M-123.6,225.1L-136.4,316.1M-136.8,318.9L-145.2,378.5M-145.7,382.6L-159.0,477.2M-159.9,483.7L-172.7,574.5" stroke="#fbfbfb" stroke-width="1.6" fill="none"/><path clip-path="url(#dB2)" d="M254.1,-166.2L305.7,-123.0M308.8,-120.4L344.8,-90.2M346.8,-88.5L404.4,-40.1M409.3,-36.0L472.9,17.4M474.6,18.7L532.1,67.0M537.6,71.6L582.0,108.9M582.5,109.3L604.4,127.7M628.1,147.6L667.3,180.4M158.9,-231.1L202.3,-194.7M208.2,-189.8L230.7,-170.8M234.3,-167.8L309.1,-105.1M310.7,-103.8L337.8,-81.0M379.2,-46.2L410.1,-20.3M413.2,-17.7L484.6,42.2M537.8,86.8L568.1,112.2M571.0,114.7L617.2,153.4M621.4,157.0L649.1,180.2M654.2,184.5L696.9,220.4M152.0,-222.8L178.0,-200.9M179.9,-199.4L238.6,-150.1M241.9,-147.3L269.6,-124.1M270.0,-123.8L346.4,-59.7M351.5,-55.3L384.8,-27.4M385.7,-26.7L427.1,8.1M430.5,10.9L468.2,42.6M469.9,44.0L533.2,97.1M539.3,102.2L606.6,158.7M606.6,158.7L673.1,214.5M145.2,-214.7L188.0,-178.8M320.7,-67.5L396.6,-3.8M397.4,-3.1L417.2,13.5M419.2,15.2L493.5,77.5M494.6,78.5L536.6,113.6M537.5,114.5L560.0,133.3M589.1,157.7L635.4,196.6M638.8,199.4L705.9,255.7M137.5,-205.6L172.6,-176.2M218.2,-137.9L275.9,-89.5M278.3,-87.5L335.1,-39.8M341.1,-34.8L383.0,0.4M387.8,4.4L424.9,35.6M429.4,39.3L493.1,92.8M495.2,94.5L547.9,138.7M550.8,141.1L602.5,184.5M603.3,185.3L634.7,211.6M130.9,-197.7L194.1,-144.6M194.6,-144.2L227.1,-117.0M229.2,-115.2L302.7,-53.5M304.5,-52.0L352.1,-12.1M353.9,-10.5L379.0,10.5M427.8,51.4L467.7,85.0M469.4,86.4L494.1,107.1M497.3,109.8L562.2,164.2M562.4,164.4L633.7,224.2M123.4,-188.7L158.6,-159.1M163.4,-155.1L199.9,-124.5M199.9,-124.5L252.6,-80.3M289.6,-49.2L326.6,-18.2M328.7,-16.5L367.7,16.3M373.5,21.2L393.6,38.1M397.0,40.9L451.3,86.4M455.7,90.1L499.4,126.8M505.0,131.5L536.1,157.6M541.8,162.4L570.7,186.6M115.9,-179.8L158.1,-144.3M161.1,-141.8L221.0,-91.6M225.4,-87.9L288.2,-35.2M292.2,-31.8L357.0,22.6M358.1,23.5L408.8,66.0M414.8,71.0L471.2,118.4M474.8,121.5L512.0,152.6M589.3,217.5L639.3,259.5M185.4,-109.7L215.4,-84.5M216.6,-83.5L254.2,-51.9M259.9,-47.1L279.8,-30.4M284.2,-26.8L343.4,23.0M345.6,24.8L407.5,76.7M408.6,77.6L455.2,116.8M456.8,118.1L485.0,141.7M485.6,142.3L528.4,178.2M529.3,178.9L558.7,203.6M559.1,203.9L595.3,234.3M599.8,238.1L626.0,260.1M102.9,-164.4L178.0,-101.4M178.5,-100.9L208.9,-75.4M214.3,-70.9L238.3,-50.8M243.0,-46.8L310.1,9.4M312.6,11.6L352.0,44.6M355.0,47.1L414.7,97.2M419.8,101.5L473.4,146.5M508.7,176.1L551.0,211.6M554.7,214.7L579.8,235.7M580.6,236.4L615.7,265.9M122.0,-132.6L194.6,-71.7M198.0,-68.9L242.7,-31.3M244.7,-29.6L274.0,-5.0M357.9,65.3L388.8,91.3M389.8,92.1L458.3,149.6M501.0,185.4L524.6,205.2M554.4,230.2L584.5,255.5M586.1,256.8L624.4,288.9M137.9,-105.2L209.7,-44.9M214.7,-40.8L278.4,12.7M282.8,16.4L339.8,64.2M345.5,69.0L410.3,123.4M413.6,126.1L443.5,151.3M447.4,154.5L474.6,177.3M533.0,226.4L570.0,257.4M575.6,262.1L641.1,317.0M81.1,-138.4L135.9,-92.4M139.2,-89.6L170.4,-63.4M171.4,-62.6L219.7,-22.0M225.2,-17.5L261.1,12.7M265.1,16.0L322.4,64.1M325.1,66.4L396.9,126.6M402.6,131.4L467.4,185.8M470.0,188.0L501.1,214.0M503.4,216.0L549.1,254.3M550.2,255.2L603.2,299.7M75.1,-131.2L129.6,-85.5M261.4,25.1L310.3,66.1M312.2,67.8L352.3,101.4M354.0,102.8L383.7,127.7M566.4,281.0L593.5,303.8M67.5,-122.1L137.1,-63.6M164.4,-40.7L216.3,2.8M275.0,52.0L318.2,88.3M323.1,92.4L378.2,138.7M378.4,138.8L410.7,165.9M416.2,170.5L469.2,215.0M536.7,271.6L592.8,318.7M59.9,-113.1L83.3,-93.4M89.0,-88.6L141.0,-45.0M142.3,-43.9L182.9,-9.9M244.1,41.5L279.6,71.3M350.1,130.4L370.5,147.6M372.0,148.8L430.3,197.7M435.2,201.9L465.4,227.2M466.3,228.0L533.1,284.0M536.5,286.8L587.1,329.4M53.8,-105.8L127.7,-43.7M130.8,-41.2L182.2,2.0M183.7,3.2L205.9,21.9M210.9,26.0L245.1,54.8M247.8,57.0L283.2,86.7M284.7,88.0L318.8,116.6M324.1,121.0L384.1,171.4M385.0,172.1L407.1,190.7M411.1,194.0L439.8,218.1M445.1,222.5L467.0,241.0M472.1,245.2L528.8,292.8M533.4,296.6L605.5,357.1M123.5,-33.2L170.6,6.4M173.6,8.9L217.1,45.4M220.1,47.9L253.1,75.6M257.7,79.4L309.7,123.0M310.9,124.0L355.6,161.6M356.7,162.5L395.9,195.4M401.7,200.3L426.9,221.4M427.5,221.9L497.5,280.7M502.8,285.1L540.1,316.4M540.7,316.9L595.8,363.2M40.0,-89.4L75.0,-60.1M174.7,23.6L201.3,45.9M206.9,50.6L265.1,99.5M269.7,103.3L335.3,158.3M339.2,161.7L408.4,219.8M413.3,223.8L465.2,267.4M470.4,271.7L498.0,294.9M501.6,297.9L540.7,330.8M33.8,-82.0L74.4,-48.0M74.6,-47.9L103.5,-23.6M105.7,-21.7L164.8,27.8M165.2,28.2L236.7,88.2M240.7,91.5L294.5,136.7M295.4,137.4L340.1,175.0M342.9,177.3L390.8,217.5M396.7,222.4L429.6,250.0M434.5,254.2L508.0,315.9M510.8,318.2L578.2,374.7M27.7,-74.7L66.2,-42.3M142.2,21.4L178.8,52.1M184.6,57.0L206.7,75.6M208.9,77.4L270.8,129.3M276.9,134.5L351.6,197.1M357.2,201.8L410.7,246.7M453.3,282.5L478.3,303.5M482.3,306.8L545.7,360.0M21.7,-67.6L65.4,-30.9M67.5,-29.1L110.2,6.7M110.8,7.2L160.3,48.7M164.6,52.3L185.8,70.1M254.5,127.7L299.8,165.8M304.4,169.7L328.0,189.4M330.9,191.9L360.0,216.3M362.2,218.1L389.3,240.9M392.0,243.1L418.4,265.3M419.7,266.4L471.6,309.9M476.0,313.6L529.5,358.5M14.4,-58.9L53.0,-26.6M58.2,-22.2L130.6,38.5M133.2,40.7L179.9,79.9M181.7,81.5L215.9,110.2M220.7,114.2L276.1,160.7M278.7,162.9L334.6,209.8M387.0,253.7L458.0,313.3M459.5,314.6L487.8,338.3M489.7,339.9L515.2,361.3M7.1,-50.2L50.4,-13.8M53.5,-11.3L91.8,20.8M93.5,22.3L148.4,68.3M150.1,69.8L182.0,96.5M258.1,160.4L305.6,200.3M309.1,203.2L335.2,225.1M335.9,225.7L393.6,274.1M397.5,277.4L419.8,296.1M419.9,296.2L478.3,345.2M479.5,346.2L539.8,396.8M-0.5,-41.1L31.1,-14.6M36.8,-9.8L100.0,43.2M102.6,45.4L144.9,80.9M149.7,84.9L198.7,126.1M201.7,128.5L234.4,156.0M235.1,156.6L295.6,207.3M297.9,209.3L373.2,272.4M375.3,274.2L407.3,301.0M408.8,302.3L457.3,343.0M460.2,345.5L527.3,401.8M-7.3,-33.0L66.3,28.7M72.0,33.5L111.9,67.0M113.2,68.0L179.4,123.6M181.2,125.1L249.0,182.0M253.4,185.6L295.1,220.7M300.9,225.5L369.4,283.0M370.2,283.7L421.3,326.5M427.1,331.4L465.0,363.3M465.4,363.5L512.6,403.2M39.9,21.0L109.1,79.1M111.2,80.9L166.9,127.7M169.7,130.0L203.1,158.0M265.3,210.2L299.8,239.1M327.6,262.5L367.9,296.3M402.5,325.3L474.9,386.1M477.6,388.3L525.6,428.6M33.3,29.3L100.6,85.8M102.4,87.3L133.8,113.6M135.4,115.0L206.1,174.3M208.5,176.3L250.9,211.9M255.3,215.6L302.7,255.4M85.9,88.7L105.8,105.3M148.0,140.7L197.5,182.3M202.0,186.1L251.9,228.0M257.7,232.8L292.8,262.2M343.1,304.5L394.1,347.3M399.4,351.8L428.0,375.7M430.9,378.2L458.9,401.7M461.0,403.4L500.6,436.7M-35.2,0.2L-0.8,29.1M1.0,30.5L61.7,81.5M64.8,84.1L121.2,131.5M126.2,135.7L188.9,188.3M212.9,208.3L266.9,253.7M271.0,257.1L315.9,294.8M318.8,297.2L381.4,349.8M383.0,351.1L430.6,391.0M-22.0,26.7L13.7,56.7M19.3,61.3L46.0,83.8M50.9,87.9L98.1,127.5M104.2,132.6L169.4,187.4M171.4,189.0L222.1,231.6M228.1,236.6L296.0,293.5M364.7,351.2L393.7,375.5M396.2,377.6L470.7,440.2M16.8,72.1L68.8,115.7M69.8,116.6L137.8,173.7M138.6,174.3L207.2,231.9M244.4,263.1L313.2,320.8M316.2,323.3L364.7,364.0M364.8,364.1L418.1,408.9M423.3,413.2L486.3,466.1M-55.3,24.2L-2.7,68.4M-1.2,69.7L44.7,108.2M48.8,111.7L92.8,148.6M97.2,152.2L162.2,206.8M215.5,251.5L280.7,306.3M285.1,309.9L305.0,326.6M383.2,392.2L436.5,436.9M437.3,437.6L513.0,501.1M-36.1,52.1L12.0,92.4M16.4,96.2L60.9,133.5M66.1,137.8L96.9,163.7M100.4,166.6L159.4,216.1M159.6,216.3L192.7,244.1M198.0,248.5L252.6,294.3M296.5,331.2L366.2,389.6M367.0,390.3L431.4,444.4M-68.1,39.5L-47.3,57.0M-46.6,57.6L-23.8,76.7M-23.4,77.0L24.1,116.9M94.3,175.8L148.8,221.5M151.4,223.7L221.7,282.7M224.0,284.6L257.1,312.4M258.0,313.2L319.3,364.6M325.3,369.7L363.0,401.3M365.2,403.1L428.6,456.3M434.7,461.4L468.1,489.4M-73.9,46.4L-23.8,88.4M-19.0,92.4L12.5,118.9M15.8,121.6L68.6,165.9M99.9,192.2L162.0,244.3M196.4,273.2L238.3,308.4M242.8,312.1L268.9,334.0M273.5,337.9L313.4,371.4M316.6,374.0L346.7,399.3M351.6,403.5L384.3,430.9M412.2,454.3L465.4,498.9M-80.4,54.1L-30.2,96.2M-25.0,100.6L11.2,130.9M13.9,133.2L35.8,151.6M39.0,154.2L107.3,211.5M183.0,275.1L221.0,307.0M225.3,310.6L286.9,362.3M417.0,471.4L484.4,528.0M-87.8,62.9L-20.9,119.0M-19.8,120.0L30.9,162.5M108.5,227.6L137.3,251.8M190.7,296.6L215.6,317.5M302.9,390.8L375.9,452.0M-27.0,129.1L42.3,187.2M44.4,189.0L92.0,228.9M165.9,290.9L214.8,331.9M218.1,334.7L290.8,395.7M294.8,399.1L360.9,454.5M363.5,456.8L423.7,507.2M-101.4,79.2L-78.6,98.4M-73.5,102.6L-11.3,154.8M-10.6,155.4L38.0,196.2M41.8,199.4L110.2,256.8M221.9,350.5L297.9,414.3M298.3,414.6L327.1,438.8M332.9,443.6L357.7,464.4M-10.1,168.2L53.1,221.2M56.2,223.9L82.4,245.9M83.3,246.6L126.9,283.2M132.9,288.2L187.4,333.9M188.8,335.1L253.0,389.0M256.4,391.9L278.0,409.9M280.8,412.3L348.3,468.9M348.6,469.2L398.6,511.2M-113.5,93.6L-66.7,132.8M-65.1,134.1L-5.5,184.2M-3.7,185.7L43.9,225.6M49.8,230.6L88.4,263.0M94.3,267.9L143.3,309.0M249.4,398.1L273.2,418.0M385.5,512.3L409.5,532.4M-120.9,102.3L-50.2,161.7M-45.8,165.3L-23.9,183.7M-19.8,187.1L52.1,247.5M53.3,248.5L116.2,301.2M118.9,303.5L193.9,366.4M199.2,370.9L224.8,392.4M228.8,395.8L250.9,414.3M252.8,415.9L317.7,470.4M-126.8,109.4L-82.2,146.8M-79.5,149.1L-44.1,178.8M-38.8,183.2L23.2,235.2M23.5,235.5L70.5,275.0M75.0,278.7L145.1,337.5M150.4,342.0L188.5,374.0M247.1,423.2L293.2,461.8M298.7,466.4L347.5,507.4M351.5,510.7L419.5,567.8M-132.9,116.6L-71.8,167.9M-67.4,171.6L-21.9,209.8M-20.3,211.1L32.9,255.7M34.9,257.4L77.5,293.2M128.6,336.1L153.7,357.1M158.6,361.2L177.8,377.3M182.2,381.0L215.7,409.1M217.6,410.7L255.6,442.6M256.1,443.0L284.8,467.1M285.1,467.3L338.4,512.1M340.4,513.8L383.1,549.6M-140.5,125.7L-88.6,169.2M-83.4,173.6L-58.0,194.9M5.6,248.2L49.0,284.6M52.3,287.4L74.5,306.1M130.9,353.3L181.1,395.5M183.4,397.5L213.6,422.8M214.4,423.4L272.3,472.0M277.6,476.5L310.7,504.3M-147.2,133.8L-91.4,180.6M-59.9,207.0L-13.1,246.3M20.9,274.8L60.4,308.0M61.6,309.0L109.6,349.3M113.5,352.5L167.1,397.5M169.2,399.3L224.8,446.0M229.1,449.5L304.9,513.2M309.1,516.7L374.1,571.2M-154.0,141.8L-105.5,182.5M-58.2,222.2L-25.0,250.1M49.5,312.6L99.0,354.2M103.6,358.0L124.1,375.2M229.4,463.6L284.0,509.4M288.7,513.3L344.6,560.2M345.4,560.9L384.5,593.7M-161.7,151.0L-110.8,193.7M-107.9,196.0L-34.5,257.6M-31.8,259.9L2.6,288.8M3.9,289.9L25.7,308.1M130.3,395.9L177.6,435.6M180.0,437.6L214.0,466.2M215.6,467.5L291.2,530.9M293.0,532.5L348.9,579.3M-107.2,209.7L-71.6,239.6M-65.6,244.6L-25.2,278.5M25.9,321.4L85.0,371.0M87.4,372.9L118.7,399.2M123.5,403.2L144.4,420.8M145.7,421.9L200.4,467.8M244.3,504.6L280.4,534.9M284.6,538.4L331.5,577.8M331.9,578.1L357.0,599.2M-175.7,167.7L-131.6,204.6M-129.0,206.8L-59.5,265.2M-56.5,267.7L7.9,321.7M38.5,347.4L84.7,386.1M87.2,388.2L126.6,421.3M128.8,423.1L168.3,456.3M245.0,520.6L290.3,558.6M-182.1,175.3L-107.3,238.0M-102.8,241.8L-37.5,296.5M4.0,331.4L61.6,379.7M117.8,426.9L184.2,482.6M186.6,484.6L239.7,529.2M244.2,533.0L319.5,596.1M320.4,596.8L371.2,639.5M-188.4,182.9L-146.5,218.1M-142.8,221.2L-95.3,261.0M-93.9,262.2L-69.6,282.6M-66.3,285.4L-5.3,336.6M72.3,401.7L140.6,459.0M140.9,459.2L205.8,513.7M211.5,518.5L255.6,555.5M258.0,557.5L317.2,607.1M-194.6,190.3L-137.1,238.6M-132.7,242.2L-101.8,268.1M-95.9,273.1L-70.7,294.2M-64.8,299.2L1.0,354.5M4.2,357.2L49.8,395.4M54.8,399.6L81.8,422.3M84.9,424.8L113.1,448.5M238.3,553.5L291.6,598.3M292.4,599.0L354.6,651.2M-200.7,197.5L-142.2,246.6M-141.5,247.2L-115.0,269.4M-61.3,314.5L-31.0,339.9M-29.6,341.1L-10.2,357.4M-7.6,359.5L48.9,407.0M49.4,407.4L93.8,444.7M168.6,507.4L229.9,558.8M233.0,561.4L282.2,602.7M-207.0,204.9L-151.1,251.8M-148.1,254.3L-116.4,281.0M-82.8,309.1L-22.1,360.1M16.9,392.7L78.3,444.3M84.1,449.2L138.0,494.3M141.3,497.2L204.5,550.2M206.8,552.1L264.0,600.1M265.8,601.6L296.3,627.2M297.8,628.5L318.4,645.8M-214.2,213.6L-139.9,275.9M-62.5,340.8L6.3,398.5M9.1,400.9L42.9,429.2M44.4,430.5L81.7,461.8M81.8,461.9L148.0,517.5M148.8,518.2L219.5,577.5M219.6,577.6L251.4,604.3M251.6,604.4L284.2,631.7M290.2,636.8L312.3,655.3M-221.2,221.9L-201.4,238.5M-167.7,266.8L-130.8,297.7M-130.8,297.8L-101.2,322.6M-99.1,324.4L-65.6,352.5M-65.2,352.8L-35.4,377.8M-34.6,378.5L32.7,435.0M33.2,435.4L102.1,493.2M127.9,514.9L180.4,558.9M259.9,625.6L319.1,675.2M-228.0,230.0L-207.4,247.3M-201.5,252.2L-165.6,282.3M-159.6,287.4L-115.8,324.1M-113.6,326.0L-79.5,354.6M-73.8,359.4L-26.6,399.0M16.1,434.8L43.2,457.6M78.5,487.1L127.3,528.1M130.7,530.9L167.8,562.1M171.0,564.8L240.3,623.0M243.2,625.4L311.1,682.3M-234.5,237.7L-214.0,254.9M-209.1,259.0L-162.9,297.7M-88.3,360.3L-57.8,386.0M-56.0,387.4L-14.9,422.0M-10.2,425.9L60.7,485.4M65.7,489.6L122.1,536.9M123.2,537.8L155.9,565.3M157.5,566.6L215.1,615.0M217.9,617.3L268.4,659.7M-241.1,245.6L-201.0,279.2M-197.5,282.2L-170.5,304.8M-167.4,307.4L-104.6,360.1M-98.7,365.1L-38.0,416.0M-34.9,418.6L-6.0,442.9M-4.1,444.5L42.5,483.5M42.6,483.6L119.0,547.7M165.3,586.6L201.0,616.5M204.9,619.8L274.3,678.1M-248.6,254.6L-177.3,314.4M-94.9,383.6L-58.1,414.5M-53.3,418.5L13.6,474.7M19.0,479.2L76.1,527.1M81.9,532.0L124.7,567.8M130.3,572.5L170.7,606.5M176.2,611.1L240.2,664.8M242.2,666.5L290.5,707.0M-255.0,262.2L-210.6,299.5M-209.9,300.1L-145.5,354.1M-141.3,357.6L-83.1,406.4M-77.6,411.0L-22.9,457.0M-22.2,457.5L8.8,483.5M10.5,485.0L37.6,507.7M37.9,508.0L62.9,529.0M63.5,529.5L100.4,560.4M101.3,561.2L153.9,605.3M158.1,608.8L190.5,636.0M192.2,637.5L236.0,674.2M236.5,674.7L313.0,738.8M671.9,184.3L653.1,206.7M652.0,208.1L626.1,238.9M624.4,240.9L593.5,277.8M591.5,280.2L532.0,351.0M527.5,356.4L490.6,400.4M487.6,404.0L423.4,480.5M419.9,484.7L364.1,551.2M363.4,552.0L299.2,628.5M294.5,634.1L255.5,680.5M252.8,683.8L222.5,719.9M661.6,175.7L617.8,227.9M614.4,232.0L576.7,276.9M505.1,362.3L487.2,383.5M486.4,384.5L455.6,421.2M451.1,426.5L413.1,471.8M355.5,540.5L334.6,565.5M331.6,569.0L268.0,644.8M267.3,645.6L239.4,678.8M652.3,167.9L624.2,201.4M622.2,203.7L596.7,234.2M592.7,238.9L536.6,305.8M531.7,311.6L469.1,386.2M468.4,387.0L428.1,435.0M426.3,437.2L399.8,468.8M394.8,474.8L354.9,522.2M351.1,526.8L299.8,588.0M295.7,592.8L264.8,629.7M262.2,632.7L210.5,694.3M644.2,161.0L616.9,193.6M615.9,194.6L593.5,221.4M593.5,221.4L548.4,275.1M547.7,276.0L495.9,337.7M493.1,341.1L434.4,411.0M433.8,411.7L401.7,450.0M397.1,455.5L369.6,488.3M367.3,491.0L335.0,529.5M334.9,529.6L308.1,561.6M262.0,616.5L217.6,669.3M635.9,154.1L594.0,204.1M589.2,209.9L545.7,261.6M545.3,262.2L492.9,324.5M491.3,326.4L449.1,376.8M425.9,404.4L368.0,473.5M364.6,477.5L335.5,512.2M256.7,606.1L215.5,655.1M213.5,657.5L191.1,684.2M565.6,220.6L506.9,290.6M506.0,291.6L483.0,319.0M478.5,324.4L447.9,360.9M444.6,364.8L422.4,391.2M420.9,393.0L396.7,421.9M396.5,422.1L338.3,491.5M266.5,577.0L202.9,652.9M618.3,139.3L594.4,167.8M590.2,172.8L552.6,217.6M471.1,314.7L453.1,336.2M451.2,338.4L387.4,414.5M382.6,420.2L346.4,463.3M343.7,466.5L323.3,490.8M294.2,525.6L243.4,586.1M242.3,587.4L212.8,622.6M209.5,626.4L178.7,663.2M610.1,132.5L547.0,207.7M543.5,211.8L480.0,287.6M475.4,292.9L443.4,331.2M441.0,333.9L398.9,384.2M394.9,388.9L360.6,429.8M356.1,435.2L315.4,483.6M313.1,486.5L288.1,516.1M251.3,560.1L219.2,598.4M216.0,602.1L159.0,670.0M601.8,125.5L578.9,152.8M574.9,157.5L518.8,224.5M515.1,228.8L490.0,258.8M417.6,345.0L387.3,381.2M386.6,382.0L349.0,426.8M348.1,427.9L318.7,462.9M315.9,466.2L283.5,504.9M227.8,571.2L171.5,638.3M591.5,116.9L565.9,147.4M562.1,152.0L541.4,176.5M539.2,179.2L520.7,201.3M468.1,263.9L425.1,315.2M422.0,318.8L359.3,393.7M339.2,417.6L302.5,461.3M299.7,464.6L271.5,498.2M211.3,569.9L183.5,603.1M581.2,108.2L541.2,155.9M537.9,159.8L485.8,221.9M483.9,224.1L441.3,274.9M437.6,279.3L410.7,311.4M298.8,444.7L244.4,509.5M240.3,514.4L183.8,581.8M183.2,582.5L123.6,653.5M572.4,100.8L539.5,140.0M456.9,238.4L439.5,259.2M410.3,294.0L346.2,370.4M346.1,370.5L313.7,409.1M313.2,409.7L253.1,481.4M248.0,487.4L229.7,509.2M563.5,93.3L518.0,147.5M513.7,152.7L493.2,177.0M488.5,182.6L471.1,203.5M400.1,288.0L345.1,353.5M344.6,354.2L296.5,411.5M292.1,416.7L273.1,439.3M272.7,439.8L235.1,484.7M234.2,485.7L196.3,531.0M192.2,535.8L156.8,577.9M155.5,579.5L106.1,638.4M555.3,86.5L528.5,118.5M466.9,191.9L446.0,216.8M444.3,218.9L411.1,258.4M410.4,259.3L391.4,281.9M390.6,282.8L365.1,313.2M364.4,314.1L341.3,341.6M338.4,345.1L308.9,380.3M277.1,418.1L254.3,445.3M221.1,484.8L181.0,532.7M544.8,77.7L481.6,153.0M477.4,158.0L449.4,191.4M447.0,194.3L420.2,226.2M415.1,232.2L357.1,301.3M352.9,306.3L303.2,365.6M299.0,370.6L242.3,438.1M237.6,443.8L204.3,483.4M199.8,488.9L145.3,553.8M142.6,557.1L118.9,585.3M534.3,68.8L474.6,140.0M469.9,145.5L432.0,190.7M427.3,196.3L410.2,216.7M408.6,218.6L366.5,268.7M365.5,269.9L346.0,293.1M317.8,326.7L289.0,361.1M286.7,363.8L258.9,397.0M218.1,445.5L200.0,467.2M196.3,471.6L154.8,521.0M149.9,526.9L119.5,563.1M524.4,60.5L493.6,97.3M492.5,98.6L447.5,152.2M444.6,155.6L387.2,224.0M330.1,292.1L299.3,328.7M261.9,373.3L197.8,449.8M515.6,53.1L494.5,78.2M492.3,80.9L458.3,121.4M435.3,148.8L398.1,193.1M397.8,193.5L378.4,216.6M378.3,216.7L350.4,249.9M347.6,253.4L287.8,324.6M246.3,374.1L211.8,415.2M166.2,469.5L130.6,512.0M507.6,46.4L448.4,116.9M446.8,118.8L416.0,155.5M414.0,157.9L387.7,189.2M344.6,240.6L323.6,265.6M257.6,344.3L193.4,420.8M129.8,496.6L85.0,549.9M498.2,38.6L465.9,77.0M396.9,159.3L345.9,220.1M343.4,223.0L279.9,298.8M276.5,302.7L231.2,356.8M227.8,360.8L187.9,408.3M183.0,414.1L148.6,455.2M143.7,461.1L113.5,497.0M113.4,497.1L92.1,522.5M488.6,30.5L426.2,104.9M327.7,222.2L306.1,248.0M259.0,304.2L202.1,371.9M200.8,373.5L145.1,439.9M140.2,445.8L120.5,469.2M119.8,470.1L57.9,543.8M479.8,23.1L462.4,43.8M353.8,173.2L292.5,246.3M292.1,246.8L267.7,275.9M262.6,282.0L245.5,302.3M241.5,307.1L184.8,374.6M182.9,377.0L138.0,430.4M55.8,528.4L24.0,566.2M471.8,16.4L411.6,88.2M409.1,91.2L371.9,135.6M367.8,140.4L322.7,194.2M320.4,197.0L289.4,233.8M258.0,271.3L207.4,331.6M203.4,336.4L151.0,398.8M113.4,443.7L93.1,467.9M92.9,468.1L71.6,493.4M68.5,497.1L30.8,542.1M463.9,9.8L418.4,64.1M380.7,109.0L353.9,140.9M305.5,198.7L272.8,237.6M271.3,239.4L253.2,260.9M181.5,346.4L156.1,376.7M153.1,380.3L90.1,455.3M87.8,458.1L53.9,498.4M49.9,503.3L-3.0,566.3M454.2,1.6L397.0,69.7M340.6,137.0L297.5,188.3M249.9,245.0L224.4,275.5M223.6,276.4L202.1,302.0M136.6,380.1L97.7,426.5M96.0,428.5L79.5,448.2M57.6,474.3L-5.5,549.4M443.8,-7.1L404.8,39.4M400.0,45.1L336.7,120.5M333.3,124.6L312.8,149.0M310.7,151.5L257.8,214.6M254.5,218.5L198.4,285.3M196.8,287.2L177.6,310.2M173.8,314.7L156.2,335.6M114.0,385.9L88.4,416.5M84.3,421.4L34.4,480.8M31.8,483.9L-18.0,543.2M434.9,-14.6L373.9,58.1M370.9,61.6L308.2,136.3M305.6,139.5L287.1,161.5M282.5,167.0L241.6,215.7M240.8,216.7L216.8,245.3M214.3,248.2L166.8,304.9M165.7,306.2L131.5,346.9M38.7,457.5L-16.7,523.6M426.7,-21.4L409.2,-0.6M406.6,2.5L348.5,71.8M326.7,97.7L308.9,118.9M304.3,124.5L285.3,147.0M282.4,150.5L266.3,169.7M265.7,170.4L227.0,216.6M175.7,277.7L140.9,319.2M138.2,322.4L104.3,362.8M102.2,365.2L78.4,393.6M77.0,395.3L41.8,437.3M39.9,439.6L16.8,467.0M16.2,467.7L-26.3,518.4M416.6,-29.9L372.4,22.8M367.8,28.3L346.0,54.3M344.7,55.9L292.3,118.3M292.1,118.5L260.2,156.6M222.3,201.7L177.5,255.1M174.9,258.2L118.9,325.0M118.2,325.8L91.2,357.9M89.8,359.7L62.9,391.7M59.8,395.4L26.4,435.2M25.4,436.3L-7.1,475.1M408.1,-37.1L377.5,-0.6M374.6,2.9L345.3,37.7M343.3,40.1L298.3,93.8M264.5,134.0L221.8,185.0M221.7,185.1L190.8,221.9M190.0,222.8L137.7,285.2M135.5,287.7L110.2,317.9M106.7,322.1L52.5,386.7M49.3,390.4L-10.4,461.6M-15.2,467.4L-45.3,503.2M400.0,-43.8L362.5,0.9M359.5,4.5L342.1,25.1M337.9,30.2L300.7,74.5M299.4,76.1L247.2,138.2M243.3,142.9L213.6,178.3M209.3,183.4L154.6,248.6M128.0,280.3L98.2,315.9M96.2,318.2L39.6,385.7M-16.3,452.2L-41.6,482.4M390.2,-52.1L357.5,-13.1M352.9,-7.7L325.8,24.6M301.7,53.4L283.2,75.5M213.2,158.8L169.4,211.1M116.9,273.6L93.9,301.1M66.6,333.6L32.9,373.8M29.7,377.6L-14.0,429.7M380.0,-60.6L339.1,-11.9M337.2,-9.6L279.2,59.5M278.5,60.4L243.5,102.1M211.0,140.8L158.5,203.3M156.9,205.3L102.5,270.1M61.6,318.9L19.3,369.3M369.6,-69.4L339.3,-33.2M302.6,10.5L272.5,46.4M268.0,51.8L251.0,72.0M250.8,72.2L226.0,101.8M224.8,103.3L203.1,129.1M69.9,287.8L40.9,322.4M40.4,323.0L24.2,342.3M21.9,345.0L-28.4,405.0M-28.9,405.5L-64.5,448.0M361.7,-76.0L325.4,-32.6M324.5,-31.6L291.3,7.9M287.0,13.1L257.2,48.6M256.0,50.0L202.8,113.4M202.1,114.3L169.9,152.6M167.4,155.6L134.6,194.6M90.3,247.5L35.5,312.8M34.4,314.1L-20.2,379.2M-21.3,380.5L-59.2,425.7M353.8,-82.6L312.8,-33.7M312.6,-33.5L286.2,-2.1M246.5,45.3L218.2,79.0M216.2,81.4L190.9,111.6M188.4,114.5L142.5,169.2M141.4,170.6L118.7,197.7M116.7,200.0L77.3,246.9M75.1,249.5L47.9,282.0M43.1,287.8L6.2,331.7M3.2,335.2L-41.4,388.4M-44.3,391.8L-100.6,459.0M343.9,-90.9L324.7,-67.9M290.1,-26.7L254.0,16.3M253.1,17.4L207.8,71.4M203.0,77.1L145.4,145.7M119.2,177.0L90.0,211.8M89.7,212.1L28.6,284.9M24.2,290.2L-13.7,335.4M-72.2,405.0L-120.0,462.0M281.2,-34.2L219.6,39.2M218.9,40.1L164.7,104.6M164.6,104.8L128.9,147.3M124.3,152.8L99.0,182.9M98.6,183.4L59.3,230.3M6.9,292.7L-21.8,326.9M-23.9,329.5L-60.8,373.4M-63.7,376.8L-123.5,448.1M325.8,-106.1L283.9,-56.1M282.6,-54.5L248.2,-13.5M245.1,-9.9L181.4,66.1M179.6,68.2L160.3,91.2M159.0,92.7L116.2,143.8M56.6,214.7L-0.3,282.6M-1.5,284.0L-24.2,311.1M-27.7,315.3L-62.2,356.4M-65.9,360.8L-84.1,382.5M-87.4,386.4L-142.3,451.8M317.1,-113.4L255.1,-39.5M250.1,-33.6L195.6,31.5M193.9,33.4L165.0,67.9M71.9,178.9L25.9,233.7M21.2,239.3L3.3,260.6M1.1,263.2L-60.6,336.8M-63.5,340.2L-100.4,384.2M308.1,-121.0L266.9,-72.0M262.8,-67.1L209.4,-3.4M208.3,-2.1L147.2,70.8M143.3,75.4L101.7,124.9M100.4,126.5L77.5,153.8M74.7,157.1L54.2,181.6M-9.5,257.5L-57.0,314.1M-107.6,374.4L-169.1,447.7M299.9,-127.8L280.4,-104.6M276.5,-99.9L217.2,-29.3M214.9,-26.5L157.3,42.2M155.2,44.6L93.7,117.9M93.4,118.3L48.9,171.4M45.8,175.0L2.9,226.2M-24.6,258.9L-77.9,322.5M-121.8,374.8L-172.4,435.0M291.5,-134.9L236.6,-69.4M232.7,-64.8L197.0,-22.2M195.2,-20.1L165.7,15.1M131.1,56.2L98.8,94.8M97.2,96.6L49.5,153.5M47.7,155.7L-1.9,214.8M-4.1,217.4L-59.3,283.2M-62.1,286.5L-102.2,334.4M-103.4,335.7L-151.2,392.7M281.3,-143.5L225.9,-77.5M224.5,-75.8L168.8,-9.4M134.1,31.9L76.4,100.7M25.4,161.5L-15.4,210.1M-16.9,211.9L-77.0,283.5M-79.2,286.2L-103.1,314.6M-133.5,350.9L-191.5,420.0M272.6,-150.7L236.9,-108.2M232.1,-102.5L203.9,-68.9M114.6,37.5L66.6,94.8M20.3,150.0L-2.5,177.1M-67.6,254.7L-112.0,307.5M262.5,-159.2L223.6,-112.8M219.0,-107.4L193.5,-76.9M189.2,-71.9L172.4,-51.9M171.7,-51.0L136.2,-8.7M131.8,-3.4L79.3,59.1M5.3,147.4L-36.6,197.2M-41.5,203.1L-79.5,248.4M-82.4,251.8L-116.3,292.3M-120.6,297.4L-146.2,327.9M-146.4,328.1L-198.5,390.2M204.1,-108.7L174.8,-73.8M152.1,-46.8L105.7,8.5M102.6,12.2L55.1,68.8M54.6,69.4L17.9,113.2M17.1,114.1L-23.2,162.2M-26.0,165.4L-87.8,239.1M-90.4,242.3L-127.5,286.4M-128.1,287.1L-174.5,342.4M244.6,-174.3L212.1,-135.6M119.8,-25.6L84.5,16.5M81.2,20.4L19.3,94.2M19.0,94.5L-18.0,138.6M-22.3,143.8L-74.7,206.2M-77.1,209.0L-131.3,273.6M-134.1,276.9L-151.9,298.2M162.9,-98.4L110.9,-36.3M110.5,-35.8L52.8,32.9M49.8,36.5L16.0,76.7M14.7,78.3L-38.6,141.8M-42.8,146.8L-79.0,189.9M-80.6,191.8L-98.3,212.9M-100.4,215.4L-126.1,246.1M-128.3,248.7L-146.9,270.8M-149.2,273.6L-194.5,327.5M225.3,-190.4L186.4,-144.0M181.8,-138.5L154.9,-106.4M151.4,-102.3L95.2,-35.3M92.8,-32.5L51.1,17.3M46.6,22.6L26.3,46.8M24.0,49.5L-31.6,115.8M-34.5,119.2L-83.9,178.1M-89.0,184.2L-144.5,250.3M-147.9,254.4L-174.9,286.6M-179.7,292.3L-237.0,360.6M214.8,-199.2L170.0,-145.8M166.9,-142.0L141.2,-111.4M136.2,-105.5L105.1,-68.5M101.9,-64.6L52.6,-5.9M5.0,50.8L-17.7,77.9M-18.7,79.1L-80.6,152.9M-85.1,158.2L-113.0,191.5M-114.6,193.4L-132.6,214.8M-135.8,218.7L-163.3,251.4M-166.5,255.3L-226.6,326.9M156.9,-146.7L126.5,-110.4M125.5,-109.2L64.6,-36.7M59.7,-30.8L11.7,26.4M8.8,29.8L-40.2,88.2M-44.9,93.9L-72.9,127.2M-77.4,132.6L-111.1,172.8M-114.9,177.2L-143.8,211.7M-147.0,215.5L-205.6,285.4M-206.9,286.9L-268.5,360.3M197.9,-213.4L139.5,-143.8M139.2,-143.5L97.0,-93.2M93.5,-89.0L72.5,-63.9M34.9,-19.2L2.7,19.2M-1.4,24.1L-46.1,77.4M-70.5,106.5L-123.3,169.4M-128.0,174.9L-191.3,250.4M-195.4,255.3L-240.0,308.5M189.8,-220.3L168.4,-194.9M168.1,-194.4L138.2,-158.9M136.0,-156.1L87.7,-98.6M83.0,-93.0L63.1,-69.3M58.1,-63.3L29.8,-29.7M27.1,-26.4L-17.1,26.3M-18.1,27.5L-77.0,97.6M-80.2,101.5L-103.3,129.0M-107.0,133.4L-165.4,203.0M-166.0,203.7L-221.2,269.5M-222.3,270.9L-270.2,327.9M179.5,-228.9L134.9,-175.8M134.0,-174.8L116.6,-153.9M113.5,-150.3L52.5,-77.5M47.6,-71.7L22.6,-42.0M18.7,-37.3L-30.5,21.4M-33.3,24.7L-80.8,81.3M-84.7,86.0L-143.7,156.2M-144.5,157.2L-162.2,178.3M-163.4,179.7L-217.2,243.8M-220.8,248.2L-260.2,295.1M171.2,-235.8L145.7,-205.4M84.0,-131.9L35.6,-74.2M32.7,-70.7L12.0,-46.0M9.9,-43.5L-48.3,25.8M-48.6,26.1L-88.4,73.6M-182.0,185.1L-243.3,258.2" stroke="#fbfbfb" stroke-width="1.6" fill="none"/><path clip-path="url(#dC)" d="M-155.7,-68.7L-90.2,-75.6M-82.4,-76.4L-43.6,-80.5M-36.8,-81.2L41.5,-89.4M92.7,-94.8L147.4,-100.6M240.8,-110.4L335.6,-120.3M336.4,-120.4L418.4,-129.0M421.1,-129.3L503.6,-138.0M-154.4,-56.5L-116.6,-60.5M-116.1,-60.5L-82.4,-64.1M-77.4,-64.6L-19.5,-70.7M-18.4,-70.8L65.2,-79.6M69.6,-80.1L118.5,-85.2M161.2,-89.7L206.1,-94.4M209.2,-94.7L242.5,-98.2M245.0,-98.5L296.9,-104.0M301.1,-104.4L328.1,-107.2M335.7,-108.0L430.7,-118.0M433.2,-118.3L481.3,-123.3M-153.2,-45.2L-115.7,-49.1M-112.4,-49.5L-54.3,-55.6M-11.1,-60.1L70.1,-68.6M71.8,-68.8L166.4,-78.8M171.1,-79.2L212.3,-83.6M397.0,-103.0L434.8,-107.0M436.5,-107.1L523.4,-116.3M182.5,-67.7L264.3,-76.3M308.5,-81.0L354.7,-85.8M358.7,-86.2L435.1,-94.3M442.3,-95.0L529.5,-104.2M-150.7,-21.0L-121.7,-24.0M-115.2,-24.7L-57.3,-30.8M-53.4,-31.2L-20.7,-34.6M-18.6,-34.9L6.5,-37.5M12.9,-38.2L94.4,-46.7M101.0,-47.4L200.3,-57.9M204.9,-58.3L278.7,-66.1M284.0,-66.7L339.2,-72.5M341.8,-72.7L439.3,-83.0M444.4,-83.5L523.2,-91.8M-149.3,-8.0L-123.7,-10.7M-116.4,-11.5L-53.3,-18.1M-49.2,-18.6L20.2,-25.9M26.4,-26.5L71.0,-31.2M78.8,-32.0L109.8,-35.3M110.1,-35.3L144.9,-39.0M151.3,-39.6L224.5,-47.3M231.2,-48.0L273.4,-52.5M281.0,-53.3L335.6,-59.0M382.1,-63.9L409.7,-66.8M415.7,-67.4L484.8,-74.7M-148.2,2.6L-71.1,-5.5M-67.1,-6.0L-22.2,-10.7M-15.8,-11.4L27.3,-15.9M29.0,-16.1L74.2,-20.8M78.9,-21.3L123.0,-25.9M127.6,-26.4L221.2,-36.3M223.9,-36.5L275.7,-42.0M280.5,-42.5L308.7,-45.5M309.5,-45.6L404.1,-55.5M407.1,-55.8L463.1,-61.7M467.0,-62.1L531.2,-68.9M-146.9,14.8L-86.2,8.4M-80.1,7.8L-24.8,2.0M-18.7,1.3L31.6,-3.9M38.5,-4.7L94.6,-10.6M175.2,-19.0L251.5,-27.1M345.0,-36.9L434.3,-46.3M439.1,-46.8L491.6,-52.3M497.1,-52.9L594.5,-63.1M-145.7,26.3L-82.7,19.7M-77.2,19.1L-21.5,13.2M22.1,8.7L114.3,-1.0M119.7,-1.6L199.9,-10.0M302.0,-20.8L372.6,-28.2M377.4,-28.7L472.7,-38.7M473.9,-38.8L564.6,-48.4M-56.8,27.9L0.7,21.9M1.0,21.8L88.2,12.7M91.1,12.4L143.7,6.8M247.4,-4.1L335.8,-13.3M338.5,-13.6L420.1,-22.2M421.2,-22.3L453.3,-25.7M460.5,-26.5L525.9,-33.3M-143.3,49.1L-77.0,42.2M-72.9,41.7L-5.8,34.7M-3.1,34.4L51.1,28.7M54.8,28.3L129.5,20.4M196.7,13.4L251.3,7.7M257.5,7.0L283.2,4.3M411.0,-9.1L482.7,-16.7M-142.0,61.8L-63.2,53.5M-56.3,52.8L3.7,46.5M4.0,46.4L40.4,42.6M45.1,42.1L126.2,33.6M134.1,32.8L203.1,25.5M206.9,25.1L260.9,19.4M374.4,7.5L448.7,-0.3M449.1,-0.3L483.3,-3.9M489.8,-4.6L568.6,-12.9M-140.9,71.6L-97.1,67.0M-96.1,66.9L-64.0,63.5M-58.3,62.9L-31.9,60.2M-29.4,59.9L2.5,56.6M7.8,56.0L59.0,50.6M65.0,50.0L106.5,45.6M209.8,34.8L244.4,31.1M249.3,30.6L340.6,21.0M344.5,20.6L373.6,17.6M375.6,17.3L448.3,9.7M455.7,8.9L483.5,6.0M488.3,5.5L570.7,-3.2M-139.9,81.8L-50.2,72.4M-15.7,68.8L61.4,60.7M67.1,60.1L113.6,55.2M116.7,54.9L215.1,44.5M309.8,34.6L407.2,24.3M410.0,24.0L501.3,14.4M-138.6,94.2L-110.1,91.2M-102.9,90.5L-47.6,84.6M-41.8,84.0L27.5,76.7M86.5,70.6L145.4,64.4M152.3,63.6L227.0,55.8M230.6,55.4L277.4,50.5M321.0,45.9L363.8,41.4M371.4,40.6L448.9,32.5M456.7,31.6L489.6,28.2M494.2,27.7L558.6,20.9M-137.5,104.3L-109.7,101.4M-102.6,100.7L-66.4,96.8M-61.3,96.3L19.7,87.8M81.5,81.3L168.0,72.2M170.1,72.0L240.1,64.6M240.7,64.6L291.7,59.2M296.9,58.7L380.8,49.8M384.0,49.5L474.2,40.0M481.3,39.3L509.4,36.3M517.0,35.5L557.2,31.3M-136.2,116.7L-80.2,110.8M-7.4,103.2L30.3,99.2M35.3,98.7L88.5,93.1M121.1,89.7L160.3,85.5M160.5,85.5L191.4,82.3M193.9,82.0L240.5,77.1M244.2,76.7L292.1,71.7M299.4,70.9L381.7,62.3M385.6,61.9L421.6,58.1M426.6,57.5L455.4,54.5M513.6,48.4L557.1,43.8M-95.6,123.0L-37.4,116.9M50.0,107.7L129.2,99.4M136.3,98.6L233.9,88.3M386.6,72.3L443.4,66.3M449.4,65.7L478.3,62.7M479.0,62.6L548.9,55.2M-134.0,138.1L-99.1,134.4M-97.3,134.3L-10.4,125.1M54.8,118.3L87.2,114.9M93.0,114.3L156.6,107.6M164.2,106.8L192.4,103.8M293.6,93.2L350.9,87.2M354.9,86.7L417.9,80.1M420.7,79.8L506.4,70.8M508.6,70.6L553.1,65.9M-23.5,138.5L67.3,128.9M69.8,128.7L127.4,122.6M129.8,122.4L223.2,112.6M310.1,103.4L366.1,97.5M371.2,97.0L414.6,92.4M421.7,91.7L478.1,85.8M-131.5,161.5L-98.1,158.0M-2.4,148.0L33.3,144.2M36.6,143.9L62.8,141.1M65.5,140.8L128.0,134.2M130.8,134.0L184.4,128.3M189.0,127.8L226.6,123.9M230.4,123.5L303.3,115.8M307.6,115.4L377.8,108.0M379.2,107.8L456.1,99.8M459.2,99.4L537.5,91.2M-130.5,171.3L-78.5,165.8M-74.5,165.4L8.3,156.7M13.0,156.2L79.9,149.2M84.9,148.6L127.3,144.2M133.7,143.5L160.9,140.7M230.4,133.3L318.5,124.1M324.2,123.5L420.8,113.3M422.0,113.2L475.1,107.6M481.8,106.9L559.3,98.8M-42.2,174.4L47.7,164.9M53.0,164.4L123.8,156.9M126.0,156.7L210.4,147.8M265.9,142.0L293.7,139.1M299.1,138.5L379.8,130.0M380.4,129.9L413.5,126.5M421.4,125.6L511.4,116.2M513.2,116.0L594.6,107.4M-42.7,184.4L4.1,179.4M66.6,172.9L138.1,165.4M139.2,165.2L198.3,159.0M200.7,158.8L275.6,150.9M277.5,150.7L330.4,145.2M373.5,140.6L424.6,135.3M424.6,135.3L493.6,128.0M499.9,127.3L574.3,119.5M-127.0,204.1L-66.5,197.7M-65.1,197.6L-6.6,191.4M-0.5,190.8L97.8,180.5M103.4,179.9L135.4,176.5M139.0,176.1L190.2,170.7M192.6,170.5L229.3,166.6M328.2,156.2L371.3,151.7M373.4,151.5L422.9,146.3M507.3,137.4L574.4,130.4M-126.0,214.1L-43.0,205.4M-42.7,205.4L14.6,199.4M17.4,199.1L93.9,191.0M99.6,190.4L172.1,182.8M209.7,178.9L286.7,170.8M287.9,170.6L379.8,161.0M381.2,160.8L451.7,153.4M-83.1,221.4L-53.5,218.3M-52.7,218.3L11.5,211.5M16.1,211.0L69.0,205.5M69.1,205.5L108.2,201.3M109.1,201.2L161.0,195.8M267.6,184.6L365.7,174.3M370.8,173.7L456.0,164.8M-123.7,236.1L-48.2,228.2M-43.6,227.7L5.0,222.6M6.6,222.4L97.3,212.9M98.0,212.8L152.7,207.1M242.0,197.7L289.9,192.6M293.4,192.3L339.9,187.4M343.4,187.0L433.2,177.6M-122.3,248.8L-30.0,239.1M11.0,234.8L49.8,230.7M207.4,214.1L293.9,205.0M299.4,204.5L342.7,199.9M343.6,199.8L396.3,194.3M401.5,193.7L486.3,184.8M488.8,184.5L579.1,175.1M-64.4,255.4L3.6,248.2M4.7,248.1L100.5,238.0M105.6,237.5L186.7,229.0M188.7,228.8L258.9,221.4M343.8,212.5L428.3,203.6M432.1,203.2L484.9,197.6M531.3,192.8L604.5,185.1M-119.8,273.1L-43.3,265.0M58.1,254.4L137.3,246.1M143.4,245.4L228.8,236.4M231.4,236.2L260.1,233.1M267.5,232.4L353.9,223.3M361.3,222.5L430.0,215.3M433.2,215.0L519.6,205.9M521.0,205.7L561.4,201.5M-118.7,283.6L-77.9,279.3M18.3,269.2L48.3,266.0M132.1,257.2L188.8,251.3M196.4,250.5L224.6,247.5M228.8,247.1L290.9,240.5M294.1,240.2L329.4,236.5M473.6,221.3L526.2,215.8M529.9,215.4L565.5,211.7M-117.6,294.0L-53.6,287.3M1.6,281.5L35.4,278.0M36.5,277.8L107.0,270.4M114.4,269.7L153.2,265.6M160.7,264.8L222.4,258.3M469.8,232.3L500.2,229.1M505.9,228.5L546.4,224.3M-116.4,305.3L-42.1,297.5M-37.6,297.0L4.8,292.5M10.2,292.0L36.0,289.2M40.4,288.8L138.6,278.5M240.4,267.8L276.2,264.0M276.9,263.9L307.0,260.8M312.7,260.2L390.2,252.0M391.8,251.8L426.9,248.2M430.9,247.7L477.6,242.8M483.6,242.2L532.9,237.0M-115.1,317.4L-40.5,309.6M-34.9,309.0L-9.0,306.3M-7.2,306.1L39.9,301.1M152.0,289.4L224.4,281.7M228.8,281.3L255.6,278.5M260.2,278.0L317.3,272.0M318.3,271.9L371.5,266.3M374.2,266.0L417.4,261.5M419.9,261.2L494.9,253.3M495.1,253.3L530.8,249.5M534.1,249.2L593.7,242.9M-113.8,329.6L-54.5,323.4M-47.3,322.7L-22.2,320.0M49.6,312.5L131.8,303.8M216.5,294.9L257.1,290.7M258.9,290.5L337.2,282.2M345.0,281.4L405.1,275.1M407.8,274.8L498.8,265.3M-112.7,339.9L-58.3,334.2M-54.7,333.8L18.4,326.2M22.9,325.7L75.2,320.2M78.5,319.8L124.1,315.0M205.0,306.5L271.2,299.6M277.3,298.9L360.1,290.2M362.0,290.0L396.3,286.4M398.2,286.2L487.3,276.9M494.6,276.1L581.9,266.9M-54.9,346.2L20.2,338.3M20.7,338.3L54.6,334.7M166.5,322.9L220.7,317.2M223.1,317.0L275.8,311.4M276.6,311.4L325.5,306.2M370.1,301.5L396.1,298.8M398.3,298.6L439.6,294.2M441.5,294.0L479.2,290.1M485.6,289.4L575.5,280.0M-110.3,363.5L-64.3,358.6M-60.3,358.2L-26.7,354.7M-23.5,354.3L74.9,344.0M75.1,344.0L142.9,336.8M150.0,336.1L222.8,328.4M225.3,328.2L270.9,323.4M337.6,316.4L392.6,310.6M394.1,310.4L446.8,304.9M448.5,304.7L476.3,301.8M-109.1,374.5L-58.4,369.2M-56.0,368.9L-14.2,364.5M-12.5,364.3L50.9,357.7M53.0,357.5L78.1,354.8M78.9,354.7L154.4,346.8M239.7,337.8L269.6,334.7M272.0,334.4L348.2,326.4M355.0,325.7L422.4,318.6M425.3,318.3L462.8,314.4M463.3,314.3L540.0,306.3M547.1,305.5L581.4,301.9M232.9,348.9L284.9,343.5M289.6,343.0L376.8,333.8M408.6,330.5L442.5,326.9M448.4,326.3L475.5,323.4M-106.9,395.1L-28.6,386.8M-25.5,386.5L29.2,380.7M34.5,380.2L129.3,370.2M134.3,369.7L232.4,359.4M233.2,359.3L271.4,355.3M277.9,354.6L303.2,351.9M308.6,351.4L354.3,346.6M360.7,345.9L459.9,335.5M466.6,334.8L509.2,330.3M511.1,330.1L544.2,326.6M-105.7,407.1L-77.0,404.1M-70.2,403.4L-2.1,396.2M77.7,387.8L174.3,377.7M174.3,377.7L215.3,373.3M220.1,372.8L299.5,364.5M383.9,355.6L420.6,351.8M424.7,351.3L468.7,346.7M-104.4,418.9L-65.4,414.8M-58.7,414.1L-19.4,410.0M-16.5,409.7L55.9,402.1M63.5,401.3L135.6,393.7M136.3,393.6L182.3,388.8M263.9,380.2L317.7,374.5M325.1,373.8L407.2,365.1M408.9,365.0L434.2,362.3M440.7,361.6L537.6,351.4M538.4,351.3L566.3,348.4M-103.1,431.2L-52.9,425.9M-47.2,425.3L30.2,417.1M37.6,416.4L119.9,407.7M124.2,407.3L220.2,397.2M228.0,396.4L260.5,392.9M260.8,392.9L289.4,389.9M295.4,389.3L326.8,386.0M333.3,385.3L393.5,379.0M401.2,378.2L451.3,372.9M457.7,372.2L541.5,363.4M546.8,362.9L599.5,357.3M-101.8,443.9L-71.0,440.6M-65.2,440.0L34.0,429.6M72.0,425.6L162.6,416.1M169.4,415.3L235.4,408.4M237.3,408.2L308.3,400.7M503.1,380.3L570.0,373.2M-35.5,450.0L10.7,445.2M15.9,444.6L79.5,437.9M79.8,437.9L121.5,433.5M125.6,433.1L224.5,422.7M226.2,422.5L261.4,418.8M269.3,418.0L360.2,408.4M368.2,407.6L449.0,399.1M451.0,398.9L515.1,392.2M521.8,391.5L574.7,385.9M-99.1,469.2L-3.8,459.2M3.5,458.5L85.0,449.9M88.9,449.5L125.6,445.6M131.8,445.0L161.2,441.9M167.5,441.2L262.3,431.3M265.4,430.9L333.6,423.8M334.1,423.7L392.1,417.6M396.0,417.2L478.5,408.5M480.1,408.4L541.2,401.9M541.5,401.9L640.9,391.5M-97.8,482.2L-33.5,475.5M-33.0,475.4L10.9,470.8M85.5,463.0L156.0,455.6M163.1,454.8L257.8,444.9M262.8,444.3L302.1,440.2M309.2,439.5L385.1,431.5M391.0,430.9L425.4,427.2M429.6,426.8L520.9,417.2M528.7,416.4L566.2,412.4M-96.6,493.3L1.4,483.0M92.8,473.4L130.1,469.5M137.0,468.8L208.4,461.3M208.8,461.2L306.1,451.0M310.3,450.6L375.5,443.7M378.0,443.4L404.2,440.7M410.8,440.0L452.8,435.6M452.8,435.6L507.0,429.9M509.5,429.6L598.9,420.2M-95.6,503.2L-61.6,499.6M-54.8,498.9L24.8,490.5M32.6,489.7L72.0,485.6M75.7,485.2L174.7,474.8M178.2,474.4L258.4,466.0M362.2,455.1L422.8,448.7M426.4,448.3L470.2,443.7M470.3,443.7L507.2,439.8M510.4,439.5L539.7,436.4M544.9,435.9L570.0,433.2M-94.4,514.0L-38.4,508.2M-32.5,507.5L16.2,502.4M21.3,501.9L106.8,492.9M111.9,492.4L156.0,487.7M162.3,487.1L235.4,479.4M236.2,479.3L328.8,469.6M330.9,469.3L379.5,464.2M381.2,464.1L410.5,461.0M418.1,460.2L454.5,456.4M550.7,446.2L587.1,442.4M-93.4,524.4L-13.4,516.0M-11.0,515.7L79.7,506.2M183.1,495.3L224.7,491.0M225.4,490.9L303.3,482.7M306.6,482.4L332.5,479.6M390.4,473.5L447.8,467.5M448.2,467.5L495.1,462.5M502.2,461.8L576.4,454.0M-92.2,535.6L-8.4,526.8M-6.6,526.6L64.3,519.1M186.8,506.3L254.4,499.2M261.2,498.4L345.3,489.6M350.6,489.0L427.3,481.0M429.4,480.8L488.4,474.6M495.4,473.8L532.8,469.9M540.5,469.1L580.1,464.9M-91.1,546.0L2.6,536.2M6.9,535.7L95.2,526.4M100.6,525.9L145.8,521.1M147.9,520.9L227.8,512.5M231.0,512.2L285.1,506.5M288.4,506.1L339.4,500.8M345.6,500.1L440.2,490.2M444.9,489.7L496.3,484.3M498.1,484.1L593.9,474.0M-90.0,556.0L-63.9,553.3M-56.1,552.5L-27.2,549.4M-21.7,548.9L16.0,544.9M18.0,544.7L43.1,542.1M47.4,541.6L91.0,537.0M94.9,536.6L191.7,526.4M198.2,525.8L287.0,516.4M294.5,515.6L359.2,508.8M363.2,508.4L427.3,501.7M433.2,501.1L464.4,497.8M469.7,497.2L523.8,491.5M529.5,490.9L589.9,484.6M-89.0,566.1L-52.3,562.2M-52.1,562.2L-5.5,557.3M-1.4,556.8L53.4,551.1M53.8,551.1L103.0,545.9M105.6,545.6L176.9,538.1M249.6,530.5L280.4,527.2M284.4,526.8L319.3,523.1M321.7,522.9L403.7,514.3M511.2,503.0L586.7,495.0M-87.9,576.1L-51.5,572.3M-44.9,571.6L15.7,565.2M20.0,564.8L102.6,556.1M104.6,555.9L199.6,545.9M201.5,545.7L264.4,539.1M265.5,539.0L310.8,534.2M312.1,534.1L339.2,531.2M340.2,531.1L384.3,526.5M384.6,526.5L458.6,518.7M465.4,518.0L494.2,514.9M497.8,514.6L591.4,504.7M-86.8,586.6L10.7,576.3M16.5,575.7L93.9,567.6M94.4,567.5L179.0,558.6M184.1,558.1L277.4,548.3M278.0,548.2L371.1,538.4M372.7,538.3L458.5,529.3M459.9,529.1L526.3,522.1M527.7,522.0L622.7,512.0M500.7,-137.7L503.6,-109.6M503.9,-107.6L511.4,-36.1M511.6,-34.2L521.5,59.8M521.9,64.0L530.0,141.4M530.4,145.1L538.4,221.1M538.8,225.2L542.6,261.4M557.4,401.7L565.7,480.7M490.1,-136.6L497.8,-62.6M498.5,-56.3L506.4,19.1M506.6,21.1L516.2,112.4M516.4,114.2L526.0,205.5M526.0,205.8L535.3,293.4M535.7,297.7L542.4,361.6M550.0,433.6L554.0,471.6M554.4,475.8L558.6,515.7M481.8,-83.2L488.6,-18.5M488.9,-15.9L499.3,83.5M499.4,84.0L508.5,171.4M519.4,274.5L525.3,331.2M525.6,333.7L533.0,403.6M540.6,476.1L545.6,523.6M463.8,-133.8L470.9,-66.1M471.6,-59.2L475.4,-23.4M475.4,-22.6L484.9,67.7M485.5,73.0L493.1,145.6M493.2,146.8L500.3,214.0M500.8,218.9L505.0,258.9M505.6,264.3L515.4,357.8M515.9,362.5L526.0,458.3M526.7,465.3L535.4,548.2M455.8,-86.3L462.3,-24.2M463.1,-16.6L467.3,23.0M467.7,26.9L472.4,71.6M472.5,72.6L482.5,168.1M483.0,172.8L488.9,229.3M489.7,236.7L493.9,276.8M494.1,278.7L498.4,319.1M498.9,323.6L506.8,399.0M507.0,401.4L514.2,469.8M514.7,474.3L525.0,572.7M438.3,-131.1L443.2,-84.1M443.7,-80.1L449.0,-29.6M449.2,-27.5L452.2,0.9M458.7,63.4L463.1,105.0M463.2,105.7L469.9,169.2M469.9,169.5L479.5,260.9M480.1,266.5L488.3,345.0M488.7,348.2L496.8,425.6M504.7,500.2L508.7,538.3M425.0,-129.7L430.9,-74.2M431.1,-71.7L434.5,-39.9M434.8,-36.3L442.8,39.3M443.4,44.9L451.8,125.1M452.1,128.2L457.4,178.8M457.9,183.0L460.8,210.9M460.9,211.9L469.1,289.4M477.0,365.1L486.9,459.2M487.6,465.8L495.2,538.2M413.8,-128.6L423.5,-35.8M424.3,-28.3L428.6,12.5M428.7,13.3L435.5,78.3M440.7,127.7L445.6,174.0M445.6,174.2L448.3,200.1M464.3,351.8L471.9,424.6M472.3,428.6L480.2,503.7M480.7,508.1L488.7,584.1M400.5,-127.2L405.0,-83.5M405.6,-78.6L415.8,18.7M416.4,24.8L419.4,52.6M419.6,55.3L429.3,147.0M429.5,149.2L434.9,201.0M435.2,203.0L440.5,254.1M440.9,258.0L446.3,309.2M446.7,312.4L455.9,400.0M462.0,458.3L464.6,483.4M464.9,485.8L472.9,561.6M389.6,-126.0L392.9,-94.7M393.0,-94.0L395.8,-67.8M396.2,-63.7L403.3,3.6M404.0,10.4L413.9,105.0M414.0,105.5L418.1,144.7M418.3,146.6L428.7,245.4M429.0,248.4L435.0,305.2M435.0,305.6L442.5,377.2M442.7,378.9L446.7,416.6M447.1,420.5L455.5,500.7M455.9,504.7L461.8,560.4M389.0,-24.8L393.6,18.5M393.9,21.1L399.9,78.1M400.2,81.1L410.5,179.3M431.8,382.4L440.3,463.1M441.1,470.4L446.5,521.9M447.0,526.2L452.6,579.9M375.1,-31.6L378.1,-3.0M378.4,-0.5L384.4,56.7M384.6,58.8L393.3,141.2M393.8,146.1L403.1,234.5M403.3,237.1L406.3,265.3M406.9,271.2L415.6,353.5M420.2,397.4L426.9,461.5M427.7,468.5L433.1,519.9M351.9,-122.1L355.0,-92.7M355.1,-92.3L364.7,-0.7M367.9,29.7L372.6,74.9M373.2,80.3L376.5,111.2M377.2,118.6L386.4,205.4M394.4,281.7L401.6,350.7M402.4,357.8L408.9,420.0M409.3,423.7L414.3,470.9M415.1,478.7L418.0,506.5M418.2,507.9L426.3,585.2M338.2,-120.6L348.6,-21.9M348.8,-20.1L354.0,29.5M358.8,75.8L362.0,106.1M362.3,108.5L371.9,200.0M372.0,201.0L376.8,247.1M384.0,315.2L388.8,360.8M389.5,367.8L399.4,461.4M400.0,467.4L403.9,504.5M404.1,506.9L411.5,576.6M326.6,-119.4L335.5,-34.6M336.2,-28.1L344.3,48.7M344.8,53.8L349.0,93.6M349.3,96.8L354.8,148.5M376.2,352.5L384.1,427.4M384.5,431.9L388.2,466.6M388.8,472.8L392.7,509.3M315.4,-118.2L320.4,-70.2M321.0,-65.2L329.7,17.8M329.7,18.0L337.4,91.2M337.7,94.0L345.7,170.3M345.8,171.4L353.6,245.0M353.7,246.3L358.0,287.3M358.0,287.5L364.3,347.5M364.8,351.6L370.0,401.8M374.2,440.9L384.5,539.0M304.4,-117.1L312.5,-40.2M312.6,-39.4L320.1,32.1M333.2,157.3L340.6,227.7M341.2,233.3L350.9,325.5M351.4,330.0L357.6,388.8M357.9,392.2L363.8,448.2M364.5,454.8L370.7,513.6M371.0,516.4L380.0,602.0M290.8,-115.6L294.0,-85.1M294.1,-84.3L299.8,-29.3M309.6,63.3L315.9,123.5M316.2,126.0L325.2,212.2M325.8,218.2L330.6,263.4M330.9,266.3L340.9,361.2M341.3,365.5L348.5,433.7M356.5,510.1L362.4,566.0M277.3,-114.2L287.2,-19.8M306.9,167.3L316.3,256.4M317.0,263.0L321.2,303.3M321.7,307.7L326.9,357.6M342.2,503.3L352.0,596.5M263.0,-112.7L268.3,-63.0M268.9,-57.0L278.8,36.8M279.1,39.9L282.7,74.0M290.7,150.2L301.0,248.6M301.1,249.2L306.5,301.1M306.9,304.6L310.1,335.4M310.7,340.8L319.5,424.5M320.3,431.6L326.0,486.3M326.4,490.5L335.7,578.4M252.2,-111.6L257.1,-64.9M257.9,-57.4L264.3,3.5M264.9,9.3L275.3,107.9M275.7,111.8L283.6,187.0M284.4,194.5L292.6,272.2M292.7,273.0L298.0,324.0M305.0,390.9L315.1,486.4M315.8,493.6L326.2,592.1M239.9,-110.3L244.5,-66.6M244.6,-65.3L253.4,18.4M254.1,24.8L264.3,121.6M264.7,125.8L269.9,174.8M269.9,175.4L280.4,274.8M280.4,275.3L283.6,305.1M284.2,311.0L293.5,399.5M294.2,406.8L304.7,506.0M304.7,506.2L315.0,603.9M228.0,-109.0L236.7,-26.3M236.8,-25.4L241.4,18.1M241.7,21.1L251.1,110.8M251.8,117.6L256.3,160.7M262.8,221.8L272.3,312.0M272.6,315.8L275.6,344.3M276.2,349.7L284.0,423.4M284.4,427.3L291.7,497.5M291.8,497.7L300.5,580.6M215.9,-107.8L222.6,-44.0M223.2,-37.9L226.1,-10.2M232.2,47.7L240.6,127.6M241.2,133.2L247.0,188.2M247.2,189.9L250.6,222.4M250.8,224.6L256.9,282.5M257.7,289.6L264.9,358.8M265.6,365.1L269.8,405.2M270.5,411.7L279.5,497.9M280.0,502.5L290.2,599.6M204.2,-106.5L209.1,-59.7M209.6,-54.6L219.3,37.7M219.7,41.4L229.1,130.3M229.2,131.3L235.1,187.4M235.1,187.5L240.0,234.5M240.3,237.4L249.8,327.5M250.3,332.4L260.8,431.8M261.2,435.6L269.6,515.7M269.8,517.6L276.3,580.1M190.6,-105.1L196.1,-52.9M196.2,-52.3L202.3,5.9M202.4,7.5L207.8,58.3M208.1,61.4L218.0,155.8M222.8,200.9L232.5,293.4M232.6,294.2L239.1,356.0M239.7,361.7L243.4,397.5M244.0,402.9L248.0,441.0M248.7,447.9L259.0,545.8M179.1,-103.9L186.6,-32.8M187.2,-26.9L196.3,59.8M197.0,66.5L204.9,141.4M205.6,148.3L213.3,221.2M247.2,543.8L257.4,640.6M164.9,-102.4L173.6,-20.1M173.8,-18.3L182.7,67.0M182.9,68.2L192.5,160.1M192.5,160.4L198.1,213.4M198.9,220.5L204.1,270.0M204.8,277.3L207.9,306.4M208.5,312.2L218.3,405.1M219.0,412.5L226.6,483.9M226.7,485.0L235.3,566.9M153.9,-101.2L158.3,-59.3M158.4,-58.4L162.5,-19.1M163.1,-12.9L172.3,73.8M172.8,78.7L176.8,116.6M177.4,123.1L184.7,192.1M184.7,192.6L187.7,220.4M194.5,285.7L199.2,330.4M199.9,337.1L207.6,410.1M207.8,412.1L211.4,446.6M211.9,450.8L220.1,529.2M220.5,532.8L224.5,571.2M142.2,-100.0L146.1,-62.8M146.1,-62.8L156.2,33.3M156.6,36.8L165.7,123.4M166.5,131.1L170.7,170.9M171.2,175.4L177.8,238.3M178.2,242.6L188.6,341.1M189.1,346.0L198.9,439.6M199.0,440.0L203.3,481.5M203.9,486.3L213.1,574.2M129.3,-98.6L136.1,-33.9M136.6,-29.5L140.5,8.1M141.0,12.4L144.9,49.6M150.3,101.6L153.2,129.1M153.4,130.5L160.6,199.6M166.6,256.0L174.9,335.1M175.7,343.0L184.2,424.1M184.6,428.0L194.8,524.8M195.5,531.6L204.1,613.2M131.4,23.6L135.8,64.6M136.3,69.7L144.2,145.5M144.5,147.8L150.0,200.5M150.6,205.5L156.1,258.0M156.4,260.8L163.3,326.7M163.4,328.1L172.9,417.7M173.2,421.0L176.5,452.4M176.6,453.7L179.6,481.9M180.0,485.8L187.3,554.9M118.4,33.4L122.8,75.3M135.9,199.5L140.8,246.1M141.1,248.9L145.9,294.4M145.9,294.4L149.9,333.0M150.2,335.3L156.5,395.5M163.9,466.1L169.8,522.4M92.6,-94.8L95.9,-62.6M96.2,-60.5L103.8,11.8M104.0,13.9L114.2,111.3M115.0,118.6L123.3,198.2M123.7,201.3L130.3,264.3M130.8,268.7L140.8,363.9M140.8,364.0L150.2,453.9M151.0,461.6L159.7,544.2M160.1,547.9L163.8,583.5M86.2,-38.5L89.5,-7.2M98.3,76.5L108.4,172.2M108.5,173.5L117.0,254.2M117.7,260.4L120.9,291.7M121.1,293.0L125.6,336.2M133.9,414.9L143.2,503.7M143.5,506.2L150.3,571.0M69.6,-92.4L77.2,-20.3M77.7,-14.9L83.5,39.8M83.7,41.8L93.9,139.1M94.7,146.6L104.9,243.2M105.0,244.4L114.7,336.8M114.9,338.6L118.4,372.4M119.1,379.0L128.6,469.4M129.2,475.0L134.0,520.3M134.2,522.2L143.8,613.9M64.5,-35.9L72.0,35.7M78.8,100.9L86.0,168.8M86.6,174.7L90.3,210.2M90.9,215.7L93.9,244.1M94.5,250.1L103.4,334.3M103.6,336.2L113.9,434.4M114.5,440.5L123.0,520.9M57.2,7.6L66.6,96.7M67.0,100.9L73.1,158.3M73.3,160.5L77.7,202.7M77.8,203.2L82.4,247.3M82.8,251.3L86.7,288.1M87.0,290.5L90.7,326.6M91.4,332.4L96.1,377.2M96.3,379.6L102.3,436.4M102.4,437.9L107.9,490.1M114.4,551.9L121.9,622.8M34.2,-88.7L39.4,-40.0M40.0,-34.2L44.9,13.1M45.7,20.5L55.3,112.0M77.6,324.3L80.9,355.2M81.6,362.0L86.9,412.5M87.0,413.5L91.2,453.5M91.4,455.2L98.9,526.7M99.1,528.1L103.8,572.8M21.6,-87.3L28.5,-20.9M29.0,-17.1L35.1,41.6M35.5,45.5L38.6,74.9M38.9,77.4L49.1,174.5M63.4,310.9L69.5,368.6M70.2,375.6L73.0,402.5M73.1,403.2L81.6,484.1M82.4,491.6L87.3,538.4M88.1,546.0L94.3,604.3M9.3,-86.0L17.1,-11.8M17.5,-8.1L21.4,29.2M21.5,30.6L30.7,117.8M30.8,118.5L35.8,166.0M36.3,171.5L44.6,250.3M45.1,254.6L52.0,320.7M52.2,322.3L55.0,349.3M55.6,354.6L58.6,383.0M59.4,390.9L65.3,447.1M65.8,451.5L68.7,479.3M69.1,483.5L76.9,557.7M77.3,560.9L81.2,598.6M-4.1,-84.6L0.1,-45.3M0.8,-38.8L10.7,56.0M11.5,63.8L14.6,92.5M15.1,98.1L21.3,156.4M21.8,161.4L24.9,191.3M25.6,197.6L30.9,248.2M31.6,254.9L38.1,316.5M38.9,323.9L45.7,388.5M46.0,391.8L52.9,457.2M53.7,465.1L56.8,494.7M-17.7,-83.2L-12.3,-31.2M-11.9,-27.4L-9.2,-1.9M1.5,99.9L7.9,160.9M8.6,167.7L12.7,206.7M13.0,209.6L20.3,278.5M20.4,279.5L27.0,342.5M37.8,445.3L41.3,478.9M41.4,479.3L47.4,536.9M-29.1,-82.0L-22.7,-21.4M-22.7,-21.2L-19.6,8.5M-19.2,11.6L-14.5,56.4M-14.0,61.9L-9.4,105.1M-1.4,181.7L3.7,230.3M3.8,230.8L8.5,275.6M9.0,279.9L18.2,368.3M26.3,445.1L31.8,497.3M31.9,498.4L39.0,565.5M39.6,571.0L45.1,623.8M-41.5,-80.7L-34.1,-10.6M-33.8,-7.8L-23.9,86.9M-23.2,93.6L-16.8,153.8M-7.2,245.6L1.9,332.4M6.6,377.3L10.0,409.0M10.5,414.1L19.4,499.1M19.6,500.2L25.7,558.3M26.0,561.3L36.0,656.2M-47.4,-23.6L-44.3,5.6M-44.0,8.5L-38.1,65.0M-31.0,132.5L-28.0,160.8M-27.3,167.6L-17.4,261.8M-16.8,267.3L-12.0,313.0M-12.0,313.2L-2.2,407.0M7.2,496.2L13.1,551.8M13.7,557.8L17.5,593.7M-57.6,12.3L-48.0,103.4M-47.7,106.6L-42.8,153.4M-42.4,156.8L-37.1,207.8M-30.2,272.8L-26.8,305.3M-19.7,373.4L-15.8,410.4M-15.4,414.0L-7.4,489.9M-6.9,494.7L3.1,589.7M-78.8,-76.8L-75.8,-48.2M-75.1,-41.6L-68.0,25.6M-67.9,26.7L-58.9,112.8M-58.5,116.3L-54.4,154.9M-53.9,159.7L-43.7,257.2M-43.6,257.7L-35.2,337.7M-24.9,436.4L-17.3,508.6M-16.9,512.1L-8.4,592.7M-89.6,-75.6L-81.7,-1.1M-81.7,-0.5L-78.9,25.9M-78.6,29.1L-71.4,97.0M-71.4,97.6L-64.4,163.5M-64.2,165.6L-59.3,212.1M-58.7,218.4L-49.8,302.4M-49.4,306.5L-44.6,352.6M-44.0,358.1L-34.6,447.6M-33.7,455.5L-28.9,501.5M-22.5,562.0L-14.9,634.6M-103.4,-74.2L-99.9,-40.8M-99.7,-39.7L-96.0,-3.8M-95.5,0.5L-89.6,56.5M-70.4,239.4L-62.0,319.2M-61.5,324.3L-54.0,395.7M-53.8,397.0L-50.6,428.2M-44.6,485.4L-37.3,554.4M-37.1,556.4L-32.6,598.8M-112.6,-32.9L-103.9,50.1M-98.1,104.6L-94.0,144.4M-81.9,259.2L-76.8,307.3M-76.1,314.2L-67.3,397.7M-67.3,398.4L-58.1,485.5M-131.0,-71.3L-127.3,-36.3M-127.3,-36.3L-122.7,7.7M-122.5,9.7L-112.3,106.8M-111.5,113.9L-103.3,192.3M-102.8,197.0L-92.5,294.7M-81.3,401.5L-75.2,459.8M-74.4,466.6L-68.0,528.2M-68.0,528.2L-64.3,563.6M-63.7,569.2L-59.0,613.5M-133.2,32.3L-124.1,118.5M-119.5,162.5L-112.5,228.9M-95.9,386.8L-87.7,465.1M-87.3,468.8L-82.1,518.0M-81.3,525.8L-74.0,595.7" stroke="#fbfbfb" stroke-width="1.6" fill="none"/><path clip-path="url(#dD)" d="M9.8,-198.0L53.9,-181.9M57.3,-180.7L117.7,-158.7M120.0,-157.8L194.8,-130.6M201.5,-128.2L288.0,-96.7M295.4,-94.0L345.8,-75.7M352.5,-73.2L434.9,-43.2M478.7,-27.3L507.9,-16.7M557.1,1.3L622.2,25.0M5.2,-185.3L45.3,-170.7M77.6,-159.0L125.4,-141.6M129.0,-140.3L214.5,-109.1M220.7,-106.9L276.7,-86.5M278.2,-86.0L310.9,-74.1M312.6,-73.4L389.9,-45.3M392.6,-44.3L458.5,-20.3M459.3,-20.1L530.3,5.8M537.4,8.4L619.3,38.2M619.7,38.3L652.2,50.1M0.9,-173.5L60.8,-151.7M66.9,-149.5L154.6,-117.6M214.2,-95.9L276.3,-73.3M402.3,-27.4L464.7,-4.7M469.6,-2.9L494.3,6.1M587.8,40.1L656.2,65.0M-2.8,-163.3L59.6,-140.6M62.8,-139.5L147.7,-108.6M155.1,-105.9L236.9,-76.1M243.3,-73.8L335.2,-40.3M335.9,-40.0L387.3,-21.3M392.5,-19.5L472.5,9.7M473.3,10.0L517.4,26.0M518.3,26.3L601.8,56.7M606.6,58.5L698.3,91.8M-7.1,-151.6L37.7,-135.3M40.4,-134.3L89.7,-116.4M95.4,-114.3L183.1,-82.4M190.1,-79.8L271.4,-50.2M273.1,-49.6L314.7,-34.5M320.3,-32.4L389.5,-7.3M394.9,-5.3L485.5,27.7M486.4,28.0L545.0,49.3M76.0,-108.1L129.2,-88.7M129.9,-88.4L191.3,-66.1M196.7,-64.1L221.8,-55.0M226.0,-53.5L302.5,-25.6M360.0,-4.7L398.6,9.3M405.7,11.9L438.7,24.0M441.0,24.8L520.1,53.6M522.8,54.6L570.3,71.9M-15.4,-128.7L32.5,-111.2M34.8,-110.4L58.7,-101.7M62.3,-100.4L98.3,-87.3M166.9,-62.3L213.6,-45.3M214.1,-45.2L283.1,-20.0M288.1,-18.2L361.0,8.3M398.0,21.8L491.7,55.9M557.5,79.8L603.8,96.7M604.5,96.9L649.2,113.2M-19.1,-118.8L57.6,-90.8M64.6,-88.3L130.4,-64.4M222.8,-30.7L260.1,-17.1M260.1,-17.1L334.5,9.9M337.2,10.9L411.8,38.0M416.2,39.7L490.9,66.9M554.0,89.8L634.4,119.1M-23.2,-107.3L67.8,-74.2M71.3,-72.9L124.3,-53.7M130.4,-51.4L195.1,-27.9M200.3,-26.0L234.3,-13.6M239.8,-11.6L281.9,3.7M353.3,29.7L432.7,58.6M433.7,59.0L516.8,89.2M-27.0,-96.8L54.2,-67.3M58.0,-65.9L140.1,-36.0M142.2,-35.2L171.1,-24.7M266.5,10.0L298.7,21.7M302.6,23.2L388.0,54.2M393.9,56.4L467.4,83.1M471.3,84.6L500.4,95.1M500.6,95.2L544.3,111.1M548.0,112.5L626.4,141.0M-0.9,-76.3L62.9,-53.0M69.7,-50.6L159.9,-17.7M162.5,-16.8L225.7,6.2M226.5,6.5L283.4,27.2M374.3,60.3L448.9,87.5M517.7,112.5L552.9,125.3M554.0,125.7L593.9,140.2M-34.4,-76.8L25.8,-54.8M116.4,-21.9L179.4,1.1M269.8,33.9L335.2,57.8M335.2,57.8L395.0,79.5M395.8,79.8L450.2,99.6M454.6,101.2L510.7,121.6M517.7,124.2L588.9,150.1M-38.0,-66.9L37.0,-39.6M43.7,-37.1L90.9,-20.0M93.5,-19.0L124.5,-7.7M174.8,10.6L228.4,30.1M234.2,32.2L260.7,41.8M342.1,71.5L416.0,98.4M417.2,98.8L450.5,110.9M450.8,111.0L493.4,126.5M500.8,129.2L546.4,145.8M549.0,146.8L619.5,172.4M-41.7,-56.5L1.5,-40.7M6.7,-38.9L76.1,-13.6M77.4,-13.1L118.9,2.0M119.7,2.3L159.5,16.8M165.7,19.0L230.1,42.5M232.0,43.1L263.7,54.7M268.0,56.3L353.7,87.4M357.5,88.8L410.0,107.9M410.0,107.9L476.4,132.1M480.8,133.7L524.1,149.4M526.4,150.3L558.0,161.8M562.1,163.3L651.4,195.8M17.7,-22.3L59.2,-7.1M114.7,13.0L198.8,43.7M199.6,44.0L236.6,57.4M241.7,59.3L291.7,77.5M295.2,78.7L329.0,91.0M335.7,93.5L363.6,103.7M366.8,104.8L395.8,115.3M465.2,140.6L544.8,169.6M-49.7,-34.7L-23.9,-25.3M75.6,10.9L112.3,24.2M114.8,25.1L142.7,35.3M145.7,36.4L238.9,70.3M241.3,71.2L292.9,90.0M395.0,127.1L430.0,139.9M432.6,140.8L459.9,150.8M466.8,153.2L523.7,174.0M-53.6,-23.8L19.6,2.8M19.9,2.9L87.0,27.3M87.5,27.5L166.8,56.4M169.4,57.3L204.4,70.1M206.1,70.7L298.0,104.2M416.3,147.2L441.2,156.3M441.6,156.4L477.6,169.5M482.8,171.4L515.1,183.2M-58.2,-11.1L-1.5,9.5M-0.5,9.9L60.7,32.2M61.9,32.6L151.2,65.1M157.5,67.4L190.3,79.3M190.4,79.4L278.4,111.4M280.1,112.1L305.2,121.2M306.2,121.5L352.9,138.5M355.0,139.3L384.6,150.1M455.0,175.7L543.2,207.8M-62.3,0.1L-28.5,12.4M-25.5,13.5L3.8,24.1M83.2,53.0L132.3,70.9M136.0,72.2L169.6,84.4M174.9,86.4L199.8,95.4M202.0,96.3L295.2,130.2M296.6,130.7L348.6,149.6M353.1,151.3L443.0,184.0M444.0,184.3L498.7,204.2M502.7,205.7L596.1,239.7M-66.6,12.0L8.3,39.3M9.7,39.8L51.9,55.1M57.5,57.2L92.5,69.9M93.1,70.1L117.1,78.9M206.0,111.2L268.1,133.8M269.7,134.4L319.6,152.6M326.8,155.2L353.0,164.7M455.7,202.1L548.4,235.9M549.8,236.3L604.2,256.2M-70.8,23.4L-0.2,49.1M6.9,51.7L55.5,69.4M59.2,70.7L123.5,94.2M215.0,127.4L248.2,139.5M254.3,141.8L314.8,163.8M316.7,164.5L344.5,174.6M348.6,176.1L425.6,204.1M430.3,205.8L476.2,222.5M482.9,224.9L570.8,256.9M-75.2,35.5L-48.8,45.1M-45.7,46.2L-10.1,59.2M54.8,82.8L134.2,111.7M141.2,114.3L229.0,146.2M234.6,148.2L272.8,162.2M273.1,162.3L345.8,188.7M349.9,190.2L406.6,210.9M521.5,252.7L560.9,267.0M-79.8,48.2L-45.7,60.7M-42.1,62.0L15.6,83.0M18.6,84.1L43.5,93.1M94.7,111.8L127.4,123.7M127.7,123.8L199.1,149.7M199.9,150.0L277.1,178.1M333.2,198.5L389.6,219.1M396.5,221.6L452.7,242.1M510.4,263.0L569.7,284.6M14.4,97.2L77.8,120.2M80.7,121.3L119.5,135.4M124.2,137.2L150.6,146.7M157.7,149.3L245.9,181.4M335.9,214.2L364.0,224.4M367.4,225.7L421.2,245.3M482.6,267.6L563.0,296.9M-88.6,72.2L-1.2,104.0M0.6,104.7L87.3,136.3M88.4,136.7L127.0,150.7M130.1,151.8L172.5,167.3M337.8,227.4L393.4,247.7M393.9,247.9L461.2,272.3M462.2,272.7L517.7,292.9M523.1,294.9L550.3,304.8M-93.1,84.7L-31.4,107.2M-24.5,109.7L55.1,138.7M99.7,154.9L126.7,164.7M129.2,165.6L175.4,182.4M256.2,211.8L324.1,236.6M330.2,238.8L415.3,269.8M415.9,270.0L492.5,297.9M-97.1,95.5L-51.6,112.1M-49.0,113.0L-9.5,127.4M65.5,154.7L96.4,165.9M101.6,167.8L180.9,196.7M184.7,198.1L270.4,229.3M271.5,229.7L308.6,243.2M314.4,245.3L398.2,275.8M400.8,276.7L439.6,290.8M446.2,293.2L476.8,304.4M482.5,306.5L517.5,319.2M-100.7,105.4L-34.5,129.5M-28.9,131.6L11.8,146.4M43.2,157.8L71.3,168.0M73.9,169.0L121.2,186.2M241.4,229.9L327.9,261.4M331.1,262.6L420.1,295.0M421.1,295.3L490.8,320.7M496.5,322.8L570.6,349.7M-15.9,148.8L7.7,157.4M14.9,160.0L67.8,179.2M182.5,221.0L268.9,252.4M271.3,253.3L354.6,283.6M359.9,285.5L433.5,312.3M434.1,312.6L502.5,337.5M507.8,339.4L545.9,353.3M-108.2,126.1L-65.5,141.7M-60.2,143.6L-30.3,154.5M42.9,181.1L66.6,189.7M71.2,191.4L97.1,200.9M141.1,216.9L219.8,245.5M227.3,248.2L313.3,279.5M318.2,281.3L392.3,308.3M438.2,325.0L529.9,358.4M-112.4,137.7L-25.3,169.4M54.0,198.3L101.0,215.3M102.7,216.0L128.3,225.3M215.3,257.0L246.8,268.4M247.5,268.7L341.1,302.8M343.0,303.4L377.2,315.9M383.8,318.3L427.0,334.0M432.9,336.2L470.7,349.9M-116.9,150.1L-82.4,162.7M-79.9,163.6L-39.3,178.3M-33.8,180.3L56.9,213.4M58.5,213.9L119.5,236.2M124.3,237.9L206.0,267.6M208.9,268.7L295.6,300.2M295.8,300.3L347.6,319.2M353.0,321.1L409.2,341.6M414.0,343.3L480.2,367.4M483.4,368.6L515.4,380.2M-121.5,162.6L-44.9,190.5M-39.7,192.4L5.9,209.0M8.6,210.0L84.2,237.5M86.4,238.3L174.3,270.3M181.8,273.0L237.8,293.4M275.8,307.2L334.9,328.7M338.8,330.2L372.7,342.5M374.2,343.0L451.4,371.1M452.8,371.7L515.7,394.5M-125.2,172.8L-62.2,195.7M-60.1,196.4L24.4,227.2M31.4,229.7L74.8,245.5M80.9,247.7L138.3,268.6M142.4,270.1L224.0,299.8M225.6,300.4L282.5,321.1M337.3,341.1L364.6,351.0M466.7,388.2L560.1,422.2M-86.1,198.2L-47.7,212.2M-41.7,214.4L3.3,230.7M6.4,231.9L73.3,256.2M78.7,258.2L122.6,274.2M127.1,275.8L181.9,295.7M183.4,296.3L264.4,325.8M325.2,347.9L411.0,379.1M417.2,381.4L444.7,391.4M447.8,392.5L484.9,406.0M-132.8,193.8L-78.5,213.5M-73.2,215.5L-32.8,230.2M-32.3,230.4L1.0,242.5M60.5,264.1L144.9,294.9M148.0,296.0L204.2,316.4M207.4,317.6L287.1,346.6M338.4,365.3L371.6,377.4M372.1,377.6L441.7,402.9M444.1,403.8L511.3,428.2M-49.5,235.1L-14.2,247.9M85.1,284.1L176.9,317.5M179.7,318.5L267.1,350.4M348.6,380.0L432.8,410.7M435.0,411.5L518.7,441.9M-68.9,241.0L5.0,267.9M10.6,270.0L81.7,295.8M83.8,296.6L141.2,317.5M148.5,320.1L195.9,337.4M202.2,339.7L292.9,372.7M298.6,374.8L330.6,386.4M410.3,415.4L482.7,441.8M-64.1,255.1L-19.2,271.4M-15.7,272.7L14.2,283.6M17.1,284.7L99.9,314.8M107.4,317.5L136.5,328.1M143.8,330.8L232.9,363.2M235.4,364.1L302.0,388.3M306.4,390.0L390.0,420.4M394.1,421.9L447.0,441.1M451.6,442.8L533.6,472.7M-117.6,249.3L-77.6,263.9M7.5,294.8L52.3,311.1M54.4,311.9L118.5,335.3M125.5,337.8L163.3,351.5M166.1,352.6L204.8,366.6M206.6,367.3L297.1,400.2M303.0,402.4L379.7,430.3M383.2,431.6L419.8,444.9M422.3,445.8L474.9,465.0M-153.3,250.1L-64.7,282.3M-58.7,284.5L26.5,315.5M32.1,317.6L62.7,328.7M121.1,350.0L208.8,381.9M211.2,382.8L247.6,396.0M252.2,397.7L344.4,431.2M349.9,433.2L421.5,459.3M423.3,460.0L497.1,486.8M-129.4,270.1L-54.2,297.5M78.1,345.6L169.0,378.8M173.9,380.5L213.3,394.9M215.2,395.6L306.7,428.9M307.4,429.1L337.6,440.1M338.0,440.3L430.0,473.8M434.1,475.2L522.5,507.4M-122.6,285.9L-54.7,310.6M-54.3,310.8L-20.0,323.3M74.4,357.6L114.3,372.1M249.6,421.4L273.1,429.9M280.2,432.5L339.6,454.1M344.9,456.1L386.7,471.3M448.8,493.9L503.9,513.9M-165.0,282.3L-100.0,305.9M-98.9,306.3L-43.1,326.7M-38.9,328.2L45.2,358.8M45.4,358.9L92.2,375.9M96.3,377.4L127.8,388.9M127.9,388.9L206.8,417.6M283.2,445.4L319.6,458.7M322.9,459.9L360.0,473.4M366.2,475.6L406.6,490.3M409.8,491.5L469.4,513.2M-134.9,304.9L-87.1,322.3M-80.9,324.5L-33.4,341.8M-29.2,343.3L3.1,355.1M9.9,357.5L85.7,385.2M90.0,386.7L129.5,401.1M133.4,402.5L168.9,415.4M235.9,439.8L273.4,453.5M275.7,454.3L362.5,485.9M367.5,487.7L425.7,508.9M-130.4,321.1L-89.0,336.2M-85.5,337.5L-44.2,352.5M-42.0,353.3L-3.2,367.4M2.2,369.4L68.7,393.6M71.0,394.4L150.1,423.2M224.0,450.1L268.0,466.1M270.1,466.9L353.5,497.2M359.3,499.3L400.5,514.3M403.9,515.6L446.1,530.9M-177.2,315.9L-121.9,336.0M-118.7,337.2L-57.3,359.5M-53.2,361.0L20.7,387.9M69.2,405.6L97.2,415.7M100.9,417.1L164.9,440.4M172.0,443.0L236.5,466.5M241.3,468.2L303.6,490.9M345.8,506.2L420.6,533.5M423.1,534.4L446.7,543.0M-181.2,326.8L-88.6,360.5M-82.9,362.6L-17.7,386.3M-14.6,387.4L59.3,414.3M159.0,450.6L188.1,461.2M259.2,487.1L296.4,500.6M299.7,501.8L332.6,513.8M-185.7,339.0L-129.4,359.5M-124.5,361.3L-64.0,383.3M-63.6,383.4L27.0,416.4M97.6,442.1L158.1,464.1M308.1,518.7L372.0,542.0M379.3,544.6L410.3,555.9M415.0,557.6L470.4,577.8M-190.1,351.1L-147.5,366.6M-144.4,367.7L-102.5,382.9M-98.1,384.6L-58.1,399.1M26.7,430.0L83.4,450.6M85.2,451.3L129.9,467.6M136.9,470.1L175.5,484.1M179.3,485.5L250.0,511.3M254.1,512.8L282.8,523.2M289.0,525.5L328.5,539.8M331.6,541.0L373.7,556.3M380.9,558.9L425.6,575.2M-193.7,361.1L-146.0,378.4M-144.3,379.0L-59.6,409.9M-55.4,411.4L36.4,444.8M37.9,445.4L114.3,473.2M120.4,475.4L170.5,493.6M176.5,495.8L253.6,523.9M255.3,524.5L344.4,556.9M-197.5,371.4L-119.4,399.8M-113.9,401.8L-51.3,424.6M-47.4,426.0L17.4,449.6M18.2,449.9L42.5,458.8M46.5,460.2L106.8,482.1M113.7,484.7L160.1,501.5M203.6,517.4L252.1,535.1M253.6,535.6L294.1,550.3M297.2,551.4L380.0,581.6M381.2,582.0L433.3,601.0M-201.2,381.8L-134.5,406.1M-128.8,408.1L-94.5,420.6M-94.1,420.8L-69.1,429.9M-63.4,432.0L-29.7,444.2M-23.4,446.5L24.2,463.8M29.6,465.8L112.8,496.1M257.6,548.8L307.4,566.9M312.6,568.8L389.3,596.7M392.6,597.9L443.3,616.4M-205.5,393.4L-174.1,404.8M-168.0,407.0L-134.1,419.3M-129.0,421.2L-98.0,432.5M-91.8,434.8L-66.6,443.9M-21.0,460.5L71.3,494.1M110.4,508.3L178.8,533.2M277.1,569.0L339.3,591.6M342.1,592.7L387.5,609.2M391.9,610.8L474.7,640.9M-209.4,404.2L-184.2,413.3M-178.8,415.3L-149.4,426.0M23.5,488.9L64.8,504.0M65.0,504.0L94.5,514.8M94.8,514.9L152.5,535.9M154.8,536.7L230.8,564.4M232.0,564.8L273.7,580.0M278.9,581.9L323.2,598.0M324.0,598.3L360.5,611.6M366.8,613.9L411.1,630.0M-213.6,415.7L-179.5,428.1M-127.0,447.3L-100.1,457.0M-94.0,459.3L-43.2,477.8M-41.1,478.5L16.0,499.3M63.8,516.7L106.9,532.4M113.2,534.7L156.7,550.5M163.4,552.9L237.3,579.9M241.4,581.3L335.1,615.5M630.0,27.8L619.2,57.3M618.0,60.6L588.6,141.3M586.8,146.5L564.0,209.0M561.9,214.8L532.4,295.8M531.2,299.2L508.2,362.2M507.7,363.8L479.6,441.0M456.3,504.9L429.9,577.4M427.5,584.0L403.1,651.1M616.9,23.0L583.9,113.8M583.0,116.2L563.2,170.6M561.6,175.2L535.3,247.4M532.6,254.8L507.9,322.8M507.8,322.9L493.5,362.2M445.0,495.6L420.8,562.0M420.2,563.6L406.5,601.1M404.3,607.2L389.4,648.1M604.5,18.5L593.7,48.0M579.3,87.5L560.3,139.9M560.1,140.4L538.7,199.0M538.3,200.1L519.6,251.5M518.0,256.0L489.6,334.0M464.0,404.4L446.3,453.0M444.0,459.3L433.9,487.0M418.9,528.3L395.8,591.8M395.3,593.1L380.6,633.4M590.3,13.3L574.5,56.6M573.3,59.9L540.9,149.1M538.4,155.9L506.7,243.1M504.9,248.0L479.7,317.1M477.1,324.3L462.6,364.1M426.5,463.5L417.3,488.6M415.4,493.8L400.9,533.7M399.6,537.2L369.2,620.8M366.5,628.2L341.0,698.1M576.7,8.4L556.6,63.8M509.4,193.4L480.6,272.4M479.7,274.9L447.8,362.5M445.2,369.7L417.6,445.5M415.9,450.4L406.7,475.7M404.6,481.3L392.0,516.0M390.4,520.3L356.5,613.5M354.4,619.2L342.3,652.4M565.4,4.3L554.8,33.3M552.3,40.2L538.7,77.5M538.7,77.6L518.0,134.3M516.4,138.7L489.4,212.9M487.6,218.0L468.1,271.5M441.9,343.6L410.0,431.1M380.7,511.6L349.2,598.3M347.6,602.4L318.1,683.7M554.1,0.1L525.4,78.8M524.7,80.7L515.7,105.6M515.4,106.4L482.0,198.3M453.8,275.7L441.6,309.1M439.7,314.5L423.7,358.3M421.2,365.2L406.1,406.6M405.6,407.9L392.0,445.6M390.4,449.8L361.3,529.7M333.3,606.6L319.1,645.8M540.5,-4.8L508.1,84.5M506.4,89.1L475.6,173.5M473.4,179.6L454.9,230.7M452.2,237.8L435.5,283.8M434.8,285.7L423.2,317.6M422.0,321.0L400.9,378.8M398.8,384.8L367.6,470.3M365.9,474.9L356.7,500.2M355.2,504.5L336.9,554.8M529.2,-8.9L512.6,36.6M512.2,37.6L483.1,117.5M482.2,120.1L453.3,199.5M453.2,199.6L424.1,279.6M421.6,286.5L405.4,331.0M403.1,337.4L383.5,391.3M381.4,397.0L348.3,487.9M347.8,489.3L326.0,549.3M323.8,555.4L293.6,638.4M516.3,-13.6L486.0,69.8M483.3,77.2L450.3,167.9M434.4,211.7L406.5,288.3M405.6,290.6L372.1,382.7M344.3,459.1L331.7,493.7M331.0,495.5L297.6,587.4M296.8,589.6L277.7,642.0M503.2,-18.4L480.1,45.2M479.3,47.4L462.0,94.9M430.9,180.4L411.1,234.8M392.7,285.3L363.7,365.0M361.9,369.9L343.6,420.1M341.7,425.3L314.2,501.1M312.6,505.3L286.1,578.1M284.0,584.0L264.8,636.7M459.3,55.3L428.2,140.7M426.8,144.6L395.0,231.9M393.0,237.3L379.0,276.0M377.0,281.5L368.0,306.0M366.5,310.1L343.7,372.9M317.5,445.0L294.0,509.3M293.7,510.4L265.3,588.3M265.2,588.5L235.3,670.8M473.5,-29.2L445.8,47.1M421.1,114.8L411.6,141.0M409.7,146.1L397.6,179.4M396.9,181.2L380.8,225.7M380.1,227.4L353.5,300.6M352.9,302.3L339.5,339.1M306.8,428.9L280.9,500.1M279.1,505.1L246.3,595.0M460.6,-33.9L431.8,45.4M430.3,49.3L414.2,93.8M368.7,218.8L336.1,308.2M334.0,314.1L313.5,370.2M312.4,373.2L301.2,404.1M298.8,410.6L274.0,479.0M272.4,483.3L248.3,549.6M246.2,555.2L235.5,584.7M445.7,-39.3L424.2,19.8M422.1,25.3L407.9,64.4M394.6,100.9L374.8,155.5M373.0,160.4L350.6,221.9M349.3,225.6L327.1,286.4M291.4,384.4L267.8,449.3M265.9,454.6L237.2,533.6M236.7,534.8L202.7,628.2M432.1,-44.3L407.9,22.2M389.4,73.0L376.6,108.1M374.8,113.2L351.2,177.8M348.7,184.7L320.4,262.5M318.8,267.0L305.5,303.3M304.0,307.6L278.2,378.6M276.7,382.5L252.3,449.7M230.2,510.4L213.1,557.2M418.0,-49.4L406.6,-18.0M404.0,-11.0L376.0,66.0M374.4,70.3L363.7,99.9M361.7,105.3L337.8,170.8M335.7,176.7L306.3,257.4M304.3,263.0L279.4,331.4M249.6,413.4L219.4,496.2M404.6,-54.3L375.8,24.7M373.8,30.4L346.9,104.2M344.3,111.3L313.6,195.8M311.8,200.7L281.8,283.0M279.4,289.7L263.9,332.3M247.7,376.7L227.3,433.0M226.0,436.3L212.3,474.1M210.0,480.3L178.9,565.8M369.8,1.4L353.0,47.7M350.9,53.4L319.2,140.6M316.7,147.4L290.2,220.4M279.2,250.5L269.4,277.3M269.0,278.5L258.0,308.8M244.3,346.5L211.9,435.4M210.0,440.6L186.2,506.0M184.8,509.7L164.7,565.0M379.8,-63.3L361.0,-11.4M360.3,-9.6L336.7,55.2M317.6,107.7L295.8,167.5M293.8,173.1L266.4,248.4M265.0,252.3L255.6,278.0M253.3,284.3L220.1,375.5M218.9,378.9L207.4,410.5M206.7,412.3L190.3,457.5M189.1,460.8L170.5,511.9M365.9,-68.3L355.4,-39.3M353.2,-33.4L322.5,51.1M322.1,52.2L313.2,76.5M310.7,83.5L301.0,110.1M298.7,116.3L281.2,164.6M260.5,221.5L246.2,260.8M244.2,266.3L221.4,328.9M220.4,331.7L206.9,368.7M191.5,410.9L158.9,500.5M158.8,500.9L140.6,550.7M353.9,-72.7L333.5,-16.7M331.0,-9.8L298.9,78.3M296.7,84.5L266.5,167.5M265.4,170.3L235.6,252.3M234.3,255.9L216.2,305.5M214.1,311.3L182.4,398.6M179.9,405.4L168.2,437.4M132.5,535.6L122.8,562.2M338.9,-78.2L322.6,-33.4M321.3,-29.7L311.2,-2.2M308.8,4.6L281.4,80.0M279.9,84.0L255.9,149.9M255.1,152.0L223.8,238.1M222.1,242.8L206.8,284.7M205.7,287.9L187.9,336.8M121.8,518.4L108.2,555.6M286.5,24.3L265.6,81.7M264.6,84.5L244.5,139.7M232.5,172.8L202.2,255.9M200.9,259.7L177.8,323.1M176.7,326.0L146.6,408.7M145.5,411.8L128.7,458.0M128.3,459.0L110.1,509.1M310.9,-88.4L290.2,-31.5M288.8,-27.7L269.7,24.9M268.0,29.4L237.1,114.3M236.9,114.8L215.5,173.8M213.3,179.9L183.9,260.5M182.2,265.1L159.3,328.2M159.1,328.7L146.0,364.6M145.2,366.9L113.4,454.2M111.3,460.1L93.4,509.3M91.5,514.3L75.0,559.7M296.6,-93.6L271.5,-24.8M270.8,-22.7L254.2,22.7M253.6,24.5L242.2,56.0M239.6,62.9L206.4,154.2M205.9,155.5L196.5,181.4M195.3,184.8L161.4,277.9M126.4,374.0L108.6,422.8M87.0,482.1L69.3,530.8M283.8,-98.2L258.3,-28.1M258.0,-27.3L239.7,22.8M238.7,25.6L216.2,87.5M214.2,92.9L181.5,182.9M179.9,187.2L170.8,212.3M169.9,214.6L161.0,239.0M160.1,241.6L141.5,292.8M139.6,297.9L120.8,349.6M119.7,352.6L107.4,386.5M272.2,-102.5L256.6,-59.6M254.4,-53.6L220.5,39.5M199.6,96.9L179.2,153.1M153.3,224.1L137.3,268.1M137.1,268.8L127.2,295.9M125.2,301.5L114.3,331.4M112.1,337.3L85.0,411.8M83.2,416.7L65.2,466.4M64.0,469.5L32.0,557.4M259.9,-106.9L236.4,-42.2M233.7,-35.0L208.8,33.6M182.4,106.2L149.7,195.9M119.3,279.6L104.5,320.2M103.7,322.5L71.3,411.4M70.2,414.5L41.8,492.5M41.3,493.9L32.7,517.4M245.1,-112.3L225.0,-57.1M224.9,-56.8L213.0,-24.1M211.6,-20.3L183.2,57.6M180.5,65.0L171.8,89.0M171.4,90.2L145.7,160.8M145.2,162.1L116.0,242.4M115.9,242.6L97.4,293.3M95.1,299.7L71.2,365.3M70.9,366.3L58.2,401.0M56.7,405.2L31.0,476.0M29.5,479.9L10.2,532.9M231.4,-117.3L204.6,-43.6M202.9,-39.0L169.3,53.4M167.3,59.1L145.7,118.2M145.6,118.6L126.7,170.5M124.7,176.0L112.4,209.7M112.1,210.5L83.2,290.0M82.1,292.9L69.3,328.1M55.1,367.3L27.0,444.4M25.2,449.4L14.1,480.0M218.7,-121.9L209.6,-96.9M188.8,-39.9L164.3,27.5M162.4,32.8L153.8,56.4M151.8,61.8L131.4,118.0M128.8,125.1L110.9,174.3M110.4,175.5L92.6,224.5M91.3,228.0L73.2,277.7M71.3,283.1L41.2,365.8M38.6,372.9L19.6,425.1M18.0,429.4L-8.4,502.1M205.1,-126.9L191.9,-90.7M176.8,-49.3L162.1,-8.7M160.8,-5.3L138.0,57.5M135.3,65.0L106.1,145.1M103.7,151.8L79.7,217.5M79.0,219.6L49.7,300.1M49.5,300.5L29.2,356.4M27.0,362.3L12.9,401.0M11.3,405.6L1.6,432.1M1.0,433.8L-32.8,526.6M170.7,-68.9L136.7,24.5M135.2,28.6L116.3,80.8M86.2,163.4L76.2,190.9M75.0,194.3L41.2,286.9M39.2,292.4L6.5,382.3M4.9,386.9L-19.1,452.8M180.9,-135.7L158.1,-73.0M156.6,-69.0L138.0,-17.8M136.4,-13.3L113.6,49.2M84.0,130.6L57.2,204.2M55.8,208.0L30.8,276.7M28.6,282.6L-2.7,368.8M-5.2,375.7L-17.4,409.3M-17.9,410.4L-38.1,466.1M167.7,-140.5L146.6,-82.7M116.7,-0.5L85.0,86.7M83.5,90.7L53.6,172.9M51.0,179.9L17.9,271.0M17.5,272.1L-1.6,324.5M-3.2,329.0L-12.0,353.0M-12.6,354.7L-35.8,418.4M-37.0,421.8L-65.2,499.2M152.9,-145.9L120.1,-55.8M91.8,21.9L62.6,102.2M61.5,105.1L46.5,146.3M44.1,153.0L11.1,243.5M9.7,247.3L-0.5,275.5M-1.0,276.8L-25.2,343.2M-26.1,345.7L-37.5,377.1M-38.8,380.7L-56.8,430.1M-58.2,434.0L-72.4,473.1M120.7,-94.5L93.9,-20.9M93.3,-19.3L73.4,35.3M71.2,41.4L47.3,107.2M44.8,113.9L24.8,168.9M-3.6,246.8L-21.7,296.6M-40.4,348.1L-74.0,440.4M128.2,-154.9L94.7,-62.8M92.2,-56.0L62.7,25.0M62.1,26.6L40.5,86.2M37.9,93.2L4.7,184.4M-34.2,291.4L-46.6,325.4M-48.6,330.7L-78.6,413.4M115.1,-159.6L82.3,-69.5M80.8,-65.5L52.7,11.8M50.1,19.0L39.9,47.0M39.5,48.0L15.1,115.1M1.6,152.0L-30.5,240.3M-31.3,242.5L-61.5,325.6M-62.3,327.7L-79.6,375.1M-81.1,379.4L-109.7,457.9M-110.5,460.0L-127.7,507.5M100.9,-164.8L89.4,-133.2M88.1,-129.4L71.9,-85.1M71.4,-83.5L52.6,-31.9M51.0,-27.7L27.1,38.1M25.2,43.3L14.1,73.9M14.0,73.9L4.8,99.3M4.0,101.6L-29.8,194.3M-31.9,200.3L-47.4,242.7M-50.1,250.1L-81.4,336.2M-82.8,339.9L-113.0,423.1M-115.6,430.2L-129.6,468.6M65.6,-114.0L44.2,-55.3M42.7,-51.0L20.1,11.2M17.9,17.1L-8.9,90.7M-9.4,92.1L-29.7,147.9M-31.8,153.6L-40.5,177.6M-41.0,179.0L-66.4,248.8M-66.7,249.7L-91.6,318.0M-92.6,320.7L-124.6,408.7M-125.6,411.4L-155.8,494.3M72.3,-175.2L63.4,-150.7M2.6,16.4L-22.2,84.7M-51.2,164.2L-61.8,193.5M-63.6,198.3L-90.3,271.6M-123.7,363.4L-153.6,445.6M57.4,-180.6L25.0,-91.7M24.9,-91.4L12.6,-57.6M12.6,-57.4L-13.9,15.4M-15.6,20.1L-46.8,105.8M-47.2,106.8L-72.8,177.1M-73.4,178.8L-89.8,223.9M-92.4,231.1L-113.5,288.9M-115.7,295.0L-128.4,330.0M46.1,-184.7L33.4,-149.6M32.2,-146.4L4.0,-68.9M2.2,-64.1L-30.2,25.0M-46.9,70.9L-70.1,134.5M-71.3,138.0L-104.0,227.7M-106.2,233.9L-121.6,276.2M-122.5,278.5L-145.7,342.3M-146.4,344.4L-166.1,398.5M-166.7,400.1L-198.0,486.1M34.2,-189.1L22.4,-156.8M21.8,-155.1L-2.3,-88.9M-2.9,-87.1L-30.2,-12.2M-32.5,-6.0L-58.9,66.6M-60.1,70.0L-76.8,115.7M-77.9,118.8L-92.8,159.8M-93.4,161.4L-113.0,215.4M-115.1,221.0L-138.5,285.4M-138.9,286.4L-148.1,311.8M-150.3,317.7L-176.6,390.0M21.7,-193.6L-1.4,-130.2M-2.5,-127.0L-12.4,-100.0M-12.6,-99.2L-35.7,-35.9M-36.9,-32.7L-70.0,58.5M-72.5,65.2L-103.5,150.3M-106.0,157.3L-118.3,191.0M-118.7,192.1L-143.8,261.2M-169.3,331.3L-183.8,370.9" stroke="#fbfbfb" stroke-width="1.6" fill="none"/><path clip-path="url(#dE)" d="M86.2,-225.8L165.4,-180.1M165.9,-179.8L201.1,-159.4M207.0,-156.0L249.5,-131.5M256.0,-127.7L295.5,-105.0M299.1,-102.8L339.1,-79.8M345.2,-76.2L390.2,-50.3M390.3,-50.2L432.6,-25.8M433.7,-25.2L503.9,15.4M105.5,-203.8L127.7,-191.0M211.2,-142.8L262.9,-112.9M268.6,-109.6L295.6,-94.0M296.8,-93.3L366.1,-53.3M368.9,-51.7L406.7,-29.9M407.1,-29.7L444.0,-8.4M500.8,24.4L546.9,51.0M591.2,76.6L673.2,124.0M75.5,-207.2L144.8,-167.1M147.7,-165.4L186.7,-142.9M220.3,-123.5L271.2,-94.1M278.1,-90.2L343.1,-52.7M349.1,-49.1L396.2,-22.0M402.5,-18.3L465.6,18.1M466.5,18.6L491.1,32.8M569.8,78.2L628.7,112.3M630.0,113.0L686.6,145.7M70.2,-198.1L111.6,-174.3M346.5,-38.6L410.9,-1.4M416.5,1.8L466.0,30.4M467.6,31.3L499.8,49.8M527.3,65.8L596.8,105.9M597.9,106.5L675.7,151.4M65.3,-189.5L111.5,-162.8M194.1,-115.1L260.5,-76.8M263.1,-75.3L296.6,-55.9M298.7,-54.7L356.5,-21.4M361.6,-18.4L398.6,3.0M400.9,4.3L467.1,42.5M507.3,65.7L585.9,111.1M60.0,-180.3L124.7,-143.0M128.3,-140.9L156.5,-124.6M163.3,-120.7L216.5,-90.0M219.2,-88.4L261.8,-63.8M264.7,-62.1L312.6,-34.5M317.4,-31.7L345.4,-15.5M351.9,-11.8L413.9,24.0M420.2,27.6L494.7,70.6M498.0,72.6L542.3,98.1M54.9,-171.6L98.9,-146.2M103.1,-143.8L138.6,-123.3M142.3,-121.2L190.1,-93.6M302.9,-28.5L351.5,-0.4M352.4,0.1L420.1,39.2M472.3,69.4L555.4,117.3M48.7,-160.8L133.6,-111.8M139.0,-108.7L185.3,-82.0M252.2,-43.3L337.5,5.9M338.9,6.7L364.8,21.7M368.7,23.9L450.8,71.3M455.0,73.8L514.7,108.2M514.9,108.3L596.5,155.4M599.1,157.0L645.7,183.8M164.7,-81.4L214.1,-52.8M218.6,-50.2L250.2,-32.0M308.8,1.9L365.9,34.8M372.6,38.7L439.5,77.3M443.5,79.6L487.0,104.8M488.4,105.5L514.1,120.4M519.5,123.5L574.6,155.3M38.6,-143.3L63.2,-129.0M68.4,-126.1L148.3,-79.9M152.0,-77.8L188.2,-56.9M190.0,-55.8L244.5,-24.4M249.3,-21.6L316.6,17.2M354.0,38.8L437.7,87.1M503.1,125.0L553.5,154.0M556.6,155.8L634.8,201.0M32.4,-132.5L69.3,-111.2M156.2,-61.0L231.5,-17.6M236.8,-14.5L272.6,6.2M279.4,10.1L309.3,27.4M309.9,27.7L382.1,69.4M387.9,72.7L473.0,121.9M478.5,125.0L519.9,148.9M524.0,151.3L600.1,195.3M601.4,196.0L638.6,217.5M27.2,-123.6L71.3,-98.1M74.6,-96.3L112.0,-74.6M114.8,-73.0L162.7,-45.4M166.5,-43.2L247.5,3.6M251.8,6.1L318.6,44.6M321.6,46.4L379.8,79.9M385.8,83.4L409.8,97.2M412.6,98.9L485.2,140.8M573.6,191.8L617.9,217.4M70.3,-84.6L120.0,-55.9M122.0,-54.7L188.5,-16.3M194.4,-12.9L264.1,27.3M265.2,28.0L325.2,62.6M326.9,63.6L372.4,89.9M374.2,90.9L460.2,140.6M463.5,142.5L523.3,177.0M530.1,180.9L563.3,200.1M568.9,203.3L617.9,231.6M16.3,-104.7L39.3,-91.5M42.3,-89.8L113.5,-48.6M114.5,-48.1L178.8,-10.9M221.6,13.8L297.9,57.8M391.3,111.8L466.5,155.2M539.4,197.3L583.6,222.8M11.3,-96.0L53.6,-71.6M53.7,-71.5L108.7,-39.7M168.8,-5.0L255.2,44.9M261.2,48.3L299.3,70.3M385.0,119.8L468.8,168.1M5.4,-85.8L43.4,-63.9M44.2,-63.4L101.7,-30.2M108.5,-26.3L148.5,-3.2M234.2,46.3L256.7,59.3M317.0,94.1L371.2,125.4M371.8,125.8L426.0,157.0M430.7,159.7L456.3,174.6M516.1,209.1L565.8,237.7M568.0,239.0L606.6,261.3M-0.9,-75.0L54.4,-43.1M58.0,-41.0L142.6,7.8M146.7,10.2L204.1,43.3M210.6,47.1L280.6,87.5M281.5,88.0L317.0,108.5M317.9,109.0L373.3,141.0M378.0,143.7L431.9,174.9M434.0,176.1L482.1,203.9M486.1,206.2L568.5,253.7M50.7,-33.4L105.9,-1.5M110.6,1.1L179.7,41.0M185.5,44.4L245.4,79.0M247.4,80.1L284.8,101.7M286.7,102.8L316.0,119.7M320.2,122.2L388.3,161.5M393.0,164.2L419.9,179.7M423.4,181.7L471.9,209.7M553.5,256.9L607.8,288.2M15.7,-40.5L41.0,-25.9M44.0,-24.1L77.0,-5.1M77.3,-4.9L121.2,20.4M126.9,23.7L159.1,42.3M161.0,43.4L230.4,83.5M233.5,85.3L295.0,120.7M295.9,121.3L361.4,159.1M361.6,159.2L430.5,199.0M434.9,201.6L479.6,227.4M482.7,229.2L564.1,276.1M-16.4,-48.1L43.5,-13.5M133.5,38.4L185.5,68.4M187.2,69.4L267.5,115.8M269.8,117.1L346.5,161.4M349.9,163.3L398.2,191.2M399.8,192.2L439.0,214.8M441.9,216.5L510.8,256.3M512.8,257.4L553.8,281.0M-21.1,-40.0L55.6,4.3M62.3,8.1L86.4,22.1M152.3,60.1L233.8,107.2M235.9,108.3L315.9,154.6M320.7,157.3L375.2,188.8M379.9,191.5L455.0,234.9M497.8,259.5L556.9,293.7M-26.7,-30.2L27.1,0.9M27.7,1.2L68.5,24.8M71.0,26.2L140.0,66.0M145.8,69.4L207.8,105.2M353.0,189.0L428.1,232.4M483.8,264.6L550.1,302.8M-31.5,-21.8L52.6,26.7M54.1,27.6L133.6,73.5M134.1,73.8L181.6,101.2M188.1,105.0L216.0,121.1M220.6,123.8L280.5,158.3M283.2,159.9L330.0,186.9M330.1,186.9L382.8,217.4M387.7,220.2L449.4,255.9M451.7,257.2L495.1,282.2M497.3,283.5L561.2,320.4M-36.4,-13.4L24.2,21.6M28.6,24.1L61.5,43.1M63.8,44.4L97.5,63.9M100.0,65.3L159.8,99.8M160.6,100.3L238.1,145.1M241.0,146.7L264.1,160.1M266.8,161.7L327.0,196.4M329.7,197.9L379.5,226.7M465.3,276.3L527.2,312.0M-42.4,-3.0L-20.2,9.8M74.6,64.5L154.5,110.7M232.9,155.9L279.7,182.9M282.6,184.6L348.3,222.5M353.7,225.7L432.3,271.0M438.2,274.4L520.5,321.9M-47.4,5.7L38.0,55.0M39.3,55.8L123.3,104.3M126.0,105.8L162.2,126.7M163.3,127.3L215.3,157.4M215.9,157.7L251.3,178.2M257.4,181.7L332.7,225.2M384.3,254.9L434.6,284.0M435.9,284.8L480.2,310.3M86.5,97.6L135.4,125.8M188.0,156.2L268.9,202.9M494.0,332.9L579.7,382.3M-58.5,24.8L-2.7,57.0M2.8,60.2L85.6,108.0M121.1,128.5L193.2,170.1M199.9,174.0L256.4,206.6M257.7,207.3L298.8,231.1M358.8,265.7L385.9,281.4M388.5,282.9L440.2,312.7M490.7,341.9L547.5,374.7M-63.5,33.5L9.3,75.5M9.9,75.8L70.9,111.1M72.2,111.8L106.4,131.5M112.2,134.9L160.5,162.8M163.9,164.8L197.7,184.3M202.2,186.8L247.8,213.2M248.1,213.4L326.7,258.7M333.6,262.7L395.4,298.4M443.6,326.3L502.7,360.4M503.6,360.9L568.4,398.3M-68.6,42.4L12.5,89.2M16.3,91.4L99.6,139.6M105.5,142.9L166.6,178.2M213.2,205.1L262.3,233.5M267.7,236.6L335.3,275.7M340.9,278.8L413.2,320.6M420.0,324.6L464.4,350.1M-74.3,52.3L-40.0,72.1M-38.8,72.8L5.7,98.5M95.2,150.2L166.6,191.4M171.4,194.2L207.2,214.8M208.6,215.7L271.0,251.7M322.3,281.3L385.7,317.9M388.8,319.7L465.9,364.2M471.7,367.6L506.1,387.4M-79.4,61.0L-24.7,92.6M-22.5,93.9L21.6,119.3M24.7,121.1L92.6,160.3M96.0,162.3L155.6,196.7M211.4,228.9L265.6,260.2M266.7,260.8L329.7,297.2M372.2,321.7L403.7,339.9M406.0,341.2L489.4,389.4M-85.5,71.7L-4.9,118.2M1.3,121.8L68.2,160.4M72.9,163.2L155.0,210.6M242.0,260.8L315.1,303.0M320.7,306.2L406.6,355.8M409.9,357.7L494.7,406.7M-91.5,81.9L-52.1,104.7M-47.0,107.6L26.8,150.2M32.1,153.3L106.5,196.2M110.9,198.7L132.6,211.3M136.0,213.2L172.5,234.3M222.9,263.4L284.4,298.9M288.0,301.0L312.2,315.0M315.8,317.1L387.0,358.2M392.4,361.3L469.5,405.8M472.5,407.6L542.5,448.0M-96.9,91.3L-57.1,114.3M-57.0,114.3L22.1,160.0M82.1,194.6L109.2,210.3M111.2,211.4L187.5,255.5M219.6,274.0L272.1,304.3M276.0,306.6L311.0,326.8M312.3,327.5L375.0,363.8M380.5,366.9L421.6,390.7M453.7,409.2L540.2,459.1M-103.1,102.2L-43.4,136.7M-36.7,140.5L-12.8,154.4M-10.2,155.8L22.6,174.8M28.9,178.4L109.0,224.7M115.0,228.1L199.8,277.1M204.0,279.5L290.1,329.2M338.1,356.9L367.6,374.0M368.8,374.6L428.9,409.4M433.5,412.0L503.3,452.3M-108.4,111.2L-66.1,135.6M-64.9,136.3L5.5,177.0M5.6,177.1L46.3,200.5M46.5,200.7L85.6,223.2M173.7,274.1L206.6,293.1M208.8,294.4L287.5,339.8M289.4,340.9L319.5,358.3M320.3,358.7L402.4,406.2M402.9,406.4L484.5,453.5M-114.4,121.7L-29.8,170.6M-27.3,172.0L8.5,192.7M50.1,216.7L80.7,234.4M87.3,238.2L126.4,260.8M131.9,264.0L155.0,277.3M157.6,278.8L199.2,302.8M204.5,305.9L282.8,351.1M283.1,351.2L350.3,390.0M354.1,392.3L439.4,441.5M-119.4,130.3L-64.7,161.9M-61.7,163.6L-30.3,181.8M-24.8,185.0L19.2,210.3M25.5,214.0L105.0,259.9M109.7,262.6L152.3,287.2M157.7,290.3L236.5,335.8M238.9,337.2L294.1,369.1M294.2,369.1L333.0,391.5M337.7,394.2L387.8,423.2M389.1,423.9L453.9,461.3M-124.7,139.5L-95.0,156.6M-93.6,157.4L-26.3,196.2M-22.9,198.2L30.2,228.9M120.2,280.8L188.5,320.3M190.0,321.1L267.7,366.0M273.6,369.4L336.0,405.4M417.7,452.6L448.3,470.2M-130.7,150.0L-74.1,182.7M-72.4,183.7L-29.4,208.5M-25.8,210.6L13.4,233.2M16.5,235.0L100.0,283.2M102.3,284.5L137.6,304.9M140.2,306.4L204.0,343.2M210.4,346.9L262.7,377.1M265.8,378.9L344.2,424.2M347.3,426.0L389.2,450.2M392.7,452.2L445.3,482.6M-135.9,158.8L-113.6,171.7M-110.4,173.5L-88.2,186.3M-84.4,188.5L-12.3,230.2M-5.8,233.9L38.8,259.6M43.7,262.5L102.7,296.5M107.9,299.6L171.4,336.3M173.1,337.2L258.6,386.6M259.5,387.1L320.1,422.1M321.4,422.9L359.0,444.5M360.7,445.5L445.6,494.5M-141.0,167.8L-57.6,215.9M-57.1,216.2L-6.0,245.7M-2.7,247.6L59.4,283.5M65.6,287.0L120.3,318.6M121.6,319.4L182.1,354.3M305.0,425.3L366.5,460.8M369.5,462.5L416.0,489.3M420.5,491.9L479.6,526.0M-146.3,176.9L-114.6,195.2M-110.8,197.4L-54.9,229.7M47.5,288.8L103.1,320.9M108.9,324.3L190.2,371.2M193.6,373.2L274.6,419.9M277.3,421.5L338.5,456.9M374.1,477.4L444.5,518.0M-151.2,185.4L-93.4,218.8M-42.0,248.5L-16.7,263.0M44.3,298.3L94.5,327.3M146.2,357.1L222.0,400.9M225.8,403.1L259.1,422.3M261.6,423.7L334.2,465.7M335.3,466.3L415.5,512.6M418.3,514.2L441.1,527.4M-156.7,194.9L-93.2,231.6M-63.0,249.1L5.0,288.3M82.6,333.1L155.0,374.9M160.2,377.9L212.1,407.9M212.5,408.1L273.1,443.1M276.8,445.2L346.9,485.7M348.9,486.9L419.1,527.4M-161.9,204.0L-94.9,242.7M-91.3,244.7L-47.2,270.2M-42.0,273.2L31.0,315.4M33.4,316.7L76.9,341.9M83.6,345.7L113.6,363.0M115.0,363.8L187.2,405.5M190.4,407.4L269.2,452.9M272.9,455.0L305.5,473.8M308.6,475.6L372.7,512.6M373.5,513.1L399.6,528.2M401.2,529.1L440.3,551.6M-167.7,214.0L-96.7,254.9M-93.1,257.0L-65.5,272.9M-62.9,274.5L-30.7,293.1M19.1,321.8L102.4,369.9M103.8,370.7L135.0,388.7M139.0,391.1L192.9,422.2M259.3,460.5L316.4,493.5M323.0,497.3L372.3,525.8M374.1,526.8L427.8,557.8M-173.0,223.2L-146.2,238.6M-142.7,240.7L-120.2,253.7M-114.9,256.7L-61.5,287.5M-58.8,289.1L23.5,336.6M26.9,338.6L110.9,387.1M112.3,387.9L180.6,427.3M182.4,428.3L266.6,477.0M267.1,477.3L329.5,513.3M384.0,544.8L411.8,560.8M-178.4,232.5L-103.6,275.7M-100.0,277.8L-73.3,293.2M-71.9,294.0L-31.2,317.5M-30.0,318.2L43.1,360.4M43.7,360.8L109.1,398.5M110.0,399.1L186.4,443.2M187.2,443.6L271.9,492.5M272.4,492.8L328.8,525.3M-184.3,242.7L-135.1,271.1M-130.6,273.7L-63.4,312.5M-58.9,315.1L-34.7,329.1M-32.2,330.5L-7.9,344.6M-4.5,346.5L57.1,382.1M57.3,382.2L100.0,406.8M105.8,410.2L171.9,448.4M175.0,450.2L212.8,472.0M298.1,521.2L351.5,552.1M356.6,555.0L439.3,602.7M-190.1,252.7L-133.8,285.2M-104.1,302.3L-33.2,343.3M-26.7,347.0L1.0,363.0M92.5,415.9L148.1,448.0M149.6,448.8L212.4,485.1M-157.0,285.7L-126.3,303.4M-124.7,304.3L-70.3,335.7M-69.2,336.4L-29.5,359.3M-25.2,361.8L54.4,407.7M57.6,409.6L90.7,428.7M96.2,431.9L170.0,474.5M174.0,476.8L206.0,495.3M238.6,514.1L284.6,540.6M288.7,543.0L311.9,556.4M318.3,560.1L363.8,586.4M365.7,587.5L408.2,612.0M-202.4,274.1L-179.6,287.2M-176.6,288.9L-109.6,327.6M-54.5,359.4L7.4,395.2M14.4,399.2L82.8,438.7M124.4,462.7L179.3,494.4M301.4,564.9L341.2,587.9M341.4,588.0L390.1,616.1M-147.2,319.0L-107.3,341.9M-105.7,342.9L-21.5,391.5M-19.9,392.4L40.1,427.1M43.2,428.9L111.0,468.0M115.3,470.5L142.7,486.3M143.4,486.7L219.3,530.5M289.3,570.9L338.2,599.2M344.3,602.7L414.7,643.3M-186.8,309.5L-100.2,359.5M-15.4,408.5L30.5,435.0M35.1,437.7L89.3,468.9M90.7,469.7L156.9,508.0M157.4,508.3L206.7,536.7M211.3,539.4L288.6,584.0M289.4,584.5L345.8,617.0M351.1,620.1L431.4,666.4M-218.6,302.1L-155.5,338.5M-149.2,342.1L-92.4,375.0M-88.9,377.0L-23.2,414.9M-21.4,415.9L20.7,440.2M151.0,515.5L205.9,547.2M210.4,549.8L294.9,598.5M-224.2,311.9L-193.2,329.8M-191.0,331.1L-165.3,345.9M-160.9,348.5L-106.6,379.8M-50.0,412.4L21.1,453.5M22.5,454.3L65.6,479.2M69.6,481.5L119.4,510.2M177.7,543.9L242.8,581.5M249.7,585.5L289.6,608.5M296.1,612.3L346.4,641.3M-230.3,322.5L-148.0,370.1M-147.1,370.6L-114.2,389.6M-111.7,391.0L-31.6,437.2M-25.0,441.0L9.9,461.2M13.8,463.4L51.5,485.2M56.4,488.1L129.5,530.3M132.0,531.7L159.9,547.8M192.5,566.6L264.0,607.9M-235.6,331.7L-213.7,344.3M-208.9,347.1L-137.0,388.6M-134.5,390.1L-73.7,425.1M-69.7,427.5L-45.6,441.4M-40.6,444.3L8.5,472.6M10.2,473.6L33.0,486.8M101.5,526.3L154.0,556.7M226.8,598.7L292.5,636.6M297.2,639.3L374.7,684.0M-241.6,342.0L-177.0,379.3M-174.8,380.6L-129.7,406.6M-123.1,410.5L-75.2,438.1M-25.4,466.8L40.4,504.8M74.9,524.7L150.0,568.1M154.8,570.9L237.1,618.4M241.6,621.0L270.2,637.5M657.8,104.2L628.8,154.4M627.9,155.9L612.4,182.7M610.0,187.0L576.7,244.7M574.3,248.7L535.5,315.9M532.2,321.8L484.6,404.3M482.5,407.9L465.7,436.9M464.3,439.4L428.8,500.8M399.5,551.6L384.7,577.1M384.1,578.3L340.5,653.8M339.7,655.1L303.8,717.4M647.9,98.5L615.7,154.2M549.8,268.3L523.9,313.3M523.0,314.8L482.2,385.5M432.9,471.0L396.4,534.2M395.9,535.0L380.3,561.9M378.5,565.1L364.5,589.3M364.1,590.0L326.7,654.8M323.4,660.6L301.0,699.4M638.6,93.2L602.6,155.6M599.6,160.7L564.2,222.1M560.5,228.5L512.0,312.5M509.3,317.2L487.8,354.4M484.1,360.8L455.7,410.1M452.5,415.5L403.8,499.9M331.8,624.7L304.9,671.2M629.1,87.6L580.4,172.0M580.1,172.4L546.1,231.4M499.2,312.7L450.6,396.8M450.5,397.0L414.9,458.7M392.9,496.8L365.8,543.7M325.4,613.7L310.7,639.2M309.2,641.8L281.5,689.6M599.2,113.1L570.8,162.2M549.4,199.4L533.2,227.4M496.0,291.9L450.9,369.9M449.6,372.1L435.2,397.1M433.6,399.9L408.3,443.7M405.9,448.0L392.9,470.4M348.9,546.6L309.2,615.4M307.4,618.5L275.1,674.5M608.1,75.6L558.2,162.0M539.3,194.7L521.6,225.4M519.8,228.6L475.4,305.4M472.0,311.4L449.2,350.9M448.0,353.0L419.6,402.2M418.2,404.5L397.6,440.2M394.5,445.6L344.6,532.0M344.3,532.6L299.8,609.7M298.6,611.7L270.2,660.9M597.9,69.6L579.7,101.0M577.8,104.4L564.6,127.3M561.2,133.1L520.6,203.3M517.4,208.9L488.1,259.7M484.3,266.2L445.2,334.0M373.0,459.1L323.7,544.4M319.8,551.2L274.8,629.1M273.3,631.7L225.1,715.2M549.5,132.0L512.4,196.2M509.7,200.9L465.5,277.5M463.2,281.4L433.3,333.2M406.6,379.4L365.8,450.1M363.2,454.7L349.5,478.3M345.8,484.7L304.5,556.2M301.2,562.0L253.6,644.4M578.7,58.6L544.4,118.1M507.7,181.6L472.7,242.2M435.8,306.0L396.0,375.0M393.1,380.1L355.1,445.9M352.3,450.8L319.6,507.4M258.2,613.7L210.4,696.5M568.8,52.8L541.7,99.7M540.5,101.7L521.3,135.1M474.0,216.9L447.9,262.1M447.3,263.2L419.4,311.5M418.7,312.8L369.7,397.6M367.7,401.0L321.7,480.8M318.6,486.1L294.6,527.6M242.5,618.0L199.0,693.3M494.6,159.4L474.4,194.4M473.1,196.6L442.1,250.4M439.1,255.6L421.0,286.9M418.1,292.0L392.0,337.0M388.8,342.7L350.6,408.8M349.0,411.6L299.6,497.1M298.4,499.2L276.1,537.8M274.7,540.2L251.9,579.8M248.0,586.6L222.0,631.5M549.0,41.4L510.8,107.6M509.5,109.7L471.8,175.1M388.4,319.5L343.9,396.7M342.5,399.1L311.6,452.6M269.7,525.1L243.9,569.9M539.9,36.1L500.6,104.1M497.3,109.8L475.9,146.9M472.7,152.4L455.6,182.0M454.2,184.5L438.4,211.9M403.4,272.5L356.9,353.0M354.2,357.8L334.0,392.7M331.8,396.4L298.8,453.6M298.2,454.6L254.9,529.7M251.8,535.0L238.1,558.8M234.4,565.3L198.6,627.2M528.1,29.3L490.2,95.0M488.9,97.3L473.5,123.9M469.5,130.9L433.9,192.5M432.1,195.6L399.0,252.9M368.0,306.7L341.6,352.4M339.3,356.3L324.7,381.7M320.9,388.2L287.4,446.3M287.2,446.7L243.9,521.6M242.0,524.8L197.6,601.7M517.6,23.3L482.1,84.9M478.5,91.1L463.6,116.9M430.9,173.5L393.6,238.2M334.5,340.5L291.5,415.0M289.3,418.8L276.7,440.6M274.3,444.8L244.7,496.1M242.2,500.3L199.1,575.0M195.2,581.7L169.1,627.0M506.3,16.8L474.6,71.8M436.4,137.9L417.0,171.4M413.3,177.9L366.5,259.1M363.5,264.1L318.4,342.2M317.4,344.0L289.4,392.4M286.2,398.0L250.4,460.1M247.8,464.6L220.4,512.0M220.4,512.1L188.7,566.9M187.7,568.7L144.2,644.0M465.6,63.0L448.3,93.0M446.8,95.5L427.1,129.7M423.7,135.7L377.4,215.9M355.4,254.0L330.9,296.3M328.4,300.6L315.8,322.6M312.5,328.3L281.5,381.9M279.1,386.0L235.7,461.3M235.2,462.2L194.5,532.7M191.0,538.6L148.5,612.4M484.0,3.9L459.9,45.7M458.7,47.9L422.9,109.9M421.0,113.1L380.5,183.2M379.4,185.2L354.5,228.3M338.3,256.4L293.6,333.7M290.6,339.0L265.4,382.5M265.4,382.7L228.2,447.0M226.1,450.8L195.8,503.1M193.3,507.4L178.6,532.9M175.5,538.3L146.6,588.4M437.8,61.9L394.3,137.4M391.3,142.4L373.5,173.3M373.1,174.0L329.7,249.1M327.7,252.7L288.6,320.3M284.7,327.1L255.1,378.3M254.5,379.4L228.8,423.9M225.4,429.8L195.8,481.1M193.9,484.3L151.7,557.4M151.5,557.8L103.2,641.5M465.0,-7.1L448.3,21.9M445.6,26.6L407.7,92.2M406.3,94.6L383.7,133.7M352.0,188.6L312.8,256.6M264.5,340.2L233.0,394.8M231.3,397.6L218.5,419.8M455.6,-12.5L407.5,70.7M405.6,74.1L380.0,118.4M376.0,125.3L358.3,156.0M354.7,162.2L321.7,219.3M318.7,224.5L271.8,305.8M268.4,311.6L219.6,396.2M217.4,400.0L171.1,480.2M167.5,486.5L123.4,562.8M403.4,53.1L362.3,124.2M360.7,126.9L311.6,212.1M310.0,214.9L281.3,264.6M281.0,265.1L238.3,339.0M238.0,339.5L203.3,399.7M202.6,400.8L187.3,427.4M435.4,-24.2L401.9,33.7M399.8,37.4L386.0,61.3M383.2,66.1L335.2,149.4M332.5,154.0L292.7,222.9M253.3,291.2L207.3,370.8M205.8,373.5L168.1,438.8M165.7,442.9L143.2,481.9M142.2,483.6L95.7,564.2M426.0,-29.6L392.0,29.3M391.5,30.3L374.1,60.3M370.2,67.1L342.2,115.6M341.9,116.0L310.1,171.1M307.2,176.2L263.4,252.0M262.7,253.2L235.7,300.0M232.5,305.6L207.2,349.3M204.2,354.5L169.0,415.5M165.7,421.3L139.4,466.9M139.0,467.5L111.9,514.5M110.9,516.2L82.7,565.0M386.5,11.5L362.6,53.0M359.0,59.3L320.0,126.7M279.4,197.1L263.3,225.0M233.1,277.2L213.7,310.9M213.2,311.7L165.4,394.6M161.6,401.2L112.4,486.4M109.4,491.5L73.5,553.7M404.6,-41.9L387.4,-12.1M383.7,-5.7L347.9,56.3M346.7,58.4L322.3,100.6M319.6,105.4L291.9,153.3M291.3,154.4L271.1,189.3M267.5,195.6L238.9,245.1M237.2,248.1L206.0,302.2M156.2,388.4L115.7,458.4M113.3,462.6L98.0,489.2M95.3,493.8L63.7,548.6M394.0,-48.1L376.7,-18.1M373.6,-12.8L346.9,33.4M301.2,112.6L273.4,160.8M271.1,164.9L235.2,227.0M233.7,229.6L186.1,312.1M185.1,313.8L169.5,340.8M166.5,346.0L145.2,382.9M141.5,389.3L122.3,422.6M120.2,426.3L84.5,488.0M81.3,493.6L62.9,525.4M384.3,-53.7L355.1,-3.2M351.6,3.0L323.5,51.5M321.0,55.9L301.8,89.1M300.4,91.7L263.6,155.4M261.9,158.2L240.5,195.3M237.3,200.8L196.7,271.2M195.1,273.9L146.7,357.9M144.0,362.4L104.0,431.7M103.6,432.5L62.6,503.4M59.3,509.2L25.1,568.5M373.1,-60.1L347.5,-15.7M347.3,-15.4L297.3,71.2M294.9,75.4L270.6,117.4M267.7,122.4L252.3,149.1M249.1,154.7L225.3,195.9M225.1,196.3L188.9,259.0M117.1,383.4L72.4,460.8M49.1,501.2L36.0,523.7M364.2,-65.3L345.6,-33.1M345.1,-32.1L318.2,14.5M317.9,14.9L290.3,62.8M268.2,101.0L237.2,154.8M234.1,160.1L203.3,213.4M200.7,217.9L169.3,272.4M165.7,278.6L127.2,345.2M353.2,-71.6L321.8,-17.2M321.4,-16.6L281.0,53.5M279.4,56.2L263.4,84.0M262.8,84.9L225.0,150.5M224.0,152.2L195.6,201.2M193.7,204.7L169.8,246.1M166.9,251.0L129.8,315.3M98.1,370.2L69.8,419.3M66.3,425.3L28.2,491.3M298.9,-3.0L271.1,45.3M269.6,47.8L235.3,107.2M163.0,232.4L121.9,303.6M120.1,306.8L92.8,353.9M91.3,356.5L46.2,434.7M45.5,435.9L13.3,491.6M273.4,18.9L251.0,57.7M249.9,59.6L200.9,144.5M47.2,410.8L19.0,459.6M18.5,460.4L-5.2,501.4M275.6,-6.7L254.7,29.6M212.2,103.2L165.9,183.4M139.5,229.0L95.1,305.9M95.1,306.0L50.9,382.6M311.9,-95.5L270.5,-23.7M267.9,-19.2L234.2,39.1M232.4,42.3L190.9,114.1M189.9,115.9L160.6,166.6M157.4,172.2L131.7,216.7M128.6,222.1L89.6,289.6M86.5,295.0L72.8,318.7M70.6,322.5L30.1,392.6M302.2,-101.1L263.6,-34.3M214.3,51.0L201.8,72.7M198.8,77.9L182.6,105.9M179.3,111.6L135.2,188.0M131.5,194.4L108.4,234.4M107.9,235.3L60.8,317.0M57.7,322.3L35.8,360.2M31.9,367.0L-17.8,453.1M-19.7,456.4L-66.9,538.2M292.5,-106.7L258.5,-47.9M218.0,22.2L201.7,50.4M201.0,51.7L180.5,87.2M179.3,89.2L160.1,122.5M157.2,127.5L120.4,191.3M119.8,192.4L92.1,240.3M88.9,245.9L72.2,274.8M68.5,281.3L23.1,359.7M19.4,366.2L-26.7,446.1M-29.7,451.3L-75.7,530.9M282.4,-112.5L255.3,-65.4M208.4,15.7L177.5,69.2M150.8,115.5L104.0,196.6M103.9,196.7L84.9,229.6M50.0,290.1L12.5,355.1M10.4,358.6L-39.2,444.6M272.4,-118.3L258.8,-94.6M257.6,-92.6L214.0,-17.1M211.2,-12.3L166.7,64.9M164.4,68.9L140.9,109.6M104.0,173.4L72.0,228.9M68.5,235.0L29.1,303.1M-13.6,377.2L-50.7,441.4M-53.8,446.8L-73.4,480.7M216.2,-44.1L180.4,17.9M177.1,23.7L138.6,90.4M135.1,96.4L89.4,175.6M89.3,175.8L51.8,240.7M49.0,245.5L24.9,287.3M24.4,288.2L-11.5,350.4M-15.1,356.7L-35.0,391.1M-35.7,392.3L-80.2,469.4M251.5,-130.4L222.3,-79.9M220.4,-76.6L179.4,-5.6M179.4,-5.6L164.7,19.8M164.1,20.9L149.5,46.1M149.3,46.6L123.9,90.6M102.0,128.4L80.2,166.2M76.7,172.3L63.1,195.8M61.0,199.6L25.9,260.3M25.3,261.3L2.2,301.3M-1.1,307.1L-18.3,336.8M-21.5,342.4L-62.9,414.2M191.4,-49.1L149.6,23.3M97.1,114.3L82.1,140.3M80.1,143.8L63.1,173.2M60.8,177.2L41.7,210.2M38.3,216.1L20.6,246.8M17.2,252.7L1.3,280.2M-0.7,283.6L-25.9,327.3M-27.5,330.1L-47.2,364.2M-48.6,366.6L-77.6,416.9M-78.5,418.4L-126.5,501.6M232.3,-141.4L183.5,-56.8M157.2,-11.3L138.3,21.4M135.5,26.2L88.9,106.9M38.1,194.9L12.5,239.3M10.1,243.5L-38.4,327.5M-39.8,329.9L-59.1,363.3M221.1,-147.9L189.4,-92.8M141.7,-10.2L113.3,38.8M109.9,44.9L66.7,119.5M64.9,122.7L17.8,204.3M15.6,208.1L-16.0,262.9M-18.5,267.2L-60.3,339.6M-60.9,340.6L-92.4,395.2M-93.3,396.8L-111.6,428.4M210.8,-153.8L195.6,-127.5M192.4,-122.0L153.4,-54.4M151.8,-51.5L129.7,-13.3M126.6,-8.0L101.7,35.2M98.3,41.1L77.9,76.3M75.8,80.0L39.2,143.5M-11.3,230.9L-47.3,293.2M-49.2,296.5L-69.1,331.0M-72.1,336.2L-111.6,404.6M-112.9,406.9L-139.9,453.6M182.9,-127.4L146.7,-64.7M143.8,-59.7L116.0,-11.5M114.4,-8.7L100.6,15.1M44.7,112.0L24.3,147.2M20.6,153.7L0.2,189.1M-1.2,191.5L-22.1,227.6M-25.5,233.6L-62.7,297.9M-63.6,299.5L-110.2,380.2M-112.2,383.8L-141.4,434.3M139.1,-77.5L91.1,5.7M88.7,9.9L49.4,77.9M48.0,80.4L28.7,113.9M26.8,117.1L8.1,149.4M5.6,153.8L-27.5,211.2M-27.8,211.8L-70.0,284.8M-70.8,286.1L-83.8,308.6M-85.2,311.1L-100.9,338.3M-103.1,342.1L-143.9,412.8M90.1,-15.4L60.0,36.7M58.3,39.6L15.3,114.2M-8.4,155.2L-58.4,241.8M-58.9,242.7L-92.2,300.4M-96.1,307.2L-128.4,363.1M124.7,-96.0L101.5,-55.7M99.9,-52.9L64.8,7.9M62.3,12.2L48.4,36.2M46.1,40.3L2.3,116.2M1.8,117.0L-15.3,146.5M-15.3,146.5L-33.4,177.9M-59.3,222.8L-81.6,261.5M-82.6,263.2L-128.5,342.6M-155.7,389.8L-204.9,475.0M143.4,-149.8L105.1,-83.5M102.1,-78.4L71.4,-25.1M67.7,-18.7L48.4,14.7M21.0,62.1L-28.0,146.9M-29.2,149.0L-45.5,177.2M-47.4,180.6L-73.1,225.1M-73.2,225.2L-98.7,269.5M-101.7,274.6L-133.6,330.0M-134.6,331.7L-170.0,392.9M151.2,-188.3L106.4,-110.7M60.4,-31.1L33.3,15.8M32.3,17.6L-15.1,99.7M-68.9,192.8L-117.7,277.3M-121.5,284.0L-135.1,307.6M-137.3,311.3L-153.7,339.7M-157.3,345.9L-191.0,404.4M119.3,-155.3L75.4,-79.1M75.2,-78.8L61.5,-55.1M58.1,-49.2L39.1,-16.3M-6.4,62.5L-18.9,84.2M-64.2,162.6L-77.7,186.0M-79.5,189.1L-111.0,243.6M-114.2,249.2L-134.6,284.5M-138.0,290.4L-170.4,346.6M-172.1,349.4L-214.2,422.4M132.6,-199.0L95.4,-134.5M76.8,-102.2L33.8,-27.7M32.6,-25.6L12.5,9.0M11.5,10.9L-13.5,54.1M-15.0,56.8L-47.5,113.0M-50.2,117.7L-63.8,141.3M-64.5,142.5L-98.5,201.3M-101.9,207.3L-122.7,243.2M-124.7,246.8L-162.8,312.7M-187.7,355.8L-227.8,425.3M79.9,-131.3L56.3,-90.5M53.4,-85.5L25.4,-37.0M23.6,-33.7L-25.2,50.8M-28.2,56.0L-62.2,114.8M-146.3,260.5L-189.6,335.4M-190.9,337.7L-228.2,402.2M113.4,-210.1L91.2,-171.6M88.2,-166.5L44.2,-90.2M43.5,-88.9L14.9,-39.4M14.8,-39.2L-20.2,21.4M-21.8,24.1L-39.3,54.5M-122.5,198.5L-159.5,262.5M-159.9,263.3L-182.0,301.5M-185.2,307.1L-198.4,330.0M102.0,-216.7L87.6,-191.6M83.9,-185.3L34.9,-100.4M32.0,-95.3L-0.8,-38.5M-3.5,-33.9L-33.2,17.6M-36.6,23.5L-54.6,54.7M-114.3,158.0L-160.7,238.4M-164.0,244.2L-183.9,278.5M-184.3,279.3L-229.3,357.2M93.0,-221.8L45.3,-139.2M42.2,-133.8L1.0,-62.4M-2.4,-56.6L-24.8,-17.7M-48.0,22.5L-65.0,51.9M-92.7,99.8L-142.3,185.8M-145.5,191.3L-165.3,225.7M-169.0,232.1L-181.8,254.2M-210.1,303.2L-245.6,364.7" stroke="#fbfbfb" stroke-width="1.6" fill="none"/><rect x="311.3" y="111.3" width="6.9" height="7.7" fill="#f4f2c2"/><rect x="371.1" y="116.4" width="3.9" height="2.8" fill="#d2e6c2"/><rect x="171.1" y="70.4" width="3.9" height="5.5" fill="#cfe5bf"/><rect x="143.6" y="32.5" width="4.0" height="7.5" fill="#e9dde6"/><rect x="183.9" y="119.6" width="3.3" height="5.9" fill="#d2e6c2"/><rect x="176.4" y="145.9" width="2.5" height="6.8" fill="#d2e6c2"/><rect x="379.9" y="43.4" width="7.8" height="5.5" fill="#cfe5bf"/><rect x="190.0" y="145.3" width="3.6" height="7.8" fill="#e9dde6"/><rect x="222.2" y="54.2" width="3.4" height="3.3" fill="#f4f2c2"/><rect x="231.3" y="122.6" width="5.7" height="5.8" fill="#f0d3d1"/><rect x="158.2" y="53.3" width="4.2" height="6.3" fill="#d2e6c2"/><rect x="272.3" y="105.7" width="2.8" height="7.9" fill="#f4f2c2"/><rect x="401.0" y="53.6" width="4.7" height="5.5" fill="#e9dde6"/><rect x="240.7" y="86.8" width="2.5" height="2.8" fill="#d2e6c2"/><rect x="311.5" y="143.2" width="3.2" height="3.9" fill="#d0d0c0"/><rect x="234.7" y="53.2" width="5.4" height="6.8" fill="#f4f2c2"/><rect x="302.2" y="117.1" width="4.5" height="4.1" fill="#e9dde6"/><rect x="400.1" y="13.7" width="4.4" height="5.9" fill="#d2e6c2"/><rect x="233.5" y="138.6" width="5.5" height="4.2" fill="#f0d3d1"/><rect x="224.2" y="119.8" width="5.9" height="6.5" fill="#a9dcc3"/><rect x="414.1" y="24.2" width="2.8" height="7.9" fill="#e9dde6"/><rect x="148.8" y="111.1" width="4.4" height="3.9" fill="#e9dde6"/><rect x="180.0" y="146.9" width="6.0" height="6.9" fill="#f0d3d1"/><rect x="370.6" y="19.6" width="6.5" height="7.7" fill="#e9dde6"/><rect x="169.3" y="65.2" width="3.3" height="7.1" fill="#a9dcc3"/><rect x="178.8" y="138.3" width="5.9" height="3.4" fill="#d0d0c0"/><rect x="404.0" y="103.3" width="4.2" height="4.0" fill="#d0d0c0"/><rect x="251.0" y="22.0" width="4.6" height="7.9" fill="#d2e6c2"/><rect x="312.4" y="74.9" width="4.4" height="3.0" fill="#a9dcc3"/><rect x="281.7" y="82.2" width="5.3" height="2.8" fill="#f0d3d1"/><rect x="331.0" y="99.6" width="6.7" height="4.5" fill="#a9dcc3"/><rect x="369.7" y="39.7" width="7.9" height="6.4" fill="#f0d3d1"/><rect x="318.7" y="87.1" width="2.6" height="5.5" fill="#a9dcc3"/><rect x="229.6" y="41.1" width="4.1" height="5.3" fill="#f0d3d1"/><rect x="235.7" y="96.6" width="6.6" height="7.1" fill="#f0d3d1"/><rect x="393.6" y="25.9" width="7.3" height="5.0" fill="#f0d3d1"/><rect x="403.0" y="77.7" width="5.4" height="3.4" fill="#f0d3d1"/><rect x="397.8" y="71.6" width="6.3" height="6.5" fill="#e9dde6"/><rect x="187.3" y="117.1" width="5.7" height="6.2" fill="#e9dde6"/><rect x="223.2" y="83.0" width="7.3" height="4.0" fill="#f4f2c2"/><rect x="193.8" y="88.0" width="5.9" height="3.5" fill="#d2e6c2"/><rect x="313.5" y="6.3" width="5.1" height="3.7" fill="#f4f2c2"/><rect x="385.2" y="16.6" width="7.8" height="5.2" fill="#f4f2c2"/><rect x="254.3" y="52.7" width="6.1" height="2.9" fill="#cfe5bf"/><rect x="205.4" y="135.5" width="2.5" height="4.7" fill="#a9dcc3"/><rect x="375.4" y="130.0" width="6.3" height="5.5" fill="#f4f2c2"/><rect x="291.2" y="45.2" width="4.1" height="5.3" fill="#a9dcc3"/><rect x="403.5" y="122.8" width="4.8" height="7.0" fill="#f0d3d1"/><rect x="268.6" y="23.5" width="4.6" height="5.1" fill="#cfe5bf"/><rect x="406.2" y="91.3" width="4.4" height="7.4" fill="#f4f2c2"/><rect x="245.0" y="48.9" width="7.5" height="5.5" fill="#f0d3d1"/><rect x="313.1" y="133.7" width="4.6" height="4.9" fill="#cfe5bf"/><rect x="275.7" y="71.9" width="6.4" height="4.6" fill="#d2e6c2"/><rect x="303.8" y="39.0" width="7.9" height="5.2" fill="#e9dde6"/><rect x="145.4" y="141.8" width="4.2" height="7.6" fill="#d2e6c2"/><rect x="271.2" y="18.3" width="5.9" height="4.9" fill="#a9dcc3"/><rect x="151.0" y="20.5" width="4.7" height="5.1" fill="#a9dcc3"/><rect x="207.0" y="71.1" width="2.7" height="5.2" fill="#d2e6c2"/><rect x="144.3" y="257.1" width="5.2" height="8.0" fill="#f4f2c2"/><rect x="3.2" y="214.0" width="4.1" height="6.4" fill="#a9dcc3"/><rect x="146.3" y="187.2" width="4.4" height="6.2" fill="#d2e6c2"/><rect x="7.3" y="248.2" width="5.0" height="7.5" fill="#cfe5bf"/><rect x="2.9" y="390.2" width="4.9" height="5.7" fill="#d0d0c0"/><rect x="171.7" y="407.1" width="5.1" height="6.3" fill="#cfe5bf"/><rect x="179.8" y="305.6" width="6.7" height="4.2" fill="#f4f2c2"/><rect x="138.9" y="296.9" width="4.1" height="6.8" fill="#a9dcc3"/><rect x="28.5" y="309.2" width="5.5" height="5.2" fill="#f0d3d1"/><rect x="107.6" y="294.9" width="5.5" height="2.8" fill="#cfe5bf"/><rect x="53.4" y="203.0" width="2.8" height="7.7" fill="#f0d3d1"/><rect x="144.5" y="444.2" width="8.0" height="6.4" fill="#f4f2c2"/><rect x="24.7" y="213.0" width="5.9" height="7.0" fill="#f4f2c2"/><rect x="142.5" y="216.3" width="4.1" height="7.5" fill="#d2e6c2"/><rect x="36.6" y="230.0" width="6.9" height="2.9" fill="#cfe5bf"/><rect x="8.7" y="209.2" width="4.6" height="2.9" fill="#f4f2c2"/><rect x="114.2" y="212.0" width="4.7" height="5.9" fill="#f4f2c2"/><rect x="86.3" y="264.9" width="5.8" height="5.2" fill="#f0d3d1"/><rect x="183.0" y="217.3" width="4.1" height="5.6" fill="#a9dcc3"/><rect x="182.1" y="329.8" width="5.9" height="3.9" fill="#cfe5bf"/><rect x="50.8" y="382.7" width="5.3" height="3.2" fill="#cfe5bf"/><rect x="172.7" y="302.4" width="4.6" height="3.2" fill="#f4f2c2"/><rect x="131.0" y="203.0" width="6.2" height="3.0" fill="#f4f2c2"/><rect x="101.3" y="302.4" width="4.6" height="5.0" fill="#f0d3d1"/><rect x="21.5" y="323.3" width="5.5" height="4.6" fill="#d2e6c2"/><rect x="188.9" y="295.9" width="6.9" height="6.6" fill="#f4f2c2"/><rect x="194.5" y="359.6" width="7.0" height="3.3" fill="#e9dde6"/><rect x="70.9" y="243.5" width="4.3" height="5.9" fill="#f0d3d1"/><rect x="159.2" y="282.1" width="6.5" height="4.5" fill="#a9dcc3"/><rect x="160.9" y="297.0" width="7.2" height="5.3" fill="#cfe5bf"/><rect x="148.0" y="286.8" width="3.0" height="2.7" fill="#cfe5bf"/><rect x="39.1" y="312.3" width="7.7" height="6.1" fill="#f0d3d1"/><rect x="0.1" y="307.0" width="7.4" height="5.9" fill="#e9dde6"/><rect x="64.7" y="304.7" width="3.6" height="6.1" fill="#f4f2c2"/><rect x="74.9" y="284.1" width="7.3" height="3.3" fill="#a9dcc3"/><rect x="22.0" y="401.0" width="6.6" height="6.2" fill="#f4f2c2"/><rect x="96.4" y="188.7" width="7.6" height="4.5" fill="#f4f2c2"/><rect x="137.5" y="361.9" width="5.1" height="7.7" fill="#f4f2c2"/><rect x="157.1" y="267.6" width="5.0" height="3.8" fill="#d2e6c2"/><rect x="6.7" y="373.0" width="5.7" height="6.1" fill="#e9dde6"/><rect x="182.3" y="370.8" width="6.2" height="3.5" fill="#f0d3d1"/><rect x="56.6" y="377.7" width="6.4" height="3.4" fill="#cfe5bf"/><rect x="35.1" y="236.4" width="2.7" height="5.8" fill="#a9dcc3"/><rect x="1.3" y="196.4" width="6.8" height="4.8" fill="#f4f2c2"/><rect x="6.7" y="405.6" width="7.1" height="5.6" fill="#f4f2c2"/><rect x="143.3" y="244.0" width="6.9" height="3.0" fill="#d0d0c0"/><rect x="10.8" y="245.7" width="2.8" height="4.7" fill="#f4f2c2"/><rect x="9.6" y="405.0" width="5.0" height="6.0" fill="#f4f2c2"/><rect x="190.0" y="232.5" width="6.3" height="6.0" fill="#cfe5bf"/><rect x="106.3" y="202.8" width="4.2" height="3.1" fill="#d2e6c2"/><rect x="119.7" y="411.3" width="3.7" height="2.6" fill="#f0d3d1"/><rect x="97.3" y="334.3" width="4.6" height="5.9" fill="#f4f2c2"/><rect x="182.6" y="263.1" width="5.0" height="7.0" fill="#cfe5bf"/><rect x="110.9" y="217.5" width="5.2" height="6.8" fill="#a9dcc3"/><rect x="163.9" y="264.5" width="3.2" height="3.0" fill="#cfe5bf"/><rect x="139.4" y="395.7" width="7.8" height="6.2" fill="#a9dcc3"/><rect x="12.3" y="369.2" width="2.8" height="3.6" fill="#a9dcc3"/><rect x="176.5" y="419.1" width="2.9" height="6.7" fill="#e9dde6"/><rect x="150.5" y="330.1" width="7.4" height="6.1" fill="#d2e6c2"/><rect x="114.9" y="299.4" width="7.0" height="6.1" fill="#f4f2c2"/><rect x="145.6" y="369.3" width="4.0" height="7.0" fill="#e9dde6"/><rect x="112.4" y="266.7" width="4.2" height="3.3" fill="#d0d0c0"/><rect x="135.2" y="257.1" width="2.8" height="6.7" fill="#f4f2c2"/><rect x="5.5" y="193.7" width="3.2" height="4.5" fill="#a9dcc3"/><rect x="189.8" y="345.2" width="3.8" height="4.9" fill="#f0d3d1"/><rect x="40.2" y="276.7" width="3.4" height="5.9" fill="#d2e6c2"/><rect x="145.4" y="205.7" width="5.4" height="3.4" fill="#d2e6c2"/><rect x="89.2" y="433.4" width="6.9" height="3.2" fill="#f0d3d1"/><rect x="89.2" y="241.6" width="5.8" height="3.4" fill="#f4f2c2"/><rect x="153.5" y="432.8" width="5.4" height="7.8" fill="#f4f2c2"/><rect x="20.7" y="399.8" width="4.8" height="2.8" fill="#f4f2c2"/><rect x="6.6" y="335.8" width="5.2" height="7.3" fill="#e9dde6"/><rect x="92.8" y="234.4" width="7.0" height="4.2" fill="#f0d3d1"/><rect x="152.9" y="392.0" width="4.5" height="6.9" fill="#f4f2c2"/><rect x="123.6" y="288.2" width="3.3" height="7.1" fill="#d0d0c0"/><rect x="76.3" y="205.3" width="4.7" height="6.6" fill="#a9dcc3"/><rect x="180.0" y="233.8" width="6.9" height="4.3" fill="#d0d0c0"/><rect x="385.6" y="355.8" width="6.9" height="4.6" fill="#f4f2c2"/><rect x="222.3" y="351.3" width="5.9" height="7.0" fill="#f4f2c2"/><rect x="268.2" y="206.8" width="4.2" height="4.6" fill="#d0d0c0"/><rect x="317.3" y="372.7" width="5.0" height="6.8" fill="#f4f2c2"/><rect x="315.4" y="399.7" width="4.5" height="5.8" fill="#cfe5bf"/><rect x="261.1" y="219.4" width="3.0" height="4.5" fill="#e9dde6"/><rect x="266.0" y="432.3" width="4.0" height="6.4" fill="#f4f2c2"/><rect x="208.1" y="222.1" width="7.8" height="4.2" fill="#f0d3d1"/><rect x="347.9" y="409.6" width="6.6" height="5.9" fill="#cfe5bf"/><rect x="303.9" y="223.0" width="3.2" height="4.4" fill="#e9dde6"/><rect x="284.6" y="200.7" width="4.6" height="3.5" fill="#cfe5bf"/><rect x="395.7" y="353.4" width="4.6" height="3.1" fill="#f0d3d1"/><rect x="253.5" y="225.0" width="4.1" height="6.9" fill="#f4f2c2"/><rect x="392.9" y="241.9" width="6.0" height="6.7" fill="#cfe5bf"/><rect x="341.0" y="342.5" width="5.9" height="6.0" fill="#e9dde6"/><rect x="289.6" y="306.3" width="5.4" height="7.5" fill="#a9dcc3"/><rect x="289.9" y="221.1" width="7.4" height="4.3" fill="#e9dde6"/><rect x="206.6" y="228.9" width="5.6" height="5.8" fill="#d2e6c2"/><rect x="293.3" y="281.5" width="3.1" height="6.8" fill="#f0d3d1"/><rect x="356.7" y="215.3" width="5.2" height="7.1" fill="#f4f2c2"/><rect x="268.5" y="412.6" width="6.0" height="7.6" fill="#cfe5bf"/><rect x="392.1" y="353.8" width="6.9" height="7.1" fill="#f4f2c2"/><rect x="241.6" y="239.2" width="3.0" height="3.3" fill="#f4f2c2"/><rect x="323.6" y="310.3" width="4.3" height="6.7" fill="#d2e6c2"/><rect x="353.3" y="431.0" width="7.8" height="5.9" fill="#f4f2c2"/><rect x="278.5" y="403.5" width="3.6" height="4.3" fill="#d2e6c2"/><rect x="298.6" y="370.1" width="6.6" height="3.0" fill="#e9dde6"/><rect x="402.4" y="316.5" width="2.5" height="7.9" fill="#f0d3d1"/><rect x="228.5" y="200.8" width="4.6" height="4.4" fill="#f4f2c2"/><rect x="305.5" y="434.4" width="6.4" height="2.6" fill="#d0d0c0"/><rect x="414.8" y="387.7" width="3.6" height="4.4" fill="#d2e6c2"/><rect x="262.5" y="324.7" width="6.3" height="6.8" fill="#f4f2c2"/><rect x="263.6" y="284.2" width="7.2" height="5.4" fill="#f4f2c2"/><rect x="247.4" y="446.5" width="4.0" height="6.5" fill="#d2e6c2"/><rect x="258.3" y="224.0" width="5.1" height="7.9" fill="#e9dde6"/><rect x="383.9" y="261.3" width="5.0" height="3.2" fill="#f4f2c2"/><rect x="201.1" y="391.5" width="4.5" height="2.6" fill="#a9dcc3"/><rect x="320.9" y="439.2" width="7.3" height="2.9" fill="#cfe5bf"/><rect x="241.7" y="400.9" width="2.6" height="5.4" fill="#a9dcc3"/><rect x="328.6" y="409.8" width="5.1" height="2.6" fill="#d2e6c2"/><rect x="284.4" y="394.6" width="4.9" height="5.8" fill="#f4f2c2"/><rect x="246.4" y="305.4" width="6.5" height="7.0" fill="#e9dde6"/><rect x="396.8" y="294.6" width="8.0" height="6.7" fill="#f0d3d1"/><rect x="231.9" y="395.2" width="4.8" height="7.8" fill="#f0d3d1"/><rect x="246.6" y="305.4" width="4.0" height="5.1" fill="#a9dcc3"/><rect x="200.5" y="358.3" width="6.7" height="6.7" fill="#f4f2c2"/><rect x="215.9" y="295.3" width="7.4" height="7.4" fill="#cfe5bf"/><rect x="339.4" y="386.8" width="5.2" height="4.2" fill="#d0d0c0"/><rect x="229.3" y="259.1" width="7.6" height="7.7" fill="#f4f2c2"/><rect x="203.1" y="403.1" width="3.0" height="3.2" fill="#f0d3d1"/><rect x="271.8" y="253.7" width="4.1" height="7.4" fill="#f4f2c2"/><rect x="261.0" y="226.5" width="4.7" height="4.2" fill="#d0d0c0"/><rect x="317.7" y="310.8" width="7.3" height="7.8" fill="#d2e6c2"/><rect x="256.6" y="336.3" width="6.5" height="3.2" fill="#d0d0c0"/><rect x="343.0" y="214.0" width="2.6" height="3.7" fill="#cfe5bf"/><rect x="308.4" y="352.6" width="6.9" height="2.8" fill="#cfe5bf"/><rect x="208.2" y="296.4" width="4.4" height="2.6" fill="#a9dcc3"/><rect x="294.5" y="225.6" width="3.2" height="7.5" fill="#a9dcc3"/><rect x="353.3" y="434.3" width="7.7" height="7.9" fill="#a9dcc3"/><rect x="382.1" y="347.7" width="6.3" height="6.0" fill="#f4f2c2"/><rect x="358.3" y="332.2" width="4.6" height="7.6" fill="#a9dcc3"/><rect x="375.7" y="293.3" width="4.7" height="5.0" fill="#f4f2c2"/><rect x="306.3" y="341.5" width="3.6" height="5.0" fill="#f4f2c2"/><rect x="359.5" y="229.2" width="7.4" height="4.6" fill="#f0d3d1"/><rect x="256.6" y="268.9" width="6.8" height="6.6" fill="#a9dcc3"/><rect x="254.0" y="206.2" width="3.9" height="3.4" fill="#cfe5bf"/><rect x="350.9" y="348.0" width="7.3" height="7.5" fill="#d2e6c2"/><rect x="327.7" y="341.4" width="7.5" height="4.5" fill="#f4f2c2"/><rect x="202.1" y="210.8" width="7.0" height="5.2" fill="#f4f2c2"/><rect x="205.6" y="302.9" width="4.8" height="5.4" fill="#d0d0c0"/><rect x="331.6" y="255.4" width="7.7" height="3.1" fill="#f4f2c2"/><rect x="354.6" y="347.9" width="2.7" height="6.4" fill="#a9dcc3"/><rect x="339.5" y="423.0" width="6.5" height="2.9" fill="#a9dcc3"/><rect x="225.9" y="388.6" width="3.9" height="4.1" fill="#f4f2c2"/><rect x="388.9" y="280.7" width="6.1" height="5.2" fill="#e9dde6"/><rect x="233.4" y="254.1" width="3.9" height="7.7" fill="#cfe5bf"/><polygon points="0,8 51,8 59,0 184,0 178,14 161,63 140,90 118.7,112 108,132 100,168 54,163 23,156.5 0,166" fill="#a9d09a" /><polygon points="0,0 59,0 51,8 0,12" fill="#dcd6d6" /><defs><pattern id="hatch" width="6" height="6" patternUnits="userSpaceOnUse" patternTransform="rotate(35)"><rect width="6" height="6" fill="#b2cd9c"/><path d="M0,3 L3.5,3" stroke="#b39a64" stroke-width="1" opacity="0.7"/><path d="M3,0 L3,2" stroke="#b39a64" stroke-width="0.8" opacity="0.5"/></pattern><pattern id="phatch" width="5" height="5" patternUnits="userSpaceOnUse" patternTransform="rotate(45)"><rect width="5" height="5" fill="#f2d3cd"/><path d="M0,2.5 L5,2.5" stroke="#e9b3ad" stroke-width="1"/></pattern></defs><polygon points="86,0 140,0 140,47 127,51 105,33.7 70,22 62,8" fill="url(#hatch)" /><polygon points="140,0 184,0 178,14 168,38 150,34 140,30" fill="#c9d9b5" /><polygon points="127,51 150,40 161,63 140,90 127,90" fill="#c8e8ae" /><polygon points="140,42 156,40 158,60 142,75" fill="#c2e6b6" /><polygon points="28,48 55,55 64,70 66,80 50,86 28,80 22,60" fill="#dadbd5" /><polygon points="0,28 20,33 40,45 31,54 0,50" fill="#c8e0b8" /><polygon points="64,27 108,44.5 117,56.6 117.4,102 100,95 66,76 64,56.6" fill="url(#phatch)" /><polygon points="105,44.5 127,51 127,56.6 116,56.6" fill="#e7d2e0" /><polygon points="100,78 111,76 113,90 101,91" fill="#8fcfad" /><polygon points="78,93 112,93 118.7,112 108,132 104,139 80,139" fill="#bdf2c5" /><polygon points="94.4,100 113.3,100 113.3,120 94.4,120" fill="#f7f7d4" /><polygon points="60.7,106.6 74,106.6 74,121.4 60.7,121.4" fill="#b5f0c9" rx="6"/><polygon points="72.8,125.5 93,125.5 93,153.8 72.8,153.8" fill="#bfe7b5" /><polygon points="74,127 84,127 84,138 74,138" fill="#8fdcb8" /><polygon points="82,141 92,141 92,152 82,152" fill="#8fdcb8" /><polygon points="0,97.8 17.5,110 41.8,120 54,129.5 64.7,141.6 66,145.7 56.6,149.7 40.5,144.3 20,135 0,126.8" fill="#9fcdd9" /><polygon points="62,86 72,88 72,95 62,94" fill="#9fcdd9" /><polygon points="0,166 23,156.5 54,163 56.6,175 54,192.5 50,199 37.8,200.6 0,179" fill="#bdf4c6" /><polygon points="108,139 140,147 180,160 210,172 237,180 245,184 243,190 210,186 170,178 130,170 104,168" fill="#bff3c4" /><polygon points="140,149.7 160,152 172,160 160,166 140,162" fill="#a4d3d8" /><polygon points="140,42 158,40 160,63 150,84 140,90" fill="#bcdcaa" /><polygon points="243,44 300,44 300,63 244,63" fill="#bdf4c6" /><polygon points="196.6,93 215.5,93 215.5,113.3 196.6,113.3" fill="#c6e6b8" /><polygon points="237,91.7 258.7,91.7 258.7,112 237,112" fill="#c6e6b8" /><polygon points="160,100 175,100 175,110 160,110" fill="#f3f2c6" /><polygon points="220,70 236,70 236,84 220,84" fill="#f3f2c6" /><polygon points="186,40 210,40 210,62 186,62" fill="#d2e3c5" /><polygon points="290,20 330,18 330,40 292,42" fill="#d5e2c5" /><polygon points="300,50 340,48 345,70 300,72" fill="#cfe3c2" /><polygon points="262,70 290,72 286,95 262,92" fill="#d0e4c4" /><polygon points="150,160 172,160 178,175 150,175" fill="#c4e8bf" /><polygon points="239,0 372,0 372,40 239,40" fill="#cfe3c0" opacity="0.55"/><polygon points="236,66 310,66 310,143 293,129 273,143 236,150" fill="#cfe6c0" opacity="0.45"/><polygon points="140,0 178,0 178,14 165,40 140,40" fill="#d6e6c6" opacity="0.5"/><polygon points="175,85 236,85 236,150 180,145" fill="#d3e6c4" opacity="0.35"/><polygon points="253,166.6 262,150 276,134 293,126.5 310,125 340,140 370,155 369.4,163.5 350.5,186.4 335.7,200 319.5,201 302,194.5 275,182.4 258.7,186.7" fill="#a9d39b" /><polygon points="280,150 320,140 350,160 340,185 300,185" fill="#b3d9a5" /><polygon points="372,150 415,140 415,300 392,300 368,297 350,240 340,217 345,204" fill="#cbe8bb" /><polygon points="375,167.5 399,167.5 399,210.7 378,210.7" fill="#e6d3e3" /><polygon points="350.5,189 366.7,189 366.7,214.7 350.5,214.7" fill="#c5c5ae" /><polygon points="391,177 414,177 414,206.6 391,206.6" fill="#c4e2b5" /><polygon points="380,60 415,52 415,130 395,135" fill="#d2e4c2" /><polygon points="101,195 140,195 140,229 104,229" fill="#c5c5ae" /><polygon points="117.3,188.5 130.8,188.5 130.8,207.4 117.3,207.4" fill="#a3cf98" /><polygon points="10.8,226 37.8,226 37.8,254.6 10.8,254.6" fill="#f7f6cf" /><polygon points="36.4,214 51.3,214 51.3,231.6 36.4,231.6" fill="#f7f6cf" /><polygon points="56.6,238.4 70,238.4 70,250.5 56.6,250.5" fill="#f7f6cf" /><polygon points="58,218 72.8,218 72.8,237 58,237" fill="#bfe0b0" /><polygon points="4,220.9 17.5,220.9 17.5,231.6 4,231.6" fill="#98c493" /><polygon points="67.4,202 82.3,202 82.3,211.4 67.4,211.4" fill="#f2cfd2" /><polygon points="95,276 132,276 132,302 95,302" fill="#f1d6d3" /><polygon points="105,286 110,286 110,292 105,292" fill="#6fbf8f" /><polygon points="149,291 189,291 190,346 152,344" fill="#f3d2cf" /><polygon points="38,321 55,321 55,338 38,338" fill="#c5c5ae" /><polygon points="38,350 61,350 61,373 38,373" fill="#f1d6d3" /><polygon points="40,374 60,374 58,393 40,393" fill="#e9e6da" /><polygon points="42,376 48,376 48,384 42,384" fill="#71cc9f" /><polygon points="51,378 56,378 56,386 51,386" fill="#71cc9f" /><polygon points="66,354 103,354 105,409 66,409" fill="#c4e8ae" /><polygon points="72,358 80,358 80,368 72,368" fill="#7fd6a8" /><polygon points="80,392 92,392 92,404 80,404" fill="#c8f5d6" /><polygon points="28,396 52,396 52,450 26,450" fill="#bedfb0" /><polygon points="12,300 30,300 30,315 12,315" fill="#f3f2c8" /><polygon points="88,320 102,320 102,335 88,335" fill="#f3f2c8" /><polygon points="186,336 224,336 226,420 205,450 172,450 184,380" fill="#e6d6e3" /><polygon points="156,362 174,352 168,450 150,450" fill="#e3d8e0" /><polygon points="191.7,328.7 203,328.7 203,357.5 191.7,357.5" fill="#f4cfcf" /><polygon points="192,380 215,360 220,372 198,395" fill="#b9cc9e" /><polygon points="171,231.6 183,231.6 183,243.8 171,243.8" fill="#f1d0cd" /><polygon points="236,251 247,251 247,265 236,265" fill="#f1d0cd" /><polygon points="218,226 229,226 229,240 218,240" fill="#c3ebc3" /><polygon points="312.8,208 333,208 333,220 312.8,220" fill="#e8d2e2" /><polygon points="308.7,222.8 331.6,222.8 331.6,240 308.7,240" fill="#c5c5ae" /><polygon points="291,210.7 306,210.7 306,217.4 291,217.4" fill="#f4f3c4" /><polygon points="255,315 280,315 280,350 255,350" fill="#c4ebc4" /><polygon points="270,260 290,260 290,275 270,275" fill="#f2d3d3" /><polygon points="250,290 275,290 275,300 250,300" fill="#f0d5d5" /><polygon points="345,240 356,240 403,240 415,250 415,300 395,330 380,340 358.6,379 350.5,415 345,450 300,450 318,349 335.7,291 339.7,280" fill="#c6ecc2" /><polygon points="380,240 415,235 415,290 403,240" fill="#cfe6c0" /><polygon points="391,290 404.5,290 404.5,315.5 391,315.5" fill="#f3f3cf" /><polygon points="339.7,287 362.7,287 362.7,312.8 339.7,312.8" fill="#e4d3e4" /><polygon points="335.7,279 362.7,279 362.7,291 335.7,291" fill="#bff2c8" /><polygon points="302,298 315.5,298 315.5,310 302,310" fill="#c4ecc4" /><polygon points="268,350 318,349 322,415 300,450 264,450 262,400" fill="#c9e6b4" /><polygon points="273,368.6 291.7,368.6 291.7,391.6 273,391.6" fill="#b4d3a2" /><ellipse cx="282.3" cy="380" rx="5.5" ry="8" fill="#7fd3b8"/><polygon points="295,372 302,372 302,380 295,380" fill="#8fdcb8" /><polygon points="288,400 300,400 300,412 288,412" fill="#9ddcc0" /><polygon points="272,420 285,420 285,435 272,435" fill="#8fdcb8" /><polygon points="300,420 318,420 316,440 300,440" fill="#bfeccc" /><polygon points="268,360 280,360 280,450 268,450" fill="#c7e4b8" /><polygon points="190,360 226,360 215,385 199,414 185,450 170,450" fill="#e6d5e6" /><polygon points="190,362.7 222,362.7 214,383 195,380" fill="#bccaa3" /><polygon points="171,400 183,400 178,450 165,450" fill="#c5e3b5" /><polygon points="383,418 415,412 415,450 380,450" fill="#c8e8bc" /><path d="M392,440 C398,446 405,450 410,452" fill="none" stroke="#5566dd" stroke-width="1.0" stroke-linecap="round" stroke-linejoin="round" stroke-dasharray="1.2 2.4" opacity="0.75"/><path d="M377.5,162 C365,178 352,192 345,204 C338,215 340,228 347,240 C352,248 358,252 362,260 C368,275 372,295 372,305 C371,320 368,330 362,345 C352,360 342,375 339.7,390 C337,405 335,425 333,450" fill="none" stroke="#9fcdd9" stroke-width="4.5" stroke-linecap="round" stroke-linejoin="round" /><polygon points="345,240 356,240 358,252 348,257" fill="#9fcdd9" /><path d="M407,156.7 C412,170 415,185 414,194.5 C410,215 402,230 396.4,240 C398,255 398,268 396,280 C392,295 385,310 372,325" fill="none" stroke="#9fcdd9" stroke-width="3.5" stroke-linecap="round" stroke-linejoin="round" /><path d="M370,160 C358,176 346,190 340,204 C334,216 336,230 342,242" fill="none" stroke="#5566dd" stroke-width="1.0" stroke-linecap="round" stroke-linejoin="round" stroke-dasharray="1.2 2.4" opacity="0.75"/><path d="M384,166 C372,180 358,194 350,206 C344,218 345,228 352,238" fill="none" stroke="#5566dd" stroke-width="1.0" stroke-linecap="round" stroke-linejoin="round" stroke-dasharray="1.2 2.4" opacity="0.75"/><path d="M352,262 C360,280 364,300 364,320 C360,340 345,360 334,385 C330,400 328,425 326,450" fill="none" stroke="#5566dd" stroke-width="1.0" stroke-linecap="round" stroke-linejoin="round" stroke-dasharray="1.2 2.4" opacity="0.75"/><path d="M378,300 C378,320 372,340 362,358 C352,372 346,390 344,410 C342,425 340,440 339,450" fill="none" stroke="#5566dd" stroke-width="1.0" stroke-linecap="round" stroke-linejoin="round" stroke-dasharray="1.2 2.4" opacity="0.75"/><path d="M405,250 C402,280 392,305 372,330" fill="none" stroke="#5566dd" stroke-width="1.0" stroke-linecap="round" stroke-linejoin="round" stroke-dasharray="1.2 2.4" opacity="0.75"/><path d="M412,200 C408,220 402,235 400,245" fill="none" stroke="#5566dd" stroke-width="1.0" stroke-linecap="round" stroke-linejoin="round" stroke-dasharray="1.2 2.4" opacity="0.75"/><path d="M0,12 L14,24 L26,42 L33.7,54 L56.6,63.4 L63.4,70 L75.5,81 L119.4,106.2 L140,116 L160,128 L180.5,143 L210,141.6 L226.3,129.5" fill="none" stroke="#cfcfcf" stroke-width="4.4" stroke-linecap="round" stroke-linejoin="round" /><path d="M150,50 L159,48 L232,39 L280,40 L310,44.5 L360,48" fill="none" stroke="#cfcfcf" stroke-width="4.2" stroke-linecap="round" stroke-linejoin="round" /><path d="M185,0 L188,19 L207.4,85 L226,129.5 L234,150 L240,165" fill="none" stroke="#cfcfcf" stroke-width="3.8" stroke-linecap="round" stroke-linejoin="round" /><path d="M235,0 L234.4,85 L231.7,152 L248,168.6 L280,200.6" fill="none" stroke="#cfcfcf" stroke-width="4.2" stroke-linecap="round" stroke-linejoin="round" /><path d="M280,207.4 L252,220.9 L237,231.6 L229,245 L225,265 L220,300 L218,311" fill="none" stroke="#cfcfcf" stroke-width="5.4" stroke-linecap="round" stroke-linejoin="round" /><path d="M241.5,225 L264.5,242 L327.6,253.7 L361,263 L415,257" fill="none" stroke="#cfcfcf" stroke-width="5.2" stroke-linecap="round" stroke-linejoin="round" /><path d="M372,163.5 L350,182 L335.7,200 L333,225 L331.6,240 L329,273.7 L322,330 L299,415 L292,450" fill="none" stroke="#cfcfcf" stroke-width="4.2" stroke-linecap="round" stroke-linejoin="round" /><path d="M172.4,175 L160,205 L148,238.4 L144,265 L140,300" fill="none" stroke="#cfcfcf" stroke-width="4.2" stroke-linecap="round" stroke-linejoin="round" /><path d="M0,179 L37.8,200.6 L6.7,245 L4,265" fill="none" stroke="#cfcfcf" stroke-width="4.0" stroke-linecap="round" stroke-linejoin="round" /><path d="M5.7,360 L54.6,406" fill="none" stroke="#cfcfcf" stroke-width="4.2" stroke-linecap="round" stroke-linejoin="round" /><path d="M275,205.3 L302,218.8 L333,222.8" fill="none" stroke="#cfcfcf" stroke-width="3.6" stroke-linecap="round" stroke-linejoin="round" /><path d="M0,30 L20,35 L36,36" fill="none" stroke="#cfcfcf" stroke-width="2.8" stroke-linecap="round" stroke-linejoin="round" /><path d="M59,0 L70,8 L86,24" fill="none" stroke="#cfcfcf" stroke-width="3.2" stroke-linecap="round" stroke-linejoin="round" /><path d="M116,90 L127,56.6 L140,40" fill="none" stroke="#cfcfcf" stroke-width="3.0" stroke-linecap="round" stroke-linejoin="round" /><path d="M333.4,172.4 L379.4,163.7 L415,150" fill="none" stroke="#cfcfcf" stroke-width="3.2" stroke-linecap="round" stroke-linejoin="round" /><path d="M188,317 L207,322.7 L270,348.5 L379.4,371.5 L415,380" fill="none" stroke="#cfcfcf" stroke-width="3.6" stroke-linecap="round" stroke-linejoin="round" /><path d="M0,12 L14,24 L26,42 L33.7,54 L56.6,63.4 L63.4,70 L75.5,81 L119.4,106.2 L140,116 L160,128 L180.5,143 L210,141.6 L226.3,129.5" fill="none" stroke="#fdfdfd" stroke-width="3.4" stroke-linecap="round" stroke-linejoin="round" /><path d="M150,50 L159,48 L232,39 L280,40 L310,44.5 L360,48" fill="none" stroke="#fdfdfd" stroke-width="3.2" stroke-linecap="round" stroke-linejoin="round" /><path d="M185,0 L188,19 L207.4,85 L226,129.5 L234,150 L240,165" fill="none" stroke="#fdfdfd" stroke-width="2.8" stroke-linecap="round" stroke-linejoin="round" /><path d="M235,0 L234.4,85 L231.7,152 L248,168.6 L280,200.6" fill="none" stroke="#fdfdfd" stroke-width="3.2" stroke-linecap="round" stroke-linejoin="round" /><path d="M280,207.4 L252,220.9 L237,231.6 L229,245 L225,265 L220,300 L218,311" fill="none" stroke="#fdfdfd" stroke-width="4.4" stroke-linecap="round" stroke-linejoin="round" /><path d="M241.5,225 L264.5,242 L327.6,253.7 L361,263 L415,257" fill="none" stroke="#fdfdfd" stroke-width="4.2" stroke-linecap="round" stroke-linejoin="round" /><path d="M372,163.5 L350,182 L335.7,200 L333,225 L331.6,240 L329,273.7 L322,330 L299,415 L292,450" fill="none" stroke="#fdfdfd" stroke-width="3.2" stroke-linecap="round" stroke-linejoin="round" /><path d="M172.4,175 L160,205 L148,238.4 L144,265 L140,300" fill="none" stroke="#fdfdfd" stroke-width="3.2" stroke-linecap="round" stroke-linejoin="round" /><path d="M0,179 L37.8,200.6 L6.7,245 L4,265" fill="none" stroke="#fdfdfd" stroke-width="3.0" stroke-linecap="round" stroke-linejoin="round" /><path d="M5.7,360 L54.6,406" fill="none" stroke="#fdfdfd" stroke-width="3.2" stroke-linecap="round" stroke-linejoin="round" /><path d="M275,205.3 L302,218.8 L333,222.8" fill="none" stroke="#fdfdfd" stroke-width="2.6" stroke-linecap="round" stroke-linejoin="round" /><path d="M0,30 L20,35 L36,36" fill="none" stroke="#fdfdfd" stroke-width="1.8" stroke-linecap="round" stroke-linejoin="round" /><path d="M59,0 L70,8 L86,24" fill="none" stroke="#fdfdfd" stroke-width="2.2" stroke-linecap="round" stroke-linejoin="round" /><path d="M116,90 L127,56.6 L140,40" fill="none" stroke="#fdfdfd" stroke-width="2.0" stroke-linecap="round" stroke-linejoin="round" /><path d="M333.4,172.4 L379.4,163.7 L415,150" fill="none" stroke="#fdfdfd" stroke-width="2.2" stroke-linecap="round" stroke-linejoin="round" /><path d="M188,317 L207,322.7 L270,348.5 L379.4,371.5 L415,380" fill="none" stroke="#fdfdfd" stroke-width="2.6" stroke-linecap="round" stroke-linejoin="round" /><path d="M184,0 L178,14 L161,63 L140,90.4 L118.7,112 L108,132 L99.8,168.6 L97,175 L86.3,212.8 L75.5,242.4 L68.8,265 L68,300 L72.8,338 L57.5,407 L28.7,450" fill="none" stroke="#c9c88f" stroke-width="6.4" stroke-linecap="round" stroke-linejoin="round" /><path d="M0,166 L23,156.5 L54,163 L99.8,171.3" fill="none" stroke="#c9c88f" stroke-width="6.4" stroke-linecap="round" stroke-linejoin="round" /><path d="M0,248.5 L67.4,261.3" fill="none" stroke="#c9c88f" stroke-width="6.4" stroke-linecap="round" stroke-linejoin="round" /><path d="M57.5,409 L126.4,450" fill="none" stroke="#c9c88f" stroke-width="6.4" stroke-linecap="round" stroke-linejoin="round" /><path d="M415,310 L405.9,357 L390,400 L370.8,450" fill="none" stroke="#c9c88f" stroke-width="6.4" stroke-linecap="round" stroke-linejoin="round" /><path d="M184,0 L178,14 L161,63 L140,90.4 L118.7,112 L108,132 L99.8,168.6 L97,175 L86.3,212.8 L75.5,242.4 L68.8,265 L68,300 L72.8,338 L57.5,407 L28.7,450" fill="none" stroke="#f4f4b4" stroke-width="4.6" stroke-linecap="round" stroke-linejoin="round" /><path d="M0,166 L23,156.5 L54,163 L99.8,171.3" fill="none" stroke="#f4f4b4" stroke-width="4.6" stroke-linecap="round" stroke-linejoin="round" /><path d="M0,248.5 L67.4,261.3" fill="none" stroke="#f4f4b4" stroke-width="4.6" stroke-linecap="round" stroke-linejoin="round" /><path d="M57.5,409 L126.4,450" fill="none" stroke="#f4f4b4" stroke-width="4.6" stroke-linecap="round" stroke-linejoin="round" /><path d="M415,310 L405.9,357 L390,400 L370.8,450" fill="none" stroke="#f4f4b4" stroke-width="4.6" stroke-linecap="round" stroke-linejoin="round" /><path d="M97,175 L86.3,212.8 L75.5,242.4 L68.8,265 L68,300 L72.8,338 L57.5,407 L126.4,450" fill="none" stroke="#6f6f6f" stroke-width="0.9" stroke-linecap="round" stroke-linejoin="round" /><path d="M382,0 L415,42" fill="none" stroke="#c9a070" stroke-width="6" stroke-linecap="round" stroke-linejoin="round" /><path d="M382,0 L415,42" fill="none" stroke="#f2c98f" stroke-width="4.4" stroke-linecap="round" stroke-linejoin="round" /><path d="M0,145.7 L54,157.8 L102.5,171.3 L140,184.4 L180.5,194 L198,206 L206,218" fill="none" stroke="#5c5c5c" stroke-width="3.6" stroke-linecap="round" stroke-linejoin="round" /><path d="M0,145.7 L54,157.8 L102.5,171.3 L140,184.4 L180.5,194 L198,206 L206,218" fill="none" stroke="#d8d8d8" stroke-width="1.2240000000000002" stroke-linecap="round" stroke-linejoin="round" stroke-dasharray="5 5" stroke-linecap="butt"/><path d="M214,229 L221,215.5 L245,204.7 L280,198 L415,229.6" fill="none" stroke="#5c5c5c" stroke-width="3.6" stroke-linecap="round" stroke-linejoin="round" /><path d="M214,229 L221,215.5 L245,204.7 L280,198 L415,229.6" fill="none" stroke="#d8d8d8" stroke-width="1.2240000000000002" stroke-linecap="round" stroke-linejoin="round" stroke-dasharray="5 5" stroke-linecap="butt"/><path d="M54,0 L56.6,85 L58,118.7 L67.4,143 L83.6,160.5 L99.8,171.3" fill="none" stroke="#5a5a5a" stroke-width="3.2" stroke-linecap="round" stroke-linejoin="round" /><path d="M54,0 L56.6,85 L58,118.7 L67.4,143 L83.6,160.5 L99.8,171.3" fill="none" stroke="#d8d8d8" stroke-width="1.088" stroke-linecap="round" stroke-linejoin="round" stroke-dasharray="4 4" stroke-linecap="butt"/><path d="M191,0 L190,29 L186,85 L177.8,101 L145.4,145.7 L160,165 L180.5,175" fill="none" stroke="#808080" stroke-width="1.7" stroke-linecap="round" stroke-linejoin="round" /><path d="M224,216 C232,190 244,160 256,138 C270,125 290,120 310,120.7 C330,121 345,124 360,128" fill="none" stroke="#7f7f7f" stroke-width="1.7" stroke-linecap="round" stroke-linejoin="round" /><path d="M372,0 L373.6,34.5" fill="none" stroke="#7d7f95" stroke-width="1.2" stroke-linecap="round" stroke-linejoin="round" /><path d="M206,218 L203,245 L196,300 L161,450" fill="none" stroke="#9a9a9a" stroke-width="12" stroke-linecap="round" stroke-linejoin="round" /><path d="M206,218 L203,245 L196,300 L161,450" fill="none" stroke="#c8c8c8" stroke-width="6" stroke-linecap="round" stroke-linejoin="round" stroke-dasharray="4 2"/><path d="M206,218 L203,245 L196,300 L161,450" fill="none" stroke="#6e6e6e" stroke-width="2.2" stroke-linecap="round" stroke-linejoin="round" /><path d="M208,218 L205.5,245 L199.5,300 L165,450" fill="none" stroke="#7a7a7a" stroke-width="1.3" stroke-linecap="round" stroke-linejoin="round" /><path d="M204,218 L200.5,245 L192.5,300 L157,450" fill="none" stroke="#7a7a7a" stroke-width="1.3" stroke-linecap="round" stroke-linejoin="round" /><path d="M45.9,203.3 L140,237 L199,258.6 L207,262 L241.5,276.7 L293,253.7 L327.6,256.6" fill="none" stroke="#7d7d7d" stroke-width="1.3" stroke-linecap="round" stroke-linejoin="round" /><path d="M0,358 L140,300 L186.7,291 L198,289" fill="none" stroke="#7d7d7d" stroke-width="1.3" stroke-linecap="round" stroke-linejoin="round" /><path d="M207,282.5 L277.7,290 L292.5,299 L315.5,310 L335.7,312.8 L358.6,330 L380,345 L415,350" fill="none" stroke="#7d7d7d" stroke-width="1.3" stroke-linecap="round" stroke-linejoin="round" /><path d="M292.5,299 L307,330" fill="none" stroke="#7d7d7d" stroke-width="1.3" stroke-linecap="round" stroke-linejoin="round" /><path d="M272,348 L255,380 L234.4,414 L233,425" fill="none" stroke="#7d7d7d" stroke-width="1.3" stroke-linecap="round" stroke-linejoin="round" /><path d="M302,325.5 L316,351" fill="none" stroke="#7d7d7d" stroke-width="1.3" stroke-linecap="round" stroke-linejoin="round" /><path d="M208,305 L140,372.8 L86,450" fill="none" stroke="#7d7d7d" stroke-width="1.3" stroke-linecap="round" stroke-linejoin="round" /><path d="M188,317 L207,322.7 L270,348.5 L379.4,371.5 L415,380" fill="none" stroke="#7a7a7a" stroke-width="1.1" stroke-linecap="round" stroke-linejoin="round" /><ellipse cx="41" cy="203" rx="5" ry="4" fill="#a9d39a" stroke="#6d6d6d" stroke-width="1.3"/><path d="M108,139 L140,147 L180,160 L210,172 L243,181" fill="none" stroke="#5b6fe0" stroke-width="1.1" stroke-linecap="round" stroke-linejoin="round" stroke-dasharray="1.2 2.2" opacity="0.8"/><path d="M350.5,190 L365,172 L377,162" fill="none" stroke="#5b6fe0" stroke-width="1.1" stroke-linecap="round" stroke-linejoin="round" stroke-dasharray="1.2 2.2" opacity="0.8"/><path d="M330,205 L345,215 L350,240" fill="none" stroke="#5b6fe0" stroke-width="1.1" stroke-linecap="round" stroke-linejoin="round" stroke-dasharray="1.2 2.2" opacity="0.8"/><path d="M300,290 L330,280 L345,300" fill="none" stroke="#5b6fe0" stroke-width="1.1" stroke-linecap="round" stroke-linejoin="round" stroke-dasharray="1.2 2.2" opacity="0.8"/><path d="M320,340 L340,330 L350,300" fill="none" stroke="#5b6fe0" stroke-width="1.1" stroke-linecap="round" stroke-linejoin="round" stroke-dasharray="1.2 2.2" opacity="0.8"/><text x="32.4" y="73.1" font-family="Liberation Sans" font-size="11.5" fill="#4d4d4d" letter-spacing="-0.43" stroke="#ffffff" stroke-width="2.2" stroke-opacity="0.7" paint-order="stroke" >Golęcin</text><text x="171.6" y="70.1" font-family="Liberation Sans" font-size="11.5" fill="#4d4d4d" letter-spacing="-0.16" stroke="#ffffff" stroke-width="2.2" stroke-opacity="0.7" paint-order="stroke" >Winiary</text><text x="142.7" y="131.6" font-family="Liberation Sans" font-size="11.5" fill="#4d4d4d" letter-spacing="-0.84" stroke="#ffffff" stroke-width="2.2" stroke-opacity="0.7" paint-order="stroke" >Sołacz</text><text x="-2" y="219.6" font-family="Liberation Sans" font-size="11.5" fill="#4d4d4d" letter-spacing="0.64" stroke="#ffffff" stroke-width="2.2" stroke-opacity="0.7" paint-order="stroke" >rody</text><text x="-2" y="285.1" font-family="Liberation Sans" font-size="11.5" fill="#4d4d4d" letter-spacing="-0.15" stroke="#ffffff" stroke-width="2.2" stroke-opacity="0.7" paint-order="stroke" >d Północ</text><text x="70.4" y="311.6" font-family="Liberation Sans" font-size="11.5" fill="#4d4d4d" letter-spacing="-0.06" stroke="#ffffff" stroke-width="2.2" stroke-opacity="0.7" paint-order="stroke" >Grunwald</text><text x="106.3" y="400.9" font-family="Liberation Sans" font-size="11.5" fill="#4d4d4d" letter-spacing="-0.30" stroke="#ffffff" stroke-width="2.2" stroke-opacity="0.7" paint-order="stroke" >Łazarz</text><text x="281" y="282.9" font-family="Liberation Sans" font-size="13.5" fill="#484848" letter-spacing="-0.12" stroke="#ffffff" stroke-width="2.2" stroke-opacity="0.7" paint-order="stroke" >Poznań</text><text x="351.5" y="369.1" font-family="Liberation Sans" font-size="11.5" fill="#4d4d4d" letter-spacing="-0.27" stroke="#ffffff" stroke-width="2.2" stroke-opacity="0.7" paint-order="stroke" >Święty</text><text x="266" y="450.1" font-family="Liberation Sans" font-size="11.5" fill="#4d4d4d" letter-spacing="-0.29" stroke="#ffffff" stroke-width="2.2" stroke-opacity="0.7" paint-order="stroke" >Łęgi Dębińskie</text><text x="402" y="440.1" font-family="Liberation Sans" font-size="11.5" fill="#4d4d4d" letter-spacing="4.41" stroke="#ffffff" stroke-width="2.2" stroke-opacity="0.7" paint-order="stroke" >ta</text><text x="248.7" y="7.6" font-family="Liberation Sans" font-size="10" fill="#6a6a6a" letter-spacing="-0.87" stroke="#ffffff" stroke-width="2.2" stroke-opacity="0.7" paint-order="stroke" >Osiedle</text><text x="301.8" y="7.0" font-family="Liberation Sans" font-size="10" fill="#6a6a6a" letter-spacing="-0.87" stroke="#ffffff" stroke-width="2.2" stroke-opacity="0.7" paint-order="stroke" >Osiedle</text><text x="293" y="53.0" font-family="Liberation Sans" font-size="11" fill="#555" letter-spacing="3.72" stroke="#ffffff" stroke-width="2.2" stroke-opacity="0.7" paint-order="stroke" >o W</text><text x="291.7" y="151.4" font-family="Liberation Sans" font-size="9.5" fill="#3f9c55" letter-spacing="-1.62"  font-style="italic">Obsz</text><text x="292.6" y="161.4" font-family="Liberation Sans" font-size="9.5" fill="#3f9c55" letter-spacing="-1.72"  font-style="italic">Natu</text><text x="271.6" y="171.4" font-family="Liberation Sans" font-size="9.5" fill="#3f9c55" letter-spacing="-0.31"  font-style="italic">2000 Fortyfikacje</text><text x="283" y="182.9" font-family="Liberation Sans" font-size="9.5" fill="#3f9c55" letter-spacing="-0.50"  font-style="italic">w Poznaniu</text><text x="0" y="0" font-family="Liberation Sans" font-size="9" font-style="italic" fill="#4a7fb0" transform="translate(368,213) rotate(-72)">Kanał Ulgi</text><text x="0" y="0" font-family="Liberation Sans" font-size="9" font-style="italic" fill="#4a7fb0" transform="translate(367,250) rotate(82)">Warta</text><rect x="79.6" y="185" width="23.6" height="14.3" rx="2" fill="#eef0cf" stroke="#c4c6a2" stroke-width="1"/><text x="83.3" y="195.7" font-family="Liberation Sans" font-size="9.5" font-weight="bold" fill="#555" letter-spacing="0.2">433</text><path d="M233.70000000000005,0 L234,30 L233,47.69999999999999 L229.79999999999995,68 L229.79999999999995,87 L229.5,108.5 L229.5,127.19999999999999 L226.79999999999995,148.2 L222.39999999999998,166.39999999999998 L217.60000000000002,186.5 L212.39999999999998,205.60000000000002 L206.70000000000005,224.8" fill="none" stroke="#fff" stroke-width="6.5" stroke-linecap="round" stroke-linejoin="round" opacity="0.9"/><path d="M233.70000000000005,0 L234,30" stroke="#e3a22a" stroke-width="4.6" stroke-linecap="butt"/><path d="M234,30 L233,47.69999999999999" stroke="#12b85a" stroke-width="4.6" stroke-linecap="butt"/><path d="M233,47.69999999999999 L229.79999999999995,68" stroke="#e3a22a" stroke-width="4.6" stroke-linecap="butt"/><path d="M229.79999999999995,68 L229.79999999999995,87" stroke="#e3a22a" stroke-width="4.6" stroke-linecap="butt"/><path d="M229.79999999999995,87 L229.5,108.5" stroke="#3b7de8" stroke-width="4.6" stroke-linecap="butt"/><path d="M229.5,108.5 L229.5,127.19999999999999" stroke="#3b7de8" stroke-width="4.6" stroke-linecap="butt"/><path d="M229.5,127.19999999999999 L226.79999999999995,148.2" stroke="#e3a22a" stroke-width="4.6" stroke-linecap="butt"/><path d="M226.79999999999995,148.2 L222.39999999999998,166.39999999999998" stroke="#e3a22a" stroke-width="4.6" stroke-linecap="butt"/><path d="M222.39999999999998,166.39999999999998 L217.60000000000002,186.5" stroke="#e3a22a" stroke-width="4.6" stroke-linecap="butt"/><path d="M217.60000000000002,186.5 L212.39999999999998,205.60000000000002" stroke="#e3a22a" stroke-width="4.6" stroke-linecap="butt"/><path d="M212.39999999999998,205.60000000000002 L206.70000000000005,224.8" stroke="#3b7de8" stroke-width="4.6" stroke-linecap="butt"/><circle cx="233" cy="47.69999999999999" r="3.9" fill="none" stroke="#fff" stroke-width="1.8"/><circle cx="229.79999999999995" cy="68" r="3.9" fill="none" stroke="#fff" stroke-width="1.8"/><circle cx="229.79999999999995" cy="87" r="3.9" fill="none" stroke="#fff" stroke-width="1.8"/><circle cx="229.5" cy="108.5" r="3.9" fill="none" stroke="#fff" stroke-width="1.8"/><circle cx="229.5" cy="127.19999999999999" r="3.9" fill="none" stroke="#fff" stroke-width="1.8"/><circle cx="226.79999999999995" cy="148.2" r="3.9" fill="none" stroke="#fff" stroke-width="1.8"/><circle cx="222.39999999999998" cy="166.39999999999998" r="3.9" fill="none" stroke="#fff" stroke-width="1.8"/><circle cx="217.60000000000002" cy="186.5" r="3.9" fill="none" stroke="#fff" stroke-width="1.8"/><circle cx="212.39999999999998" cy="205.60000000000002" r="3.9" fill="none" stroke="#fff" stroke-width="1.8"/><circle cx="206.70000000000005" cy="224.8" r="6.2" fill="#12b85a" stroke="#fff" stroke-width="1.2" opacity="0.9"/><circle cx="201.29999999999995" cy="235.3" r="13.3" fill="#0dbb50" stroke="#fff" stroke-width="1.6"/><circle cx="206.70000000000005" cy="224.8" r="6.2" fill="none" stroke="#fff" stroke-width="1" opacity="0.8"/><path d="M197.79999999999995,228.8 L207.29999999999995,235.3 L197.79999999999995,241.8 Z" fill="none" stroke="#fff" stroke-width="1.6" stroke-linejoin="round"/></g></svg><div class="abs" style="left:319px;top:188.5px;width:118.00px;height:19.50px;border-radius:9.75px;background:rgba(243,246,249,.93);box-shadow:0 1px 2px rgba(0,0,0,.08)"></div><svg style="position:absolute;left:326.5px;top:192.2px" width="12" height="12" viewBox="0 0 24 24" fill="none" stroke="#1d3a5c" stroke-width="2" stroke-linecap="round" stroke-linejoin="round" ><polygon points="3 11 22 2 13 21 11 13 3 11"/></svg><div class="t" style="left:344.11px;top:192.42px;font-size:11.5px;color:#1d3a5c;letter-spacing:-0.127px;">23 punktów GPS</div><div class="abs" style="left:444.5px;top:188.5px;width:118.10px;height:19.50px;border-radius:9.75px;background:#0dbb50;"></div><div class="t" style="left:451.81px;top:192.42px;font-size:11.5px;color:#ffffff;letter-spacing:0.061px;">Wysoka dokładność</div><div class="abs" style="left:570.5px;top:188.5px;width:110.20px;height:19.50px;border-radius:9.75px;background:rgba(243,246,249,.93);box-shadow:0 1px 2px rgba(0,0,0,.08)"></div><svg style="position:absolute;left:576.8px;top:192.2px" width="12" height="12" viewBox="0 0 24 24" fill="none" stroke="#333" stroke-width="2" stroke-linecap="round" stroke-linejoin="round" ><path d="m12 14 4-4"/><path d="M3.34 19a10 10 0 1 1 17.32 0"/></svg><div class="t" style="left:595.71px;top:192.42px;font-size:11.5px;color:#111;letter-spacing:0.022px;">Maks.: 72 km/h</div><div class="abs" style="left:688.6px;top:189.4px;width:30.4px;height:27px;border-radius:7px;background:#e2eaf2"></div><svg style="position:absolute;left:696.5px;top:195.5px" width="15" height="15" viewBox="0 0 24 24" fill="none" stroke="#1d3a5c" stroke-width="2" stroke-linecap="round" stroke-linejoin="round" ><path d="M20 10c0 4.993-5.539 10.193-7.399 11.799a1 1 0 0 1-1.202 0C9.539 20.193 4 14.993 4 10a8 8 0 0 1 16 0"/><circle cx="12" cy="10" r="3"/></svg><div class="abs" style="left:319px;top:216px;width:102.70px;height:18.20px;border-radius:9.10px;background:rgba(243,246,249,.93);box-shadow:0 1px 2px rgba(0,0,0,.08)"></div><div class="t" style="left:326.51px;top:219.32px;font-size:11.5px;color:#111;letter-spacing:0.081px;">Średnia: 56 km/h</div><div class="abs" style="left:621.7px;top:225.2px;width:97.3px;height:117px;border-radius:8px;background:rgba(243,246,249,.93);box-shadow:0 1px 3px rgba(0,0,0,.08)"></div><div class="t" style="left:627.84px;top:232.78px;font-size:11px;color:#222;letter-spacing:0.337px;">Prędkość (km/h)</div><div class="abs" style="left:628.6px;top:250.8px;width:11px;height:11px;border-radius:6px;background:#0fbf5a"></div><div class="t" style="left:642.31px;top:250.62px;font-size:11.5px;color:#222;letter-spacing:0.218px;">&lt;30 km/h</div><div class="abs" style="left:628.6px;top:268.8px;width:11px;height:11px;border-radius:6px;background:#3b78e8"></div><div class="t" style="left:642.31px;top:268.62px;font-size:11.5px;color:#222;letter-spacing:0.514px;">30-60 km/h</div><div class="abs" style="left:628.6px;top:286.4px;width:11px;height:11px;border-radius:6px;background:#e6a32a"></div><div class="t" style="left:642.31px;top:286.22px;font-size:11.5px;color:#222;letter-spacing:0.514px;">60-90 km/h</div><div class="abs" style="left:628.6px;top:304.5px;width:11px;height:11px;border-radius:6px;background:#f46a25"></div><div class="t" style="left:642.31px;top:304.32px;font-size:11.5px;color:#222;letter-spacing:0.273px;">90-120 km/h</div><div class="abs" style="left:628.6px;top:322.7px;width:11px;height:11px;border-radius:6px;background:#ef3346"></div><div class="t" style="left:642.31px;top:322.52px;font-size:11.5px;color:#222;letter-spacing:-0.171px;">&gt;120 km/h</div><div class="abs" style="left:691.7px;top:504.3px;width:25.5px;height:78.3px;border-radius:5px;background:#fff;box-shadow:0 0 0 1.5px rgba(0,0,0,.08)"></div><div class="abs" style="left:691.7px;top:530.5px;width:25.5px;height:1px;background:#ddd"></div><div class="abs" style="left:691.7px;top:556.5px;width:25.5px;height:1px;background:#ddd"></div><svg style="position:absolute;left:698px;top:511px" width="13" height="13" viewBox="0 0 13 13"><path d="M6.5 1v11M1 6.5h11" stroke="#111" stroke-width="2.4"/></svg><svg style="position:absolute;left:698px;top:537px" width="13" height="13" viewBox="0 0 13 13"><path d="M1 6.5h11" stroke="#111" stroke-width="2.4"/></svg><svg style="position:absolute;left:699px;top:561px" width="11" height="17" viewBox="0 0 11 17"><path d="M5.5 1 L10 7.5 H1 Z" fill="#222"/><path d="M5.5 16 L10 9.5 H1 Z" fill="#bbb"/></svg><div class="abs" style="left:481.6px;top:600.6px;width:236px;height:20px;border-radius:10px;background:rgba(255,255,255,.92)"></div><div class="t" style="left:488.34px;top:605.28px;font-size:11px;color:#333;letter-spacing:0.177px;-webkit-text-stroke:0;">MapLibre</div><div class="t" style="left:537.84px;top:605.28px;font-size:11px;color:#333;letter-spacing:0.243px;-webkit-text-stroke:0;">|</div><div class="t" style="left:542.34px;top:605.28px;font-size:11px;color:#333;letter-spacing:0.028px;-webkit-text-stroke:0;">© OpenStreetMap contributors</div><div class="abs" style="left:697px;top:601px;width:20px;height:20px;border-radius:10px;background:rgba(0,0,0,.05)"></div><div class="abs" style="left:700.5px;top:605px;width:13px;height:13px;border-radius:7px;background:#000"></div><div class="abs" style="left:706px;top:607.3px;width:2.2px;height:2.2px;border-radius:1px;background:#fff"></div><div class="abs" style="left:706px;top:610.3px;width:2.2px;height:5.5px;background:#fff"></div>
</body></html>
